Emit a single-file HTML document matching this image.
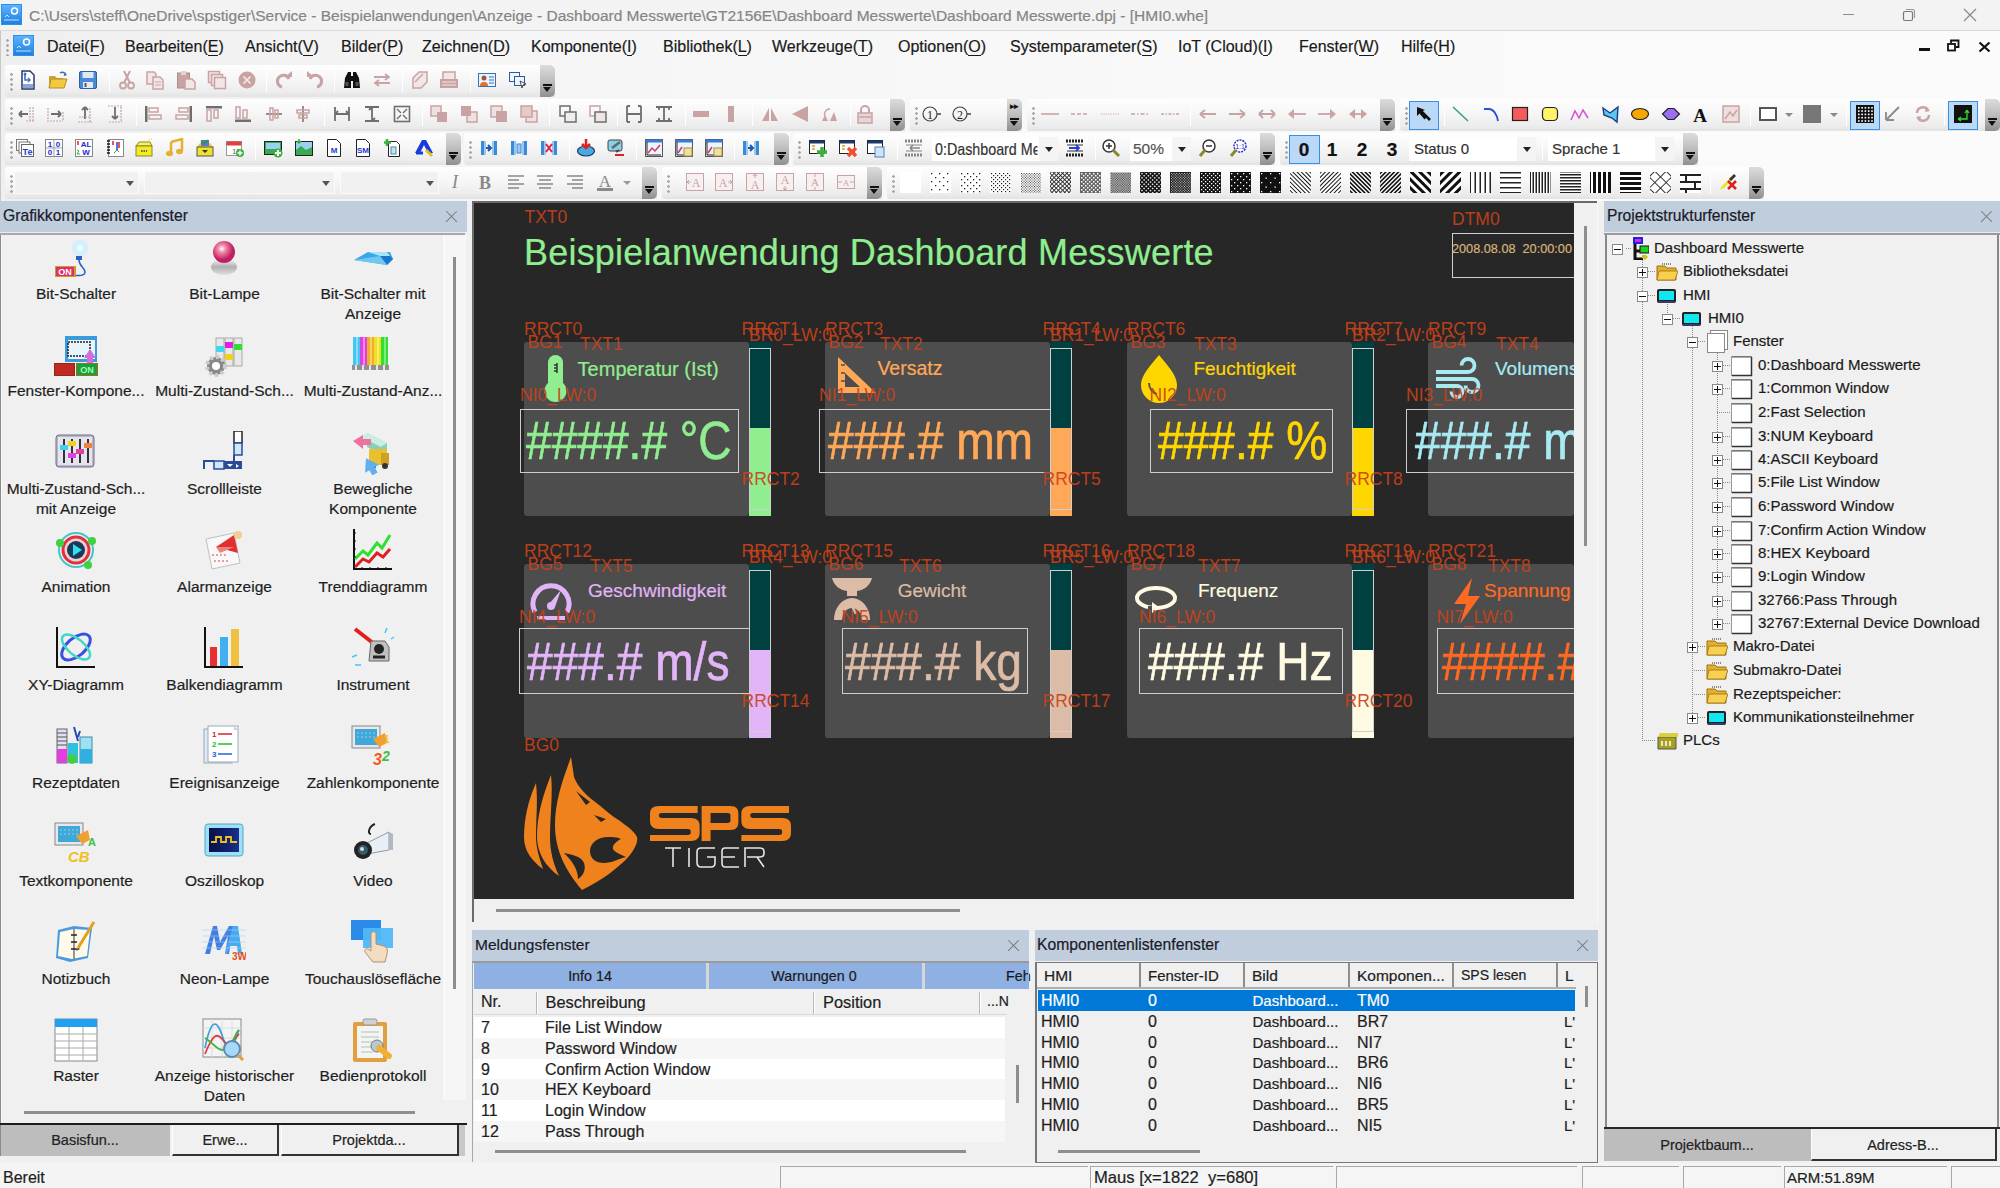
<!DOCTYPE html><html><head><meta charset="utf-8"><style>
*{margin:0;padding:0;box-sizing:border-box}
html,body{width:2000px;height:1188px;overflow:hidden;background:#f0f0f0;font-family:"Liberation Sans",sans-serif;color:#000}
.a{position:absolute}
.t{position:absolute;white-space:pre;line-height:1;-webkit-text-stroke:0.2px currentColor}
.tb{position:absolute;height:32px;background:linear-gradient(#fefefe,#f6f6f6 45%,#ececec 85%,#e2e2e2);border-radius:3px 0 0 3px}
.grip{position:absolute;width:3px;height:19px;background:radial-gradient(circle,#a8a8a8 1.2px,transparent 1.5px) 0 0/3px 5px}
.chev{position:absolute;width:15px;height:32px;border-radius:0 5px 5px 0;background:linear-gradient(#dcdcdc,#bdbdbd 50%,#8f8f8f)}
.chev:after{content:"";position:absolute;left:3px;top:22px;width:0;height:0;border-left:4.5px solid transparent;border-right:4.5px solid transparent;border-top:5px solid #111}
.chev:before{content:"";position:absolute;left:3px;top:19px;width:9px;height:1.5px;background:#111}
.sep{position:absolute;width:1px;height:22px;background:#c9c9c9;border-right:1px solid #fff}
.ptitle{position:absolute;height:31px;background:#bfcddc}
.pclose{position:absolute;width:11px;height:11px}
.pclose:before,.pclose:after{content:"";position:absolute;left:-2px;top:5px;width:15px;height:1.3px;background:#7a7a7a;transform:rotate(45deg)}
.pclose:after{transform:rotate(-45deg)}
.lbl{position:absolute;white-space:pre;line-height:1;font-size:17px;color:#c9421a;opacity:.9}
u{text-decoration:none;border-bottom:1px solid currentColor}
</style></head><body>
<div class="a" style="left:0px;top:0px;width:2000px;height:30px;background:#f3f3f3"></div>
<div class="a" style="left:0px;top:30px;width:2000px;height:1px;background:#d9d9d9"></div>
<div class="t" style="left:29px;top:8px;font-size:15.5px;color:#858585;">C:\Users\steff\OneDrive\spstiger\Service - Beispielanwendungen\Anzeige - Dashboard Messwerte\GT2156E\Dashboard Messwerte\Dashboard Messwerte.dpj - [HMI0.whe]</div>
<div class="a" style="left:1843px;top:14px;width:11px;height:1px;background:#8a8a8a"></div>
<svg class="a" style="left:1902px;top:8px;" width="14" height="14" viewBox="0 0 14 14"><rect x="1.5" y="3.5" width="9" height="9" rx="1.5" fill="none" stroke="#777" stroke-width="1.2"/><path d="M4 1.5h6.5a2 2 0 0 1 2 2V10" fill="none" stroke="#999" stroke-width="1.2"/></svg>
<svg class="a" style="left:1963px;top:8px;" width="14" height="14" viewBox="0 0 14 14"><path d="M1 1L13 13M13 1L1 13" stroke="#888" stroke-width="1.2"/></svg>
<div class="a" style="left:0px;top:31px;width:2000px;height:170px;background:linear-gradient(90deg,#efefef,#f5f5f5 25%,#f9f9f9 60%,#fbfbfb)"></div>
<div class="grip" style="left:6px;top:38px;height:18px"></div>
<div class="t" style="left:47px;top:39px;font-size:16px;color:#1a1a1a">Datei(<u>F</u>)</div>
<div class="t" style="left:125px;top:39px;font-size:16px;color:#1a1a1a">Bearbeiten(<u>E</u>)</div>
<div class="t" style="left:245px;top:39px;font-size:16px;color:#1a1a1a">Ansicht(<u>V</u>)</div>
<div class="t" style="left:341px;top:39px;font-size:16px;color:#1a1a1a">Bilder(<u>P</u>)</div>
<div class="t" style="left:422px;top:39px;font-size:16px;color:#1a1a1a">Zeichnen(<u>D</u>)</div>
<div class="t" style="left:531px;top:39px;font-size:16px;color:#1a1a1a">Komponente(<u>I</u>)</div>
<div class="t" style="left:663px;top:39px;font-size:16px;color:#1a1a1a">Bibliothek(<u>L</u>)</div>
<div class="t" style="left:772px;top:39px;font-size:16px;color:#1a1a1a">Werkzeuge(<u>T</u>)</div>
<div class="t" style="left:898px;top:39px;font-size:16px;color:#1a1a1a">Optionen(<u>O</u>)</div>
<div class="t" style="left:1010px;top:39px;font-size:16px;color:#1a1a1a">Systemparameter(<u>S</u>)</div>
<div class="t" style="left:1178px;top:39px;font-size:16px;color:#1a1a1a">IoT (Cloud)(<u>I</u>)</div>
<div class="t" style="left:1299px;top:39px;font-size:16px;color:#1a1a1a">Fenster(<u>W</u>)</div>
<div class="t" style="left:1401px;top:39px;font-size:16px;color:#1a1a1a">Hilfe(<u>H</u>)</div>
<div class="a" style="left:1919px;top:48px;width:11px;height:3px;background:#111"></div>
<svg class="a" style="left:1947px;top:39px;" width="13" height="13" viewBox="0 0 13 13"><rect x="1" y="5" width="7" height="6.5" fill="none" stroke="#111" stroke-width="1.8"/><path d="M4 4V1.5h7.5V8H9" fill="none" stroke="#111" stroke-width="1.8"/></svg>
<svg class="a" style="left:1978px;top:41px;" width="13" height="12" viewBox="0 0 13 12"><path d="M1.5 1.5L11.5 10.5M11.5 1.5L1.5 10.5" stroke="#111" stroke-width="2.2"/></svg>
<div class="tb" style="left:5px;top:65px;width:550px"></div>
<div class="grip" style="left:10px;top:72px"></div>
<div class="chev" style="left:540px;top:65px"></div>
<svg class="a" style="left:18px;top:70px;" width="20" height="20" viewBox="0 0 20 20"><path d="M4 1h8l4 4v14H4z" fill="#fff" stroke="#2b3a66" stroke-width="1.5"/><path d="M7 4v6h4" fill="none" stroke="#3a6fd0" stroke-width="1.6"/><circle cx="7" cy="4" r="1.5" fill="#3a6fd0"/><path d="M10 8l2 2-2 2" fill="none" stroke="#3a6fd0" stroke-width="1.4"/><rect x="5" y="14" width="10" height="4" fill="#8aa6d8"/></svg>
<svg class="a" style="left:48px;top:70px;" width="20" height="20" viewBox="0 0 20 20"><path d="M1 6h6l1.5 2H15v9H1z" fill="#c9a43a"/><path d="M3 9h16l-3 9H1z" fill="#f3c940" stroke="#b58a20" stroke-width="1"/><path d="M12 3a4 4 0 0 1 6 2" fill="none" stroke="#3c6ea8" stroke-width="1.5"/><path d="M17 3l1.5 2.5-3 .5z" fill="#3c6ea8"/></svg>
<svg class="a" style="left:78px;top:70px;" width="20" height="20" viewBox="0 0 20 20"><rect x="1.5" y="1.5" width="17" height="17" rx="1.5" fill="#4a8ad6" stroke="#2c5fa8" stroke-width="1"/><rect x="4.5" y="2" width="11" height="6" fill="#dfe9f6"/><rect x="5" y="12" width="10" height="6" fill="#e8e8e8"/><rect x="6.5" y="13" width="2" height="4" fill="#2c5fa8"/></svg>
<svg class="a" style="left:117px;top:70px;" width="20" height="20" viewBox="0 0 20 20"><circle cx="6" cy="15.5" r="3" fill="none" stroke="#c9a3a3" stroke-width="1.8"/><circle cx="14" cy="15.5" r="3" fill="none" stroke="#c9a3a3" stroke-width="1.8"/><path d="M7 13L13 1M13 13L7 1" stroke="#c9a3a3" stroke-width="2"/></svg>
<svg class="a" style="left:145px;top:70px;" width="20" height="20" viewBox="0 0 20 20"><path d="M2 2h7l2 2v10H2z" fill="#f3e6e6" stroke="#c9a3a3" stroke-width="1.5"/><path d="M8 7h7l3 3v9H8z" fill="#f3e6e6" stroke="#c9a3a3" stroke-width="1.5"/><path d="M10 12h6M10 15h6" stroke="#c9a3a3"/></svg>
<svg class="a" style="left:176px;top:70px;" width="20" height="20" viewBox="0 0 20 20"><rect x="1.5" y="3" width="12" height="15" fill="#c9a3a3" stroke="#b08a8a"/><rect x="5" y="1" width="5" height="4" fill="#e6d2d2"/><path d="M9 9h7l3 3v7H9z" fill="#f3e6e6" stroke="#c9a3a3" stroke-width="1.5"/></svg>
<svg class="a" style="left:207px;top:70px;" width="20" height="20" viewBox="0 0 20 20"><rect x="1.5" y="1.5" width="11" height="11" fill="#f3e6e6" stroke="#c9a3a3" stroke-width="1.5"/><rect x="4.5" y="4.5" width="11" height="11" fill="#f3e6e6" stroke="#c9a3a3" stroke-width="1.5"/><rect x="7.5" y="7.5" width="11" height="11" fill="#f3e6e6" stroke="#c9a3a3" stroke-width="1.5"/></svg>
<svg class="a" style="left:237px;top:70px;" width="20" height="20" viewBox="0 0 20 20"><circle cx="10" cy="10" r="8.5" fill="#c9a3a3"/><path d="M6.5 6.5l7 7M13.5 6.5l-7 7" stroke="#f6eaea" stroke-width="1.6"/></svg>
<svg class="a" style="left:274px;top:70px;" width="20" height="20" viewBox="0 0 20 20"><path d="M15 9A6 6 0 1 0 8 17" fill="none" stroke="#c9a3a3" stroke-width="3"/><path d="M11 7h7V1z" fill="#c9a3a3"/></svg>
<svg class="a" style="left:305px;top:70px;" width="20" height="20" viewBox="0 0 20 20"><path d="M5 9a6 6 0 1 1 7 8" fill="none" stroke="#c9a3a3" stroke-width="3"/><path d="M9 7H2V1z" fill="#c9a3a3"/></svg>
<svg class="a" style="left:342px;top:70px;" width="20" height="20" viewBox="0 0 20 20"><path d="M2 18l1-10 3-6h3v16zM18 18l-1-10-3-6h-3v16z" fill="#111"/><rect x="8" y="6" width="4" height="5" fill="#111"/><rect x="3.5" y="12" width="3" height="4" fill="#555"/><rect x="13.5" y="12" width="3" height="4" fill="#555"/></svg>
<svg class="a" style="left:372px;top:70px;" width="20" height="20" viewBox="0 0 20 20"><path d="M2 7h15M13 4l4 3-4 3M18 13H3M7 10l-4 3 4 3" fill="none" stroke="#c9a3a3" stroke-width="1.8"/></svg>
<svg class="a" style="left:410px;top:70px;" width="20" height="20" viewBox="0 0 20 20"><path d="M3 8l6-6h8v10l-6 6H3z" fill="#f3e6e6" stroke="#c9a3a3" stroke-width="1.5"/><path d="M5 12l8-8" stroke="#c9a3a3" stroke-width="1.5"/></svg>
<svg class="a" style="left:439px;top:70px;" width="20" height="20" viewBox="0 0 20 20"><rect x="1" y="9" width="18" height="9" fill="#c9a3a3"/><path d="M4 9V2h12v7" fill="#f3e6e6" stroke="#c9a3a3" stroke-width="1.5"/><path d="M3 12h14M3 15h14" stroke="#f3e6e6"/></svg>
<svg class="a" style="left:477px;top:70px;" width="20" height="20" viewBox="0 0 20 20"><rect x="1.5" y="3.5" width="17" height="13" fill="#eaf2fb" stroke="#3d6fb5" stroke-width="1"/><circle cx="7" cy="8" r="2.5" fill="#9a5a3a"/><path d="M3 16a4 4 0 0 1 8 0z" fill="#e2702a"/><path d="M12 7h5M12 10h5M12 13h5" stroke="#3d6fb5"/></svg>
<svg class="a" style="left:508px;top:70px;" width="20" height="20" viewBox="0 0 20 20"><rect x="1.5" y="2.5" width="10" height="9" fill="#eef4fb" stroke="#2f5aa0"/><rect x="6.5" y="6.5" width="10" height="9" fill="#eef4fb" stroke="#2f5aa0"/><path d="M12 11l6 3-3 1-1 3z" fill="#fff" stroke="#222" stroke-width=".8"/></svg>
<div class="sep" style="left:109px;top:70px"></div>
<div class="sep" style="left:266px;top:70px"></div>
<div class="sep" style="left:334px;top:70px"></div>
<div class="sep" style="left:402px;top:70px"></div>
<div class="sep" style="left:470px;top:70px"></div>
<svg width="0" height="0" style="position:absolute"><defs><linearGradient id="gapp" x1="0" y1="0" x2="0" y2="1"><stop offset="0" stop-color="#5cb4ff"/><stop offset="1" stop-color="#1f7fe0"/></linearGradient></defs></svg>
<svg class="a" style="left:1px;top:4px;" width="21" height="21" viewBox="0 0 21 21"><rect x="0" y="0" width="21" height="21" fill="#2b8ff0"/><rect x="1" y="1" width="19" height="19" fill="url(#gapp)"/><circle cx="13.5" cy="7" r="3" fill="none" stroke="#fff" stroke-width="1.5"/><path d="M3 16h15" stroke="#bfe0ff" stroke-width="1"/><path d="M4 13l2-2 2 2" fill="none" stroke="#cfe6ff" stroke-width="1"/></svg>
<svg class="a" style="left:13px;top:35px;" width="21" height="21" viewBox="0 0 21 21"><rect x="0" y="0" width="21" height="21" fill="#2b8ff0"/><rect x="1" y="1" width="19" height="19" fill="url(#gapp)"/><circle cx="13.5" cy="7" r="3" fill="none" stroke="#fff" stroke-width="1.5"/><path d="M3 16h15" stroke="#bfe0ff" stroke-width="1"/><path d="M4 13l2-2 2 2" fill="none" stroke="#cfe6ff" stroke-width="1"/></svg>
<div class="tb" style="left:5px;top:99px;width:900px"></div>
<div class="grip" style="left:10px;top:106px"></div>
<div class="chev" style="left:890px;top:99px"></div>
<svg class="a" style="left:16px;top:104px;" width="20" height="20" viewBox="0 0 20 20"><path d="M3 10h9M3 10l3-3M3 10l3 3" fill="none" stroke="#6e6e6e" stroke-width="1.8"/><path d="M14 3v14M17 3v14M10 17h8" stroke="#c9a3a3" stroke-width="1.2" stroke-dasharray="2 1"/></svg>
<svg class="a" style="left:45px;top:104px;" width="20" height="20" viewBox="0 0 20 20"><path d="M6 10h10M16 10l-3-3M16 10l-3 3" fill="none" stroke="#6e6e6e" stroke-width="1.8"/><path d="M3 4v12M2 17h16M18 8v9" stroke="#c9a3a3" stroke-width="1.2" stroke-dasharray="2 1"/></svg>
<svg class="a" style="left:75px;top:104px;" width="20" height="20" viewBox="0 0 20 20"><path d="M10 3v12M10 3l-3 3M10 3l3 3" fill="none" stroke="#6e6e6e" stroke-width="1.8"/><path d="M3 18h14M15 4v14M4 13h12" stroke="#c9a3a3" stroke-width="1.2" stroke-dasharray="2 1"/></svg>
<svg class="a" style="left:105px;top:104px;" width="20" height="20" viewBox="0 0 20 20"><path d="M10 3v12M10 15l-3-3M10 15l3-3" fill="none" stroke="#6e6e6e" stroke-width="1.8"/><path d="M3 2h14M16 3v15M4 18h13" stroke="#c9a3a3" stroke-width="1.2" stroke-dasharray="2 1"/></svg>
<svg class="a" style="left:143px;top:104px;" width="20" height="20" viewBox="0 0 20 20"><rect x="2" y="2" width="2.5" height="16" fill="#6e6e6e"/><rect x="6" y="4" width="9" height="4" fill="none" stroke="#c9a3a3" stroke-width="1.5"/><rect x="6" y="11" width="12" height="4" fill="none" stroke="#c9a3a3" stroke-width="1.5"/></svg>
<svg class="a" style="left:174px;top:104px;" width="20" height="20" viewBox="0 0 20 20"><rect x="15.5" y="2" width="2.5" height="16" fill="#6e6e6e"/><rect x="5" y="4" width="9" height="4" fill="none" stroke="#c9a3a3" stroke-width="1.5"/><rect x="2" y="11" width="12" height="4" fill="none" stroke="#c9a3a3" stroke-width="1.5"/></svg>
<svg class="a" style="left:204px;top:104px;" width="20" height="20" viewBox="0 0 20 20"><rect x="2" y="2" width="16" height="2.5" fill="#6e6e6e"/><rect x="3" y="6" width="4" height="11" fill="none" stroke="#c9a3a3" stroke-width="1.5"/><rect x="10" y="6" width="4" height="8" fill="none" stroke="#c9a3a3" stroke-width="1.5"/></svg>
<svg class="a" style="left:233px;top:104px;" width="20" height="20" viewBox="0 0 20 20"><rect x="2" y="15.5" width="16" height="2.5" fill="#6e6e6e"/><rect x="3" y="3" width="4" height="11" fill="none" stroke="#c9a3a3" stroke-width="1.5"/><rect x="10" y="6" width="4" height="8" fill="none" stroke="#c9a3a3" stroke-width="1.5"/></svg>
<svg class="a" style="left:264px;top:104px;" width="20" height="20" viewBox="0 0 20 20"><path d="M2 10h16" stroke="#6e6e6e" stroke-width="1.5"/><rect x="6" y="4" width="3" height="12" fill="none" stroke="#c9a3a3" stroke-width="1.5"/><rect x="11" y="6" width="3" height="8" fill="none" stroke="#c9a3a3" stroke-width="1.5"/></svg>
<svg class="a" style="left:293px;top:104px;" width="20" height="20" viewBox="0 0 20 20"><path d="M10 2v16" stroke="#6e6e6e" stroke-width="1.5"/><rect x="4" y="6" width="12" height="3" fill="none" stroke="#c9a3a3" stroke-width="1.5"/><rect x="6" y="11" width="8" height="3" fill="none" stroke="#c9a3a3" stroke-width="1.5"/></svg>
<svg class="a" style="left:332px;top:104px;" width="20" height="20" viewBox="0 0 20 20"><path d="M3 3v14M17 3v14M3 10h14M3 10l3-3M17 10l-3-3" fill="none" stroke="#6e6e6e" stroke-width="1.8"/></svg>
<svg class="a" style="left:362px;top:104px;" width="20" height="20" viewBox="0 0 20 20"><path d="M3 3h14M3 17h14M10 3v14M10 3l-3 3M10 17l3-3" fill="none" stroke="#6e6e6e" stroke-width="1.8"/></svg>
<svg class="a" style="left:392px;top:104px;" width="20" height="20" viewBox="0 0 20 20"><rect x="2.5" y="2.5" width="15" height="15" fill="none" stroke="#6e6e6e" stroke-width="1.6"/><path d="M5 5l4 4M15 5l-4 4M5 15l4-4M15 15l-4-4" stroke="#6e6e6e" stroke-width="1.4"/></svg>
<svg class="a" style="left:429px;top:104px;" width="20" height="20" viewBox="0 0 20 20"><rect x="2" y="2" width="10" height="10" fill="#f0e0e0" stroke="#c9a3a3" stroke-width="1.5"/><rect x="8" y="8" width="10" height="10" fill="#c9a3a3"/></svg>
<svg class="a" style="left:459px;top:104px;" width="20" height="20" viewBox="0 0 20 20"><rect x="8" y="8" width="10" height="10" fill="#f0e0e0" stroke="#c9a3a3" stroke-width="1.5"/><rect x="2" y="2" width="10" height="10" fill="#c9a3a3"/></svg>
<svg class="a" style="left:489px;top:104px;" width="20" height="20" viewBox="0 0 20 20"><rect x="2" y="2" width="11" height="11" fill="#f0e0e0" stroke="#c9a3a3" stroke-width="1.5"/><rect x="7" y="7" width="11" height="11" fill="#c9a3a3"/></svg>
<svg class="a" style="left:519px;top:104px;" width="20" height="20" viewBox="0 0 20 20"><rect x="7" y="7" width="11" height="11" fill="#f0e0e0" stroke="#c9a3a3" stroke-width="1.5"/><rect x="2" y="2" width="11" height="11" fill="#e6caca" stroke="#c9a3a3" stroke-width="1.5"/></svg>
<svg class="a" style="left:558px;top:104px;" width="20" height="20" viewBox="0 0 20 20"><rect x="2" y="2" width="10" height="10" fill="none" stroke="#6e6e6e" stroke-width="1.5"/><rect x="7" y="8" width="11" height="10" fill="#eee" stroke="#6e6e6e" stroke-width="1.5"/></svg>
<svg class="a" style="left:588px;top:104px;" width="20" height="20" viewBox="0 0 20 20"><rect x="2" y="2" width="10" height="10" fill="none" stroke="#c9a3a3" stroke-width="1.5"/><rect x="7" y="8" width="11" height="10" fill="#f0e4e4" stroke="#6e6e6e" stroke-width="1.5"/></svg>
<svg class="a" style="left:624px;top:104px;" width="20" height="20" viewBox="0 0 20 20"><path d="M3 2v16M17 2v16M3 10h14M3 2h3M3 18h3M17 2h-3M17 18h-3" fill="none" stroke="#6e6e6e" stroke-width="1.8"/></svg>
<svg class="a" style="left:654px;top:104px;" width="20" height="20" viewBox="0 0 20 20"><path d="M2 3h16M2 17h16M10 3v14M5 3v3M15 3v3M5 17v-3M15 17v-3" fill="none" stroke="#6e6e6e" stroke-width="1.8"/></svg>
<svg class="a" style="left:691px;top:104px;" width="20" height="20" viewBox="0 0 20 20"><rect x="2" y="7" width="16" height="6" fill="#c9a3a3"/></svg>
<svg class="a" style="left:721px;top:104px;" width="20" height="20" viewBox="0 0 20 20"><rect x="7" y="2" width="6" height="16" fill="#c9a3a3"/></svg>
<svg class="a" style="left:760px;top:104px;" width="20" height="20" viewBox="0 0 20 20"><path d="M9 4L2 17h7zM11 4l7 13h-7z" fill="#c9a3a3"/></svg>
<svg class="a" style="left:790px;top:104px;" width="20" height="20" viewBox="0 0 20 20"><path d="M18 2v16L2 10z" fill="#c9a3a3"/></svg>
<svg class="a" style="left:820px;top:104px;" width="20" height="20" viewBox="0 0 20 20"><path d="M10 17L17 17 14 8z" fill="#c9a3a3"/><path d="M5 12a5 5 0 0 1 5-7" fill="none" stroke="#c9a3a3" stroke-width="1.5"/><path d="M2 17h6l-3-6z" fill="#c9a3a3"/></svg>
<svg class="a" style="left:855px;top:104px;" width="20" height="20" viewBox="0 0 20 20"><path d="M6 9V6a4 4 0 0 1 8 0v3" fill="none" stroke="#c9a3a3" stroke-width="2"/><rect x="3" y="9" width="14" height="10" fill="#e8d6d6" stroke="#c9a3a3" stroke-width="1.5"/><path d="M4 13h12" stroke="#c9a3a3" stroke-width="1.5"/></svg>
<div class="sep" style="left:136px;top:104px"></div>
<div class="sep" style="left:324px;top:104px"></div>
<div class="sep" style="left:422px;top:104px"></div>
<div class="sep" style="left:549px;top:104px"></div>
<div class="sep" style="left:617px;top:104px"></div>
<div class="sep" style="left:685px;top:104px"></div>
<div class="sep" style="left:752px;top:104px"></div>
<div class="sep" style="left:850px;top:104px"></div>
<div class="tb" style="left:910px;top:99px;width:112px"></div>
<div class="grip" style="left:915px;top:106px"></div>
<div class="chev" style="left:1007px;top:99px"></div>
<svg class="a" style="left:922px;top:104px;" width="20" height="20" viewBox="0 0 20 20"><circle cx="8" cy="10" r="7" fill="none" stroke="#444" stroke-width="1.2"/><text x="8" y="14.5" font-size="12" text-anchor="middle" font-family="Liberation Serif" fill="#222">1</text><path d="M15 10h4" stroke="#444" stroke-width="1.5"/></svg>
<svg class="a" style="left:952px;top:104px;" width="20" height="20" viewBox="0 0 20 20"><circle cx="8" cy="10" r="7" fill="none" stroke="#444" stroke-width="1.2"/><text x="8" y="14.5" font-size="12" text-anchor="middle" font-family="Liberation Serif" fill="#222">2</text><path d="M15 10h4" stroke="#444" stroke-width="1.5"/></svg>
<div class="t" style="left:1010px;top:102px;font-size:9px;color:#111;letter-spacing:-1px">&#9656;&#9656;</div>
<div class="tb" style="left:1027px;top:99px;width:368px"></div>
<div class="grip" style="left:1032px;top:106px"></div>
<div class="chev" style="left:1380px;top:99px"></div>
<svg class="a" style="left:1040px;top:104px;" width="20" height="20" viewBox="0 0 20 20"><path d="M1 10h18" stroke="#c9a3a3" stroke-width="1.6"/></svg>
<svg class="a" style="left:1070px;top:104px;" width="20" height="20" viewBox="0 0 20 20"><path d="M1 10h18" stroke="#c9a3a3" stroke-width="1.6" stroke-dasharray="4 2"/></svg>
<svg class="a" style="left:1100px;top:104px;" width="20" height="20" viewBox="0 0 20 20"><path d="M1 10h18" stroke="#c9a3a3" stroke-width="1.2" stroke-dasharray="1.2 1.2"/></svg>
<svg class="a" style="left:1130px;top:104px;" width="20" height="20" viewBox="0 0 20 20"><path d="M1 10h18" stroke="#c9a3a3" stroke-width="1.6" stroke-dasharray="4 2 1.5 2"/></svg>
<svg class="a" style="left:1160px;top:104px;" width="20" height="20" viewBox="0 0 20 20"><path d="M1 10h18" stroke="#c9a3a3" stroke-width="1.6" stroke-dasharray="3 1.5 1.5 1.5"/></svg>
<svg class="a" style="left:1198px;top:104px;" width="20" height="20" viewBox="0 0 20 20"><path d="M2 10h16M2 10l5-4M2 10l5 4" fill="none" stroke="#c9a3a3" stroke-width="1.8"/></svg>
<svg class="a" style="left:1227px;top:104px;" width="20" height="20" viewBox="0 0 20 20"><path d="M2 10h16M18 10l-5-4M18 10l-5 4" fill="none" stroke="#c9a3a3" stroke-width="1.8"/></svg>
<svg class="a" style="left:1257px;top:104px;" width="20" height="20" viewBox="0 0 20 20"><path d="M2 10h16M2 10l4-4M2 10l4 4M18 10l-4-4M18 10l-4 4" fill="none" stroke="#c9a3a3" stroke-width="1.8"/></svg>
<svg class="a" style="left:1287px;top:104px;" width="20" height="20" viewBox="0 0 20 20"><path d="M5 10h14" stroke="#c9a3a3" stroke-width="1.8"/><path d="M1 10l6-5v10z" fill="#c9a3a3"/></svg>
<svg class="a" style="left:1317px;top:104px;" width="20" height="20" viewBox="0 0 20 20"><path d="M1 10h14" stroke="#c9a3a3" stroke-width="1.8"/><path d="M19 10l-6-5v10z" fill="#c9a3a3"/></svg>
<svg class="a" style="left:1348px;top:104px;" width="20" height="20" viewBox="0 0 20 20"><path d="M5 10h10" stroke="#c9a3a3" stroke-width="1.8"/><path d="M1 10l6-5v10zM19 10l-6-5v10z" fill="#c9a3a3"/></svg>
<div class="sep" style="left:1190px;top:104px"></div>
<div class="tb" style="left:1400px;top:99px;width:600px"></div>
<div class="grip" style="left:1405px;top:106px"></div>
<div class="chev" style="left:1985px;top:99px"></div>
<div class="a" style="left:1409px;top:101px;width:30px;height:29px;background:#b9d9f7;border:1px solid #3a8ee6"></div>
<svg class="a" style="left:1414px;top:104px;" width="20" height="20" viewBox="0 0 20 20"><path d="M3 3l0 9 2.5-2.5 5 6 2-2-5-6L11 6z" fill="#111"/><path d="M5 5l11 11" stroke="#111" stroke-width="2.5"/></svg>
<svg class="a" style="left:1451px;top:104px;" width="20" height="20" viewBox="0 0 20 20"><path d="M2 3l15 14" stroke="#2fa07a" stroke-width="1.5"/></svg>
<svg class="a" style="left:1482px;top:104px;" width="20" height="20" viewBox="0 0 20 20"><path d="M2 5h5c4 0 8 5 9 12" fill="none" stroke="#2a4fd8" stroke-width="1.8"/></svg>
<svg class="a" style="left:1510px;top:104px;" width="20" height="20" viewBox="0 0 20 20"><rect x="2.5" y="3.5" width="15" height="13" fill="#f25c5c" stroke="#222" stroke-width="1.2"/></svg>
<svg class="a" style="left:1540px;top:104px;" width="20" height="20" viewBox="0 0 20 20"><rect x="2.5" y="3.5" width="15" height="13" rx="4" fill="#fff36a" stroke="#222" stroke-width="1.2"/></svg>
<svg class="a" style="left:1570px;top:104px;" width="20" height="20" viewBox="0 0 20 20"><path d="M1 16l4-9 4 7 4-8 5 8" fill="none" stroke="#d94ed9" stroke-width="1.5"/></svg>
<svg class="a" style="left:1601px;top:104px;" width="20" height="20" viewBox="0 0 20 20"><path d="M2 4l7 5 8-6-1 15-5-4-8-3z" fill="#5ac8f0" stroke="#1b3a8a" stroke-width="1.4"/></svg>
<svg class="a" style="left:1630px;top:104px;" width="20" height="20" viewBox="0 0 20 20"><ellipse cx="10" cy="10" rx="8.5" ry="5.5" fill="#f5a800" stroke="#222" stroke-width="1.2"/></svg>
<svg class="a" style="left:1661px;top:104px;" width="20" height="20" viewBox="0 0 20 20"><path d="M1.5 10L7 4.5h6l5.5 5.5-5.5 5.5H7z" fill="#9a6ef5" stroke="#222" stroke-width="1.2"/></svg>
<svg class="a" style="left:1690px;top:104px;" width="20" height="20" viewBox="0 0 20 20"><text x="10" y="17.5" font-size="19" text-anchor="middle" font-family="Liberation Serif" font-weight="bold" fill="#111">A</text></svg>
<svg class="a" style="left:1721px;top:104px;" width="20" height="20" viewBox="0 0 20 20"><rect x="2" y="2" width="16" height="16" fill="#eedede" stroke="#c9a3a3" stroke-width="1.5"/><path d="M4 15l5-7 3 4 4-6" fill="none" stroke="#c9a3a3" stroke-width="1.5"/></svg>
<svg class="a" style="left:1758px;top:104px;" width="20" height="20" viewBox="0 0 20 20"><rect x="2" y="4" width="16" height="12" fill="#fff" stroke="#555" stroke-width="2"/></svg>
<svg class="a" style="left:1802px;top:104px;" width="20" height="20" viewBox="0 0 20 20"><rect x="1" y="1" width="18" height="18" fill="#777"/></svg>
<svg class="a" style="left:1882px;top:104px;" width="20" height="20" viewBox="0 0 20 20"><path d="M17 3L4 16M4 16h8M4 16V8" fill="none" stroke="#8a8a8a" stroke-width="1.8"/></svg>
<svg class="a" style="left:1913px;top:104px;" width="20" height="20" viewBox="0 0 20 20"><path d="M4 9a6 6 0 0 1 11-3M16 11a6 6 0 0 1-11 3" fill="none" stroke="#c9a3a3" stroke-width="2.5"/><path d="M13 3l4 4-5 1zM7 17l-4-4 5-1z" fill="#c9a3a3"/></svg>
<div class="sep" style="left:1444px;top:104px"></div>
<div class="sep" style="left:1750px;top:104px"></div>
<div class="sep" style="left:1846px;top:104px"></div>
<div class="sep" style="left:1944px;top:104px"></div>
<div class="a" style="left:1785px;top:113px;border-left:4px solid transparent;border-right:4px solid transparent;border-top:4px solid #8a8a8a"></div>
<div class="a" style="left:1830px;top:113px;border-left:4px solid transparent;border-right:4px solid transparent;border-top:4px solid #8a8a8a"></div>
<div class="a" style="left:1850px;top:101px;width:30px;height:29px;background:#b9d9f7;border:1px solid #3a8ee6"></div>
<svg class="a" style="left:1855px;top:104px;" width="20" height="20" viewBox="0 0 20 20"><rect x="1" y="1" width="18" height="18" fill="#111"/><rect x="3.0" y="3.0" width="1.6" height="1.6" fill="#fff"/><rect x="3.0" y="6.3" width="1.6" height="1.6" fill="#fff"/><rect x="3.0" y="9.6" width="1.6" height="1.6" fill="#fff"/><rect x="3.0" y="12.9" width="1.6" height="1.6" fill="#fff"/><rect x="3.0" y="16.2" width="1.6" height="1.6" fill="#fff"/><rect x="6.3" y="3.0" width="1.6" height="1.6" fill="#fff"/><rect x="6.3" y="6.3" width="1.6" height="1.6" fill="#fff"/><rect x="6.3" y="9.6" width="1.6" height="1.6" fill="#fff"/><rect x="6.3" y="12.9" width="1.6" height="1.6" fill="#fff"/><rect x="6.3" y="16.2" width="1.6" height="1.6" fill="#fff"/><rect x="9.6" y="3.0" width="1.6" height="1.6" fill="#fff"/><rect x="9.6" y="6.3" width="1.6" height="1.6" fill="#fff"/><rect x="9.6" y="9.6" width="1.6" height="1.6" fill="#fff"/><rect x="9.6" y="12.9" width="1.6" height="1.6" fill="#fff"/><rect x="9.6" y="16.2" width="1.6" height="1.6" fill="#fff"/><rect x="12.9" y="3.0" width="1.6" height="1.6" fill="#fff"/><rect x="12.9" y="6.3" width="1.6" height="1.6" fill="#fff"/><rect x="12.9" y="9.6" width="1.6" height="1.6" fill="#fff"/><rect x="12.9" y="12.9" width="1.6" height="1.6" fill="#fff"/><rect x="12.9" y="16.2" width="1.6" height="1.6" fill="#fff"/><rect x="16.2" y="3.0" width="1.6" height="1.6" fill="#fff"/><rect x="16.2" y="6.3" width="1.6" height="1.6" fill="#fff"/><rect x="16.2" y="9.6" width="1.6" height="1.6" fill="#fff"/><rect x="16.2" y="12.9" width="1.6" height="1.6" fill="#fff"/><rect x="16.2" y="16.2" width="1.6" height="1.6" fill="#fff"/></svg>
<div class="a" style="left:1948px;top:101px;width:30px;height:29px;background:#b9d9f7;border:1px solid #3a8ee6"></div>
<svg class="a" style="left:1953px;top:104px;" width="20" height="20" viewBox="0 0 20 20"><rect x="1" y="1" width="18" height="18" fill="#111"/><path d="M5 15h9V6M14 6l-2 3M14 6l2 3M5 15l3-2M5 15l3 2" fill="none" stroke="#2be02b" stroke-width="1.3"/></svg>
<div class="tb" style="left:5px;top:133px;width:456px"></div>
<div class="grip" style="left:10px;top:140px"></div>
<div class="chev" style="left:446px;top:133px"></div>
<svg class="a" style="left:15px;top:138px;" width="20" height="20" viewBox="0 0 20 20"><rect x="1.5" y="1.5" width="11" height="11" fill="#fff" stroke="#777"/><rect x="4" y="4" width="11" height="11" fill="#fff" stroke="#777"/><rect x="6.5" y="6.5" width="12" height="12" fill="#fff" stroke="#666"/><text x="12.5" y="16.5" font-size="9" text-anchor="middle" font-weight="bold" fill="#1a3ad8" font-family="Liberation Sans">Te</text></svg>
<svg class="a" style="left:44px;top:138px;" width="20" height="20" viewBox="0 0 20 20"><rect x="1.5" y="1.5" width="17" height="17" fill="#fff" stroke="#888"/><path d="M10 2v16M2 10h16" stroke="#888" stroke-width=".8"/><text x="6" y="9" font-size="8" text-anchor="middle" font-weight="bold" fill="#1a2ad8" font-family="Liberation Sans">1</text><text x="14" y="9" font-size="8" text-anchor="middle" font-weight="bold" fill="#1a2ad8" font-family="Liberation Sans">0</text><text x="6" y="17" font-size="8" text-anchor="middle" font-weight="bold" fill="#1a2ad8" font-family="Liberation Sans">0</text><text x="14" y="17" font-size="8" text-anchor="middle" font-weight="bold" fill="#1a2ad8" font-family="Liberation Sans">1</text></svg>
<svg class="a" style="left:74px;top:138px;" width="20" height="20" viewBox="0 0 20 20"><rect x="1.5" y="1.5" width="17" height="17" fill="#fff" stroke="#888"/><text x="12" y="9" font-size="8" text-anchor="middle" font-weight="bold" fill="#1a2ad8" font-family="Liberation Sans">AL</text><text x="12" y="17" font-size="8" text-anchor="middle" font-weight="bold" fill="#1a2ad8" font-family="Liberation Sans">W</text><path d="M4 3v4" stroke="#e02020" stroke-width="1.5"/><path d="M3 12l2 1-2 3h3" fill="none" stroke="#3a3" stroke-width="1"/></svg>
<svg class="a" style="left:105px;top:138px;" width="20" height="20" viewBox="0 0 20 20"><rect x="3.5" y="1.5" width="15" height="17" fill="#fff" stroke="#888"/><path d="M2 3h3M2 6h3M2 9h3M2 12h3M2 15h3" stroke="#111" stroke-width="1.5"/><path d="M8 3v4M14 4v6" stroke="#e02020" stroke-width="1.5"/><path d="M12 4v8" stroke="#2244dd" stroke-width="1.5"/><path d="M9 15l3-3 2 2" fill="none" stroke="#3a3"/></svg>
<svg class="a" style="left:134px;top:138px;" width="20" height="20" viewBox="0 0 20 20"><path d="M2 8l3-4h11l2 4z" fill="#f5f06a" stroke="#8a8a20"/><rect x="2" y="8" width="16" height="10" fill="#f2ea2a" stroke="#8a8a20"/><path d="M7 13h6" stroke="#6a6a10" stroke-width="2" stroke-dasharray="1.5 1"/><path d="M14 2l4-1" stroke="#f6f080" stroke-width="1.5"/></svg>
<svg class="a" style="left:165px;top:138px;" width="20" height="20" viewBox="0 0 20 20"><path d="M6 4l11-3v12" fill="none" stroke="#e6b030" stroke-width="2.5"/><ellipse cx="4.5" cy="15.5" rx="3.5" ry="2.8" fill="#e6b030"/><ellipse cx="14.5" cy="13.5" rx="3.5" ry="2.8" fill="#e6b030"/><path d="M6 4v11" stroke="#e6b030" stroke-width="2.5"/></svg>
<svg class="a" style="left:195px;top:138px;" width="20" height="20" viewBox="0 0 20 20"><path d="M2 9l3-4h10l3 4z" fill="#e0d040"/><rect x="2" y="9" width="16" height="9" fill="#f0e030" stroke="#555"/><path d="M7 12h6l-3 3z" fill="#333"/><rect x="6" y="2" width="8" height="6" fill="#5a7ad0"/><path d="M6 3l3 3 4-4" stroke="#2a9a2a" stroke-width="1.5" fill="none"/></svg>
<svg class="a" style="left:225px;top:138px;" width="20" height="20" viewBox="0 0 20 20"><rect x="1.5" y="3.5" width="15" height="14" fill="#fff" stroke="#999"/><rect x="1.5" y="3.5" width="15" height="4" fill="#e04040"/><text x="7" y="16" font-size="8" font-family="Liberation Sans" fill="#666">15</text><circle cx="15" cy="15" r="4" fill="#3ab040"/><path d="M15 12.5v5M12.5 15h5" stroke="#fff" stroke-width="1.5"/></svg>
<svg class="a" style="left:263px;top:138px;" width="20" height="20" viewBox="0 0 20 20"><rect x="1.5" y="3.5" width="17" height="13" fill="#3aaa50" stroke="#222"/><rect x="3" y="5" width="14" height="6" fill="#9ad0f0"/><circle cx="15" cy="15" r="4.5" fill="#3ab040"/><path d="M15 12v6M12 15h6" stroke="#fff" stroke-width="2"/></svg>
<svg class="a" style="left:294px;top:138px;" width="20" height="20" viewBox="0 0 20 20"><rect x="1.5" y="3.5" width="17" height="14" fill="#9ad0f0" stroke="#222"/><path d="M2 12l5-4 5 4 6-3v8H2z" fill="#3aaa50"/><path d="M5 1v5M3 3l2 2 2-2" stroke="#3a3" stroke-width="1.5" fill="none"/></svg>
<svg class="a" style="left:324px;top:138px;" width="20" height="20" viewBox="0 0 20 20"><path d="M3.5 1.5h9l4 4v13h-13z" fill="#fff" stroke="#222"/><text x="10" y="15" font-size="8" font-weight="bold" text-anchor="middle" font-family="Liberation Sans" fill="#1a3ad8">M</text></svg>
<svg class="a" style="left:353px;top:138px;" width="20" height="20" viewBox="0 0 20 20"><path d="M3.5 1.5h9l4 4v13h-13z" fill="#fff" stroke="#222"/><text x="10" y="15" font-size="8" font-weight="bold" text-anchor="middle" font-family="Liberation Sans" fill="#1a3ad8">SM</text></svg>
<svg class="a" style="left:383px;top:138px;" width="20" height="20" viewBox="0 0 20 20"><path d="M5.5 3.5h8l3 3v12h-11z" fill="#fff" stroke="#222"/><rect x="8" y="9" width="5" height="7" fill="#bfe3f0" stroke="#4a8aa0"/><path d="M4 1v7M1 4.5h7" stroke="#3ab040" stroke-width="2.5"/></svg>
<svg class="a" style="left:414px;top:138px;" width="20" height="20" viewBox="0 0 20 20"><path d="M1 15L8 2h4l7 13h-5l-4-8-4 8z" fill="#1a3ae0"/><path d="M12 12l6 6" stroke="#e0c020" stroke-width="3"/><path d="M2 15h7" stroke="#1a3ae0" stroke-width="3"/></svg>
<div class="sep" style="left:255px;top:138px"></div>
<div class="tb" style="left:464px;top:133px;width:325px"></div>
<div class="grip" style="left:469px;top:140px"></div>
<div class="chev" style="left:774px;top:133px"></div>
<svg class="a" style="left:479px;top:138px;" width="20" height="20" viewBox="0 0 20 20"><path d="M2 3h3v14H2z M15 3h3v14h-3z" fill="#3a8ad8"/><path d="M5 3h2v14H5zM13 3h2v14h-2z" fill="#9ac8ef"/><path d="M7 10h5M9 7l3 3-3 3" fill="none" stroke="#1a5ab0" stroke-width="2"/></svg>
<svg class="a" style="left:509px;top:138px;" width="20" height="20" viewBox="0 0 20 20"><path d="M2 3h3v14H2z M15 3h3v14h-3z" fill="#3a8ad8"/><path d="M5 3h2v14H5zM13 3h2v14h-2z" fill="#9ac8ef"/><rect x="8" y="6" width="4" height="9" fill="#9ac8ef" stroke="#3a8ad8"/></svg>
<svg class="a" style="left:539px;top:138px;" width="20" height="20" viewBox="0 0 20 20"><path d="M2 3h3v14H2z M15 3h3v14h-3z" fill="#3a8ad8"/><path d="M5 3h2v14H5zM13 3h2v14h-2z" fill="#9ac8ef"/><path d="M7 6l6 8M13 6l-6 8" stroke="#e02040" stroke-width="2"/></svg>
<svg class="a" style="left:576px;top:138px;" width="20" height="20" viewBox="0 0 20 20"><ellipse cx="10" cy="13" rx="8.5" ry="5" fill="#4aa8e0" stroke="#1a3a6a" stroke-width="1.2"/><path d="M10 1v8M6 6l4 4 4-4" fill="none" stroke="#e02020" stroke-width="2.5"/></svg>
<svg class="a" style="left:606px;top:138px;" width="20" height="20" viewBox="0 0 20 20"><rect x="2" y="2" width="14" height="11" rx="2" fill="#8ad0e8" stroke="#444"/><path d="M6 10l8-6" stroke="#666" stroke-width="2.5"/><path d="M9 17h9" stroke="#e02020" stroke-width="2"/><path d="M10 14l3-2" stroke="#444" stroke-width="2"/></svg>
<svg class="a" style="left:644px;top:138px;" width="20" height="20" viewBox="0 0 20 20"><rect x="1.5" y="1.5" width="17" height="17" fill="#eaf4fb" stroke="#555"/><rect x="1.5" y="1.5" width="17" height="3" fill="#3a7ad8"/><path d="M3 4v13h14" fill="none" stroke="#222"/><path d="M4 15l4-5 3 3 5-6" fill="none" stroke="#e03060" stroke-width="1.5"/></svg>
<svg class="a" style="left:674px;top:138px;" width="20" height="20" viewBox="0 0 20 20"><rect x="1.5" y="1.5" width="17" height="17" fill="#eaf4fb" stroke="#555"/><rect x="1.5" y="1.5" width="17" height="3" fill="#3a7ad8"/><path d="M3 4v13h14" fill="none" stroke="#222"/><path d="M4 15l4-6" stroke="#e03060" stroke-width="1.5"/><rect x="10" y="10" width="8" height="8" fill="#f0e0a0" stroke="#a09040"/></svg>
<svg class="a" style="left:704px;top:138px;" width="20" height="20" viewBox="0 0 20 20"><rect x="1.5" y="1.5" width="17" height="17" fill="#eaf4fb" stroke="#555"/><rect x="1.5" y="1.5" width="17" height="3" fill="#3a7ad8"/><path d="M3 4v13h14" fill="none" stroke="#222"/><path d="M4 15l4-6" stroke="#e03060" stroke-width="1.5"/><rect x="10" y="10" width="8" height="8" fill="#f0e0a0" stroke="#a09040"/></svg>
<svg class="a" style="left:741px;top:138px;" width="20" height="20" viewBox="0 0 20 20"><path d="M2 3h3v14H2z M15 3h3v14h-3z" fill="#3a8ad8"/><path d="M5 3h2v14H5zM13 3h2v14h-2z" fill="#9ac8ef"/><path d="M7 10h5M9 7l3 3-3 3" fill="none" stroke="#1a5ab0" stroke-width="2"/></svg>
<div class="sep" style="left:569px;top:138px"></div>
<div class="sep" style="left:636px;top:138px"></div>
<div class="sep" style="left:734px;top:138px"></div>
<div class="tb" style="left:793px;top:133px;width:482px"></div>
<div class="grip" style="left:798px;top:140px"></div>
<div class="chev" style="left:1260px;top:133px"></div>
<svg class="a" style="left:808px;top:138px;" width="20" height="20" viewBox="0 0 20 20"><rect x="1.5" y="2.5" width="15" height="13" fill="#fff" stroke="#222"/><rect x="1.5" y="2.5" width="15" height="3" fill="#1a3a6a"/><path d="M4 8h3M4 11h3" stroke="#e0a020" stroke-width="1.5"/><path d="M14 9v10M9 14h10" stroke="#3ab040" stroke-width="3.5"/></svg>
<svg class="a" style="left:838px;top:138px;" width="20" height="20" viewBox="0 0 20 20"><rect x="1.5" y="2.5" width="15" height="13" fill="#fff" stroke="#222"/><rect x="1.5" y="2.5" width="15" height="3" fill="#1a3a6a"/><path d="M4 8h3M4 11h3" stroke="#e0a020" stroke-width="1.5"/><path d="M10 10l8 8M18 10l-8 8" stroke="#f05030" stroke-width="3.5"/></svg>
<svg class="a" style="left:866px;top:138px;" width="20" height="20" viewBox="0 0 20 20"><rect x="1.5" y="2.5" width="15" height="13" fill="#fff" stroke="#222"/><rect x="1.5" y="2.5" width="15" height="3" fill="#1a3a6a"/><rect x="9" y="9" width="9" height="10" fill="#cfe3f7" stroke="#4a80c0"/></svg>
<svg class="a" style="left:904px;top:138px;" width="20" height="20" viewBox="0 0 20 20"><path d="M1 3h18M1 17h18" stroke="#888" stroke-width="3" stroke-dasharray="2 1"/><path d="M2 7h16M2 13h16" stroke="#888"/><path d="M6 10h10M6 10l3-3M6 10l3 3" fill="none" stroke="#888" stroke-width="1.5"/></svg>
<svg class="a" style="left:1065px;top:138px;" width="20" height="20" viewBox="0 0 20 20"><path d="M1 3h18M1 17h18" stroke="#222" stroke-width="3" stroke-dasharray="2 1"/><path d="M2 7h16M2 13h16" stroke="#333"/><path d="M4 10h10M11 7l3 3-3 3" fill="none" stroke="#2240e0" stroke-width="1.8"/></svg>
<svg class="a" style="left:1101px;top:138px;" width="20" height="20" viewBox="0 0 20 20"><circle cx="8" cy="8" r="6" fill="#fff" stroke="#333" stroke-width="1.5"/><path d="M5 8h6M8 5v6" stroke="#333" stroke-width="1.5"/><path d="M12 12l6 6" stroke="#8a8a2a" stroke-width="3"/></svg>
<svg class="a" style="left:1198px;top:138px;" width="20" height="20" viewBox="0 0 20 20"><circle cx="11" cy="8" r="6" fill="#fff" stroke="#333" stroke-width="1.5"/><path d="M8 8h6" stroke="#333" stroke-width="1.5"/><path d="M7 12l-5 6" stroke="#8a8a2a" stroke-width="3"/></svg>
<svg class="a" style="left:1229px;top:138px;" width="20" height="20" viewBox="0 0 20 20"><circle cx="11" cy="8" r="6" fill="#fff" stroke="#2a2ad0" stroke-width="1.5" stroke-dasharray="2 1"/><text x="11" y="11" font-size="7" text-anchor="middle" font-family="Liberation Sans" fill="#2a2ad0">1:1</text><path d="M7 12l-5 6" stroke="#8a8a2a" stroke-width="3"/></svg>
<div class="sep" style="left:897px;top:138px"></div>
<div class="sep" style="left:1095px;top:138px"></div>
<div class="a" style="left:932px;top:137px;width:126px;height:24px;background:#fff"></div>
<div class="a" style="left:1039px;top:137px;width:19px;height:24px;background:#f4f4f4"></div>
<div class="a" style="left:1045px;top:147px;border-left:4.5px solid transparent;border-right:4.5px solid transparent;border-top:5px solid #222"></div>
<div class="t" style="left:935px;top:141px;font-size:17px;color:#333;transform:scaleX(0.84);transform-origin:0 0;width:122px;overflow:hidden">0:Dashboard Me</div>
<div class="a" style="left:1130px;top:137px;width:61px;height:24px;background:#fff"></div>
<div class="a" style="left:1172px;top:137px;width:19px;height:24px;background:#f4f4f4"></div>
<div class="a" style="left:1178px;top:147px;border-left:4.5px solid transparent;border-right:4.5px solid transparent;border-top:5px solid #222"></div>
<div class="t" style="left:1133px;top:141px;font-size:15.5px;color:#555;max-width:39px;overflow:hidden">50%</div>
<div class="tb" style="left:1280px;top:133px;width:418px"></div>
<div class="grip" style="left:1285px;top:140px"></div>
<div class="chev" style="left:1683px;top:133px"></div>
<div class="a" style="left:1289px;top:135px;width:31px;height:29px;background:#b9d9f7;border:1px solid #3a8ee6"></div>
<div class="t" style="left:1298px;top:140px;font-size:19px;font-weight:bold;color:#111;width:12px;text-align:center">0</div>
<div class="t" style="left:1326px;top:140px;font-size:19px;font-weight:bold;color:#111;width:12px;text-align:center">1</div>
<div class="t" style="left:1356px;top:140px;font-size:19px;font-weight:bold;color:#111;width:12px;text-align:center">2</div>
<div class="t" style="left:1386px;top:140px;font-size:19px;font-weight:bold;color:#111;width:12px;text-align:center">3</div>
<div class="a" style="left:1409px;top:137px;width:127px;height:24px;background:#fff"></div>
<div class="a" style="left:1517px;top:137px;width:19px;height:24px;background:#f4f4f4"></div>
<div class="a" style="left:1523px;top:147px;border-left:4.5px solid transparent;border-right:4.5px solid transparent;border-top:5px solid #222"></div>
<div class="t" style="left:1414px;top:141px;font-size:15px;color:#333;max-width:105px;overflow:hidden">Status 0</div>
<div class="sep" style="left:1542px;top:138px"></div>
<div class="a" style="left:1548px;top:137px;width:126px;height:24px;background:#fff"></div>
<div class="a" style="left:1655px;top:137px;width:19px;height:24px;background:#f4f4f4"></div>
<div class="a" style="left:1661px;top:147px;border-left:4.5px solid transparent;border-right:4.5px solid transparent;border-top:5px solid #222"></div>
<div class="t" style="left:1552px;top:141px;font-size:15px;color:#333;max-width:104px;overflow:hidden">Sprache 1</div>
<div class="tb" style="left:5px;top:167px;width:652px"></div>
<div class="grip" style="left:10px;top:174px"></div>
<div class="chev" style="left:642px;top:167px"></div>
<div class="a" style="left:14px;top:171px;width:125px;height:23px;background:rgba(240,240,240,.85);border:1px solid rgba(255,255,255,.7)"></div>
<div class="a" style="left:126px;top:181px;border-left:4.5px solid transparent;border-right:4.5px solid transparent;border-top:5px solid #555"></div>
<div class="a" style="left:144px;top:171px;width:191px;height:23px;background:rgba(240,240,240,.85);border:1px solid rgba(255,255,255,.7)"></div>
<div class="a" style="left:322px;top:181px;border-left:4.5px solid transparent;border-right:4.5px solid transparent;border-top:5px solid #555"></div>
<div class="a" style="left:340px;top:171px;width:99px;height:23px;background:rgba(240,240,240,.85);border:1px solid rgba(255,255,255,.7)"></div>
<div class="a" style="left:426px;top:181px;border-left:4.5px solid transparent;border-right:4.5px solid transparent;border-top:5px solid #555"></div>
<svg class="a" style="left:445px;top:172px;" width="20" height="20" viewBox="0 0 20 20"><text x="10" y="16" font-size="18" text-anchor="middle" font-style="italic" font-family="Liberation Serif" fill="#888">I</text></svg>
<svg class="a" style="left:475px;top:172px;" width="20" height="20" viewBox="0 0 20 20"><text x="10" y="16.5" font-size="18" text-anchor="middle" font-weight="bold" font-family="Liberation Serif" fill="#888">B</text></svg>
<svg class="a" style="left:506px;top:172px;" width="20" height="20" viewBox="0 0 20 20"><path d="M2 4h16M2 8h11M2 12h16M2 16h11" stroke="#888" stroke-width="1.5"/></svg>
<svg class="a" style="left:535px;top:172px;" width="20" height="20" viewBox="0 0 20 20"><path d="M2 4h16M4 8h12M2 12h16M4 16h12" stroke="#888" stroke-width="1.5"/></svg>
<svg class="a" style="left:565px;top:172px;" width="20" height="20" viewBox="0 0 20 20"><path d="M2 4h16M7 8h11M2 12h16M7 16h11" stroke="#888" stroke-width="1.5"/></svg>
<svg class="a" style="left:595px;top:172px;" width="20" height="20" viewBox="0 0 20 20"><text x="10" y="15" font-size="17" text-anchor="middle" font-family="Liberation Serif" fill="#888">A</text><rect x="2" y="16" width="16" height="3" fill="#888"/></svg>
<div class="a" style="left:623px;top:181px;border-left:4px solid transparent;border-right:4px solid transparent;border-top:4px solid #999"></div>
<div class="tb" style="left:662px;top:167px;width:220px"></div>
<div class="grip" style="left:667px;top:174px"></div>
<div class="chev" style="left:867px;top:167px"></div>
<svg class="a" style="left:685px;top:172px;" width="20" height="20" viewBox="0 0 20 20"><rect x="1.5" y="1.5" width="17" height="17" fill="#f7f0f0" stroke="#c9a3a3"/><text x="11" y="15" font-size="12" text-anchor="middle" font-family="Liberation Serif" fill="#c9a3a3">A</text><path d="M2 10h4M2 10l2-2M2 10l2 2" stroke="#c9a3a3" fill="none"/></svg>
<svg class="a" style="left:714px;top:172px;" width="20" height="20" viewBox="0 0 20 20"><rect x="1.5" y="1.5" width="17" height="17" fill="#f7f0f0" stroke="#c9a3a3"/><text x="9" y="15" font-size="12" text-anchor="middle" font-family="Liberation Serif" fill="#c9a3a3">A</text><path d="M18 10h-4M18 10l-2-2M18 10l-2 2" stroke="#c9a3a3" fill="none"/></svg>
<svg class="a" style="left:745px;top:172px;" width="20" height="20" viewBox="0 0 20 20"><rect x="1.5" y="1.5" width="17" height="17" fill="#f7f0f0" stroke="#c9a3a3"/><text x="10" y="17" font-size="12" text-anchor="middle" font-family="Liberation Serif" fill="#c9a3a3">A</text><path d="M10 2v4M10 2l-2 2M10 2l2 2" stroke="#c9a3a3" fill="none"/></svg>
<svg class="a" style="left:775px;top:172px;" width="20" height="20" viewBox="0 0 20 20"><rect x="1.5" y="1.5" width="17" height="17" fill="#f7f0f0" stroke="#c9a3a3"/><text x="10" y="12" font-size="12" text-anchor="middle" font-family="Liberation Serif" fill="#c9a3a3">A</text><path d="M10 18v-4M10 18l-2-2M10 18l2-2" stroke="#c9a3a3" fill="none"/></svg>
<svg class="a" style="left:805px;top:172px;" width="20" height="20" viewBox="0 0 20 20"><rect x="1.5" y="1.5" width="17" height="17" fill="#f7f0f0" stroke="#c9a3a3"/><text x="10" y="14" font-size="11" text-anchor="middle" font-family="Liberation Serif" fill="#c9a3a3">A</text><path d="M10 2v3M10 18v-3" stroke="#c9a3a3" fill="none"/></svg>
<svg class="a" style="left:836px;top:172px;" width="20" height="20" viewBox="0 0 20 20"><rect x="1.5" y="3.5" width="17" height="13" fill="#f7f0f0" stroke="#c9a3a3"/><text x="10" y="14" font-size="9" text-anchor="middle" font-family="Liberation Serif" fill="#c9a3a3">A</text><path d="M2 10h4M18 10h-4" stroke="#c9a3a3" fill="none"/></svg>
<div class="tb" style="left:887px;top:167px;width:877px"></div>
<div class="grip" style="left:892px;top:174px"></div>
<div class="chev" style="left:1749px;top:167px"></div>
<svg class="a" style="left:900px;top:172px;" width="21" height="21" viewBox="0 0 21 21"><rect width="21" height="21" fill="#fff"/></svg>
<svg class="a" style="left:930px;top:172px;" width="21" height="21" viewBox="0 0 21 21"><rect width="21" height="21" fill="#fff"/><rect x="1.0" y="1.0" width="1.3" height="1.3" fill="#222"/><rect x="9.0" y="1.0" width="1.3" height="1.3" fill="#222"/><rect x="17.0" y="1.0" width="1.3" height="1.3" fill="#222"/><rect x="5.0" y="5.0" width="1.3" height="1.3" fill="#222"/><rect x="13.0" y="5.0" width="1.3" height="1.3" fill="#222"/><rect x="1.0" y="9.0" width="1.3" height="1.3" fill="#222"/><rect x="9.0" y="9.0" width="1.3" height="1.3" fill="#222"/><rect x="17.0" y="9.0" width="1.3" height="1.3" fill="#222"/><rect x="5.0" y="13.0" width="1.3" height="1.3" fill="#222"/><rect x="13.0" y="13.0" width="1.3" height="1.3" fill="#222"/><rect x="1.0" y="17.0" width="1.3" height="1.3" fill="#222"/><rect x="9.0" y="17.0" width="1.3" height="1.3" fill="#222"/><rect x="17.0" y="17.0" width="1.3" height="1.3" fill="#222"/></svg>
<svg class="a" style="left:960px;top:172px;" width="21" height="21" viewBox="0 0 21 21"><rect width="21" height="21" fill="#fff"/><rect x="1.0" y="1.0" width="1.3" height="1.3" fill="#222"/><rect x="7.0" y="1.0" width="1.3" height="1.3" fill="#222"/><rect x="13.0" y="1.0" width="1.3" height="1.3" fill="#222"/><rect x="19.0" y="1.0" width="1.3" height="1.3" fill="#222"/><rect x="4.0" y="4.0" width="1.3" height="1.3" fill="#222"/><rect x="10.0" y="4.0" width="1.3" height="1.3" fill="#222"/><rect x="16.0" y="4.0" width="1.3" height="1.3" fill="#222"/><rect x="1.0" y="7.0" width="1.3" height="1.3" fill="#222"/><rect x="7.0" y="7.0" width="1.3" height="1.3" fill="#222"/><rect x="13.0" y="7.0" width="1.3" height="1.3" fill="#222"/><rect x="19.0" y="7.0" width="1.3" height="1.3" fill="#222"/><rect x="4.0" y="10.0" width="1.3" height="1.3" fill="#222"/><rect x="10.0" y="10.0" width="1.3" height="1.3" fill="#222"/><rect x="16.0" y="10.0" width="1.3" height="1.3" fill="#222"/><rect x="1.0" y="13.0" width="1.3" height="1.3" fill="#222"/><rect x="7.0" y="13.0" width="1.3" height="1.3" fill="#222"/><rect x="13.0" y="13.0" width="1.3" height="1.3" fill="#222"/><rect x="19.0" y="13.0" width="1.3" height="1.3" fill="#222"/><rect x="4.0" y="16.0" width="1.3" height="1.3" fill="#222"/><rect x="10.0" y="16.0" width="1.3" height="1.3" fill="#222"/><rect x="16.0" y="16.0" width="1.3" height="1.3" fill="#222"/><rect x="1.0" y="19.0" width="1.3" height="1.3" fill="#222"/><rect x="7.0" y="19.0" width="1.3" height="1.3" fill="#222"/><rect x="13.0" y="19.0" width="1.3" height="1.3" fill="#222"/><rect x="19.0" y="19.0" width="1.3" height="1.3" fill="#222"/></svg>
<svg class="a" style="left:990px;top:172px;" width="21" height="21" viewBox="0 0 21 21"><rect width="21" height="21" fill="#fff"/><rect x="1.0" y="1.0" width="1.2" height="1.2" fill="#222"/><rect x="5.0" y="1.0" width="1.2" height="1.2" fill="#222"/><rect x="9.0" y="1.0" width="1.2" height="1.2" fill="#222"/><rect x="13.0" y="1.0" width="1.2" height="1.2" fill="#222"/><rect x="17.0" y="1.0" width="1.2" height="1.2" fill="#222"/><rect x="3.0" y="3.0" width="1.2" height="1.2" fill="#222"/><rect x="7.0" y="3.0" width="1.2" height="1.2" fill="#222"/><rect x="11.0" y="3.0" width="1.2" height="1.2" fill="#222"/><rect x="15.0" y="3.0" width="1.2" height="1.2" fill="#222"/><rect x="19.0" y="3.0" width="1.2" height="1.2" fill="#222"/><rect x="1.0" y="5.0" width="1.2" height="1.2" fill="#222"/><rect x="5.0" y="5.0" width="1.2" height="1.2" fill="#222"/><rect x="9.0" y="5.0" width="1.2" height="1.2" fill="#222"/><rect x="13.0" y="5.0" width="1.2" height="1.2" fill="#222"/><rect x="17.0" y="5.0" width="1.2" height="1.2" fill="#222"/><rect x="3.0" y="7.0" width="1.2" height="1.2" fill="#222"/><rect x="7.0" y="7.0" width="1.2" height="1.2" fill="#222"/><rect x="11.0" y="7.0" width="1.2" height="1.2" fill="#222"/><rect x="15.0" y="7.0" width="1.2" height="1.2" fill="#222"/><rect x="19.0" y="7.0" width="1.2" height="1.2" fill="#222"/><rect x="1.0" y="9.0" width="1.2" height="1.2" fill="#222"/><rect x="5.0" y="9.0" width="1.2" height="1.2" fill="#222"/><rect x="9.0" y="9.0" width="1.2" height="1.2" fill="#222"/><rect x="13.0" y="9.0" width="1.2" height="1.2" fill="#222"/><rect x="17.0" y="9.0" width="1.2" height="1.2" fill="#222"/><rect x="3.0" y="11.0" width="1.2" height="1.2" fill="#222"/><rect x="7.0" y="11.0" width="1.2" height="1.2" fill="#222"/><rect x="11.0" y="11.0" width="1.2" height="1.2" fill="#222"/><rect x="15.0" y="11.0" width="1.2" height="1.2" fill="#222"/><rect x="19.0" y="11.0" width="1.2" height="1.2" fill="#222"/><rect x="1.0" y="13.0" width="1.2" height="1.2" fill="#222"/><rect x="5.0" y="13.0" width="1.2" height="1.2" fill="#222"/><rect x="9.0" y="13.0" width="1.2" height="1.2" fill="#222"/><rect x="13.0" y="13.0" width="1.2" height="1.2" fill="#222"/><rect x="17.0" y="13.0" width="1.2" height="1.2" fill="#222"/><rect x="3.0" y="15.0" width="1.2" height="1.2" fill="#222"/><rect x="7.0" y="15.0" width="1.2" height="1.2" fill="#222"/><rect x="11.0" y="15.0" width="1.2" height="1.2" fill="#222"/><rect x="15.0" y="15.0" width="1.2" height="1.2" fill="#222"/><rect x="19.0" y="15.0" width="1.2" height="1.2" fill="#222"/><rect x="1.0" y="17.0" width="1.2" height="1.2" fill="#222"/><rect x="5.0" y="17.0" width="1.2" height="1.2" fill="#222"/><rect x="9.0" y="17.0" width="1.2" height="1.2" fill="#222"/><rect x="13.0" y="17.0" width="1.2" height="1.2" fill="#222"/><rect x="17.0" y="17.0" width="1.2" height="1.2" fill="#222"/><rect x="3.0" y="19.0" width="1.2" height="1.2" fill="#222"/><rect x="7.0" y="19.0" width="1.2" height="1.2" fill="#222"/><rect x="11.0" y="19.0" width="1.2" height="1.2" fill="#222"/><rect x="15.0" y="19.0" width="1.2" height="1.2" fill="#222"/><rect x="19.0" y="19.0" width="1.2" height="1.2" fill="#222"/></svg>
<svg class="a" style="left:1020px;top:172px;" width="21" height="21" viewBox="0 0 21 21"><rect width="21" height="21" fill="#fff"/><rect x="1.0" y="1.0" width="1.0" height="1.0" fill="#333"/><rect x="3.6" y="1.0" width="1.0" height="1.0" fill="#333"/><rect x="6.2" y="1.0" width="1.0" height="1.0" fill="#333"/><rect x="8.8" y="1.0" width="1.0" height="1.0" fill="#333"/><rect x="11.4" y="1.0" width="1.0" height="1.0" fill="#333"/><rect x="14.0" y="1.0" width="1.0" height="1.0" fill="#333"/><rect x="16.6" y="1.0" width="1.0" height="1.0" fill="#333"/><rect x="19.2" y="1.0" width="1.0" height="1.0" fill="#333"/><rect x="2.3" y="2.3" width="1.0" height="1.0" fill="#333"/><rect x="4.9" y="2.3" width="1.0" height="1.0" fill="#333"/><rect x="7.5" y="2.3" width="1.0" height="1.0" fill="#333"/><rect x="10.1" y="2.3" width="1.0" height="1.0" fill="#333"/><rect x="12.7" y="2.3" width="1.0" height="1.0" fill="#333"/><rect x="15.3" y="2.3" width="1.0" height="1.0" fill="#333"/><rect x="17.9" y="2.3" width="1.0" height="1.0" fill="#333"/><rect x="20.5" y="2.3" width="1.0" height="1.0" fill="#333"/><rect x="1.0" y="3.6" width="1.0" height="1.0" fill="#333"/><rect x="3.6" y="3.6" width="1.0" height="1.0" fill="#333"/><rect x="6.2" y="3.6" width="1.0" height="1.0" fill="#333"/><rect x="8.8" y="3.6" width="1.0" height="1.0" fill="#333"/><rect x="11.4" y="3.6" width="1.0" height="1.0" fill="#333"/><rect x="14.0" y="3.6" width="1.0" height="1.0" fill="#333"/><rect x="16.6" y="3.6" width="1.0" height="1.0" fill="#333"/><rect x="19.2" y="3.6" width="1.0" height="1.0" fill="#333"/><rect x="2.3" y="4.9" width="1.0" height="1.0" fill="#333"/><rect x="4.9" y="4.9" width="1.0" height="1.0" fill="#333"/><rect x="7.5" y="4.9" width="1.0" height="1.0" fill="#333"/><rect x="10.1" y="4.9" width="1.0" height="1.0" fill="#333"/><rect x="12.7" y="4.9" width="1.0" height="1.0" fill="#333"/><rect x="15.3" y="4.9" width="1.0" height="1.0" fill="#333"/><rect x="17.9" y="4.9" width="1.0" height="1.0" fill="#333"/><rect x="20.5" y="4.9" width="1.0" height="1.0" fill="#333"/><rect x="1.0" y="6.2" width="1.0" height="1.0" fill="#333"/><rect x="3.6" y="6.2" width="1.0" height="1.0" fill="#333"/><rect x="6.2" y="6.2" width="1.0" height="1.0" fill="#333"/><rect x="8.8" y="6.2" width="1.0" height="1.0" fill="#333"/><rect x="11.4" y="6.2" width="1.0" height="1.0" fill="#333"/><rect x="14.0" y="6.2" width="1.0" height="1.0" fill="#333"/><rect x="16.6" y="6.2" width="1.0" height="1.0" fill="#333"/><rect x="19.2" y="6.2" width="1.0" height="1.0" fill="#333"/><rect x="2.3" y="7.5" width="1.0" height="1.0" fill="#333"/><rect x="4.9" y="7.5" width="1.0" height="1.0" fill="#333"/><rect x="7.5" y="7.5" width="1.0" height="1.0" fill="#333"/><rect x="10.1" y="7.5" width="1.0" height="1.0" fill="#333"/><rect x="12.7" y="7.5" width="1.0" height="1.0" fill="#333"/><rect x="15.3" y="7.5" width="1.0" height="1.0" fill="#333"/><rect x="17.9" y="7.5" width="1.0" height="1.0" fill="#333"/><rect x="20.5" y="7.5" width="1.0" height="1.0" fill="#333"/><rect x="1.0" y="8.8" width="1.0" height="1.0" fill="#333"/><rect x="3.6" y="8.8" width="1.0" height="1.0" fill="#333"/><rect x="6.2" y="8.8" width="1.0" height="1.0" fill="#333"/><rect x="8.8" y="8.8" width="1.0" height="1.0" fill="#333"/><rect x="11.4" y="8.8" width="1.0" height="1.0" fill="#333"/><rect x="14.0" y="8.8" width="1.0" height="1.0" fill="#333"/><rect x="16.6" y="8.8" width="1.0" height="1.0" fill="#333"/><rect x="19.2" y="8.8" width="1.0" height="1.0" fill="#333"/><rect x="2.3" y="10.1" width="1.0" height="1.0" fill="#333"/><rect x="4.9" y="10.1" width="1.0" height="1.0" fill="#333"/><rect x="7.5" y="10.1" width="1.0" height="1.0" fill="#333"/><rect x="10.1" y="10.1" width="1.0" height="1.0" fill="#333"/><rect x="12.7" y="10.1" width="1.0" height="1.0" fill="#333"/><rect x="15.3" y="10.1" width="1.0" height="1.0" fill="#333"/><rect x="17.9" y="10.1" width="1.0" height="1.0" fill="#333"/><rect x="20.5" y="10.1" width="1.0" height="1.0" fill="#333"/><rect x="1.0" y="11.4" width="1.0" height="1.0" fill="#333"/><rect x="3.6" y="11.4" width="1.0" height="1.0" fill="#333"/><rect x="6.2" y="11.4" width="1.0" height="1.0" fill="#333"/><rect x="8.8" y="11.4" width="1.0" height="1.0" fill="#333"/><rect x="11.4" y="11.4" width="1.0" height="1.0" fill="#333"/><rect x="14.0" y="11.4" width="1.0" height="1.0" fill="#333"/><rect x="16.6" y="11.4" width="1.0" height="1.0" fill="#333"/><rect x="19.2" y="11.4" width="1.0" height="1.0" fill="#333"/><rect x="2.3" y="12.7" width="1.0" height="1.0" fill="#333"/><rect x="4.9" y="12.7" width="1.0" height="1.0" fill="#333"/><rect x="7.5" y="12.7" width="1.0" height="1.0" fill="#333"/><rect x="10.1" y="12.7" width="1.0" height="1.0" fill="#333"/><rect x="12.7" y="12.7" width="1.0" height="1.0" fill="#333"/><rect x="15.3" y="12.7" width="1.0" height="1.0" fill="#333"/><rect x="17.9" y="12.7" width="1.0" height="1.0" fill="#333"/><rect x="20.5" y="12.7" width="1.0" height="1.0" fill="#333"/><rect x="1.0" y="14.0" width="1.0" height="1.0" fill="#333"/><rect x="3.6" y="14.0" width="1.0" height="1.0" fill="#333"/><rect x="6.2" y="14.0" width="1.0" height="1.0" fill="#333"/><rect x="8.8" y="14.0" width="1.0" height="1.0" fill="#333"/><rect x="11.4" y="14.0" width="1.0" height="1.0" fill="#333"/><rect x="14.0" y="14.0" width="1.0" height="1.0" fill="#333"/><rect x="16.6" y="14.0" width="1.0" height="1.0" fill="#333"/><rect x="19.2" y="14.0" width="1.0" height="1.0" fill="#333"/><rect x="2.3" y="15.3" width="1.0" height="1.0" fill="#333"/><rect x="4.9" y="15.3" width="1.0" height="1.0" fill="#333"/><rect x="7.5" y="15.3" width="1.0" height="1.0" fill="#333"/><rect x="10.1" y="15.3" width="1.0" height="1.0" fill="#333"/><rect x="12.7" y="15.3" width="1.0" height="1.0" fill="#333"/><rect x="15.3" y="15.3" width="1.0" height="1.0" fill="#333"/><rect x="17.9" y="15.3" width="1.0" height="1.0" fill="#333"/><rect x="20.5" y="15.3" width="1.0" height="1.0" fill="#333"/><rect x="1.0" y="16.6" width="1.0" height="1.0" fill="#333"/><rect x="3.6" y="16.6" width="1.0" height="1.0" fill="#333"/><rect x="6.2" y="16.6" width="1.0" height="1.0" fill="#333"/><rect x="8.8" y="16.6" width="1.0" height="1.0" fill="#333"/><rect x="11.4" y="16.6" width="1.0" height="1.0" fill="#333"/><rect x="14.0" y="16.6" width="1.0" height="1.0" fill="#333"/><rect x="16.6" y="16.6" width="1.0" height="1.0" fill="#333"/><rect x="19.2" y="16.6" width="1.0" height="1.0" fill="#333"/><rect x="2.3" y="17.9" width="1.0" height="1.0" fill="#333"/><rect x="4.9" y="17.9" width="1.0" height="1.0" fill="#333"/><rect x="7.5" y="17.9" width="1.0" height="1.0" fill="#333"/><rect x="10.1" y="17.9" width="1.0" height="1.0" fill="#333"/><rect x="12.7" y="17.9" width="1.0" height="1.0" fill="#333"/><rect x="15.3" y="17.9" width="1.0" height="1.0" fill="#333"/><rect x="17.9" y="17.9" width="1.0" height="1.0" fill="#333"/><rect x="20.5" y="17.9" width="1.0" height="1.0" fill="#333"/><rect x="1.0" y="19.2" width="1.0" height="1.0" fill="#333"/><rect x="3.6" y="19.2" width="1.0" height="1.0" fill="#333"/><rect x="6.2" y="19.2" width="1.0" height="1.0" fill="#333"/><rect x="8.8" y="19.2" width="1.0" height="1.0" fill="#333"/><rect x="11.4" y="19.2" width="1.0" height="1.0" fill="#333"/><rect x="14.0" y="19.2" width="1.0" height="1.0" fill="#333"/><rect x="16.6" y="19.2" width="1.0" height="1.0" fill="#333"/><rect x="19.2" y="19.2" width="1.0" height="1.0" fill="#333"/><rect x="2.3" y="20.5" width="1.0" height="1.0" fill="#333"/><rect x="4.9" y="20.5" width="1.0" height="1.0" fill="#333"/><rect x="7.5" y="20.5" width="1.0" height="1.0" fill="#333"/><rect x="10.1" y="20.5" width="1.0" height="1.0" fill="#333"/><rect x="12.7" y="20.5" width="1.0" height="1.0" fill="#333"/><rect x="15.3" y="20.5" width="1.0" height="1.0" fill="#333"/><rect x="17.9" y="20.5" width="1.0" height="1.0" fill="#333"/><rect x="20.5" y="20.5" width="1.0" height="1.0" fill="#333"/></svg>
<svg class="a" style="left:1050px;top:172px;" width="21" height="21" viewBox="0 0 21 21"><rect width="21" height="21" fill="#fff"/><g transform="rotate(45 10.5 10.5)"><rect x="-10" y="-10" width="41" height="1" fill="#333"/><rect x="-10" y="-7" width="41" height="1" fill="#333"/><rect x="-10" y="-4" width="41" height="1" fill="#333"/><rect x="-10" y="-1" width="41" height="1" fill="#333"/><rect x="-10" y="2" width="41" height="1" fill="#333"/><rect x="-10" y="5" width="41" height="1" fill="#333"/><rect x="-10" y="8" width="41" height="1" fill="#333"/><rect x="-10" y="11" width="41" height="1" fill="#333"/><rect x="-10" y="14" width="41" height="1" fill="#333"/><rect x="-10" y="17" width="41" height="1" fill="#333"/><rect x="-10" y="20" width="41" height="1" fill="#333"/><rect x="-10" y="23" width="41" height="1" fill="#333"/><rect x="-10" y="26" width="41" height="1" fill="#333"/><rect x="-10" y="29" width="41" height="1" fill="#333"/></g><g opacity="1"><g transform="rotate(-45 10.5 10.5)"><rect x="-10" y="-10" width="41" height="1" fill="#333"/><rect x="-10" y="-7" width="41" height="1" fill="#333"/><rect x="-10" y="-4" width="41" height="1" fill="#333"/><rect x="-10" y="-1" width="41" height="1" fill="#333"/><rect x="-10" y="2" width="41" height="1" fill="#333"/><rect x="-10" y="5" width="41" height="1" fill="#333"/><rect x="-10" y="8" width="41" height="1" fill="#333"/><rect x="-10" y="11" width="41" height="1" fill="#333"/><rect x="-10" y="14" width="41" height="1" fill="#333"/><rect x="-10" y="17" width="41" height="1" fill="#333"/><rect x="-10" y="20" width="41" height="1" fill="#333"/><rect x="-10" y="23" width="41" height="1" fill="#333"/><rect x="-10" y="26" width="41" height="1" fill="#333"/><rect x="-10" y="29" width="41" height="1" fill="#333"/></g></g></svg>
<svg class="a" style="left:1080px;top:172px;" width="21" height="21" viewBox="0 0 21 21"><rect width="21" height="21" fill="#666"/><rect x="1.0" y="1.0" width="1.5" height="1.5" fill="#fff"/><rect x="5.0" y="1.0" width="1.5" height="1.5" fill="#fff"/><rect x="9.0" y="1.0" width="1.5" height="1.5" fill="#fff"/><rect x="13.0" y="1.0" width="1.5" height="1.5" fill="#fff"/><rect x="17.0" y="1.0" width="1.5" height="1.5" fill="#fff"/><rect x="3.0" y="3.0" width="1.5" height="1.5" fill="#fff"/><rect x="7.0" y="3.0" width="1.5" height="1.5" fill="#fff"/><rect x="11.0" y="3.0" width="1.5" height="1.5" fill="#fff"/><rect x="15.0" y="3.0" width="1.5" height="1.5" fill="#fff"/><rect x="19.0" y="3.0" width="1.5" height="1.5" fill="#fff"/><rect x="1.0" y="5.0" width="1.5" height="1.5" fill="#fff"/><rect x="5.0" y="5.0" width="1.5" height="1.5" fill="#fff"/><rect x="9.0" y="5.0" width="1.5" height="1.5" fill="#fff"/><rect x="13.0" y="5.0" width="1.5" height="1.5" fill="#fff"/><rect x="17.0" y="5.0" width="1.5" height="1.5" fill="#fff"/><rect x="3.0" y="7.0" width="1.5" height="1.5" fill="#fff"/><rect x="7.0" y="7.0" width="1.5" height="1.5" fill="#fff"/><rect x="11.0" y="7.0" width="1.5" height="1.5" fill="#fff"/><rect x="15.0" y="7.0" width="1.5" height="1.5" fill="#fff"/><rect x="19.0" y="7.0" width="1.5" height="1.5" fill="#fff"/><rect x="1.0" y="9.0" width="1.5" height="1.5" fill="#fff"/><rect x="5.0" y="9.0" width="1.5" height="1.5" fill="#fff"/><rect x="9.0" y="9.0" width="1.5" height="1.5" fill="#fff"/><rect x="13.0" y="9.0" width="1.5" height="1.5" fill="#fff"/><rect x="17.0" y="9.0" width="1.5" height="1.5" fill="#fff"/><rect x="3.0" y="11.0" width="1.5" height="1.5" fill="#fff"/><rect x="7.0" y="11.0" width="1.5" height="1.5" fill="#fff"/><rect x="11.0" y="11.0" width="1.5" height="1.5" fill="#fff"/><rect x="15.0" y="11.0" width="1.5" height="1.5" fill="#fff"/><rect x="19.0" y="11.0" width="1.5" height="1.5" fill="#fff"/><rect x="1.0" y="13.0" width="1.5" height="1.5" fill="#fff"/><rect x="5.0" y="13.0" width="1.5" height="1.5" fill="#fff"/><rect x="9.0" y="13.0" width="1.5" height="1.5" fill="#fff"/><rect x="13.0" y="13.0" width="1.5" height="1.5" fill="#fff"/><rect x="17.0" y="13.0" width="1.5" height="1.5" fill="#fff"/><rect x="3.0" y="15.0" width="1.5" height="1.5" fill="#fff"/><rect x="7.0" y="15.0" width="1.5" height="1.5" fill="#fff"/><rect x="11.0" y="15.0" width="1.5" height="1.5" fill="#fff"/><rect x="15.0" y="15.0" width="1.5" height="1.5" fill="#fff"/><rect x="19.0" y="15.0" width="1.5" height="1.5" fill="#fff"/><rect x="1.0" y="17.0" width="1.5" height="1.5" fill="#fff"/><rect x="5.0" y="17.0" width="1.5" height="1.5" fill="#fff"/><rect x="9.0" y="17.0" width="1.5" height="1.5" fill="#fff"/><rect x="13.0" y="17.0" width="1.5" height="1.5" fill="#fff"/><rect x="17.0" y="17.0" width="1.5" height="1.5" fill="#fff"/><rect x="3.0" y="19.0" width="1.5" height="1.5" fill="#fff"/><rect x="7.0" y="19.0" width="1.5" height="1.5" fill="#fff"/><rect x="11.0" y="19.0" width="1.5" height="1.5" fill="#fff"/><rect x="15.0" y="19.0" width="1.5" height="1.5" fill="#fff"/><rect x="19.0" y="19.0" width="1.5" height="1.5" fill="#fff"/></svg>
<svg class="a" style="left:1110px;top:172px;" width="21" height="21" viewBox="0 0 21 21"><rect width="21" height="21" fill="#bbb"/><rect x="1.0" y="1.0" width="1.2" height="1.2" fill="#555"/><rect x="3.4" y="1.0" width="1.2" height="1.2" fill="#555"/><rect x="5.8" y="1.0" width="1.2" height="1.2" fill="#555"/><rect x="8.2" y="1.0" width="1.2" height="1.2" fill="#555"/><rect x="10.6" y="1.0" width="1.2" height="1.2" fill="#555"/><rect x="13.0" y="1.0" width="1.2" height="1.2" fill="#555"/><rect x="15.4" y="1.0" width="1.2" height="1.2" fill="#555"/><rect x="17.8" y="1.0" width="1.2" height="1.2" fill="#555"/><rect x="20.2" y="1.0" width="1.2" height="1.2" fill="#555"/><rect x="2.2" y="2.2" width="1.2" height="1.2" fill="#555"/><rect x="4.6" y="2.2" width="1.2" height="1.2" fill="#555"/><rect x="7.0" y="2.2" width="1.2" height="1.2" fill="#555"/><rect x="9.4" y="2.2" width="1.2" height="1.2" fill="#555"/><rect x="11.8" y="2.2" width="1.2" height="1.2" fill="#555"/><rect x="14.2" y="2.2" width="1.2" height="1.2" fill="#555"/><rect x="16.6" y="2.2" width="1.2" height="1.2" fill="#555"/><rect x="19.0" y="2.2" width="1.2" height="1.2" fill="#555"/><rect x="1.0" y="3.4" width="1.2" height="1.2" fill="#555"/><rect x="3.4" y="3.4" width="1.2" height="1.2" fill="#555"/><rect x="5.8" y="3.4" width="1.2" height="1.2" fill="#555"/><rect x="8.2" y="3.4" width="1.2" height="1.2" fill="#555"/><rect x="10.6" y="3.4" width="1.2" height="1.2" fill="#555"/><rect x="13.0" y="3.4" width="1.2" height="1.2" fill="#555"/><rect x="15.4" y="3.4" width="1.2" height="1.2" fill="#555"/><rect x="17.8" y="3.4" width="1.2" height="1.2" fill="#555"/><rect x="20.2" y="3.4" width="1.2" height="1.2" fill="#555"/><rect x="2.2" y="4.6" width="1.2" height="1.2" fill="#555"/><rect x="4.6" y="4.6" width="1.2" height="1.2" fill="#555"/><rect x="7.0" y="4.6" width="1.2" height="1.2" fill="#555"/><rect x="9.4" y="4.6" width="1.2" height="1.2" fill="#555"/><rect x="11.8" y="4.6" width="1.2" height="1.2" fill="#555"/><rect x="14.2" y="4.6" width="1.2" height="1.2" fill="#555"/><rect x="16.6" y="4.6" width="1.2" height="1.2" fill="#555"/><rect x="19.0" y="4.6" width="1.2" height="1.2" fill="#555"/><rect x="1.0" y="5.8" width="1.2" height="1.2" fill="#555"/><rect x="3.4" y="5.8" width="1.2" height="1.2" fill="#555"/><rect x="5.8" y="5.8" width="1.2" height="1.2" fill="#555"/><rect x="8.2" y="5.8" width="1.2" height="1.2" fill="#555"/><rect x="10.6" y="5.8" width="1.2" height="1.2" fill="#555"/><rect x="13.0" y="5.8" width="1.2" height="1.2" fill="#555"/><rect x="15.4" y="5.8" width="1.2" height="1.2" fill="#555"/><rect x="17.8" y="5.8" width="1.2" height="1.2" fill="#555"/><rect x="20.2" y="5.8" width="1.2" height="1.2" fill="#555"/><rect x="2.2" y="7.0" width="1.2" height="1.2" fill="#555"/><rect x="4.6" y="7.0" width="1.2" height="1.2" fill="#555"/><rect x="7.0" y="7.0" width="1.2" height="1.2" fill="#555"/><rect x="9.4" y="7.0" width="1.2" height="1.2" fill="#555"/><rect x="11.8" y="7.0" width="1.2" height="1.2" fill="#555"/><rect x="14.2" y="7.0" width="1.2" height="1.2" fill="#555"/><rect x="16.6" y="7.0" width="1.2" height="1.2" fill="#555"/><rect x="19.0" y="7.0" width="1.2" height="1.2" fill="#555"/><rect x="1.0" y="8.2" width="1.2" height="1.2" fill="#555"/><rect x="3.4" y="8.2" width="1.2" height="1.2" fill="#555"/><rect x="5.8" y="8.2" width="1.2" height="1.2" fill="#555"/><rect x="8.2" y="8.2" width="1.2" height="1.2" fill="#555"/><rect x="10.6" y="8.2" width="1.2" height="1.2" fill="#555"/><rect x="13.0" y="8.2" width="1.2" height="1.2" fill="#555"/><rect x="15.4" y="8.2" width="1.2" height="1.2" fill="#555"/><rect x="17.8" y="8.2" width="1.2" height="1.2" fill="#555"/><rect x="20.2" y="8.2" width="1.2" height="1.2" fill="#555"/><rect x="2.2" y="9.4" width="1.2" height="1.2" fill="#555"/><rect x="4.6" y="9.4" width="1.2" height="1.2" fill="#555"/><rect x="7.0" y="9.4" width="1.2" height="1.2" fill="#555"/><rect x="9.4" y="9.4" width="1.2" height="1.2" fill="#555"/><rect x="11.8" y="9.4" width="1.2" height="1.2" fill="#555"/><rect x="14.2" y="9.4" width="1.2" height="1.2" fill="#555"/><rect x="16.6" y="9.4" width="1.2" height="1.2" fill="#555"/><rect x="19.0" y="9.4" width="1.2" height="1.2" fill="#555"/><rect x="1.0" y="10.6" width="1.2" height="1.2" fill="#555"/><rect x="3.4" y="10.6" width="1.2" height="1.2" fill="#555"/><rect x="5.8" y="10.6" width="1.2" height="1.2" fill="#555"/><rect x="8.2" y="10.6" width="1.2" height="1.2" fill="#555"/><rect x="10.6" y="10.6" width="1.2" height="1.2" fill="#555"/><rect x="13.0" y="10.6" width="1.2" height="1.2" fill="#555"/><rect x="15.4" y="10.6" width="1.2" height="1.2" fill="#555"/><rect x="17.8" y="10.6" width="1.2" height="1.2" fill="#555"/><rect x="20.2" y="10.6" width="1.2" height="1.2" fill="#555"/><rect x="2.2" y="11.8" width="1.2" height="1.2" fill="#555"/><rect x="4.6" y="11.8" width="1.2" height="1.2" fill="#555"/><rect x="7.0" y="11.8" width="1.2" height="1.2" fill="#555"/><rect x="9.4" y="11.8" width="1.2" height="1.2" fill="#555"/><rect x="11.8" y="11.8" width="1.2" height="1.2" fill="#555"/><rect x="14.2" y="11.8" width="1.2" height="1.2" fill="#555"/><rect x="16.6" y="11.8" width="1.2" height="1.2" fill="#555"/><rect x="19.0" y="11.8" width="1.2" height="1.2" fill="#555"/><rect x="1.0" y="13.0" width="1.2" height="1.2" fill="#555"/><rect x="3.4" y="13.0" width="1.2" height="1.2" fill="#555"/><rect x="5.8" y="13.0" width="1.2" height="1.2" fill="#555"/><rect x="8.2" y="13.0" width="1.2" height="1.2" fill="#555"/><rect x="10.6" y="13.0" width="1.2" height="1.2" fill="#555"/><rect x="13.0" y="13.0" width="1.2" height="1.2" fill="#555"/><rect x="15.4" y="13.0" width="1.2" height="1.2" fill="#555"/><rect x="17.8" y="13.0" width="1.2" height="1.2" fill="#555"/><rect x="20.2" y="13.0" width="1.2" height="1.2" fill="#555"/><rect x="2.2" y="14.2" width="1.2" height="1.2" fill="#555"/><rect x="4.6" y="14.2" width="1.2" height="1.2" fill="#555"/><rect x="7.0" y="14.2" width="1.2" height="1.2" fill="#555"/><rect x="9.4" y="14.2" width="1.2" height="1.2" fill="#555"/><rect x="11.8" y="14.2" width="1.2" height="1.2" fill="#555"/><rect x="14.2" y="14.2" width="1.2" height="1.2" fill="#555"/><rect x="16.6" y="14.2" width="1.2" height="1.2" fill="#555"/><rect x="19.0" y="14.2" width="1.2" height="1.2" fill="#555"/><rect x="1.0" y="15.4" width="1.2" height="1.2" fill="#555"/><rect x="3.4" y="15.4" width="1.2" height="1.2" fill="#555"/><rect x="5.8" y="15.4" width="1.2" height="1.2" fill="#555"/><rect x="8.2" y="15.4" width="1.2" height="1.2" fill="#555"/><rect x="10.6" y="15.4" width="1.2" height="1.2" fill="#555"/><rect x="13.0" y="15.4" width="1.2" height="1.2" fill="#555"/><rect x="15.4" y="15.4" width="1.2" height="1.2" fill="#555"/><rect x="17.8" y="15.4" width="1.2" height="1.2" fill="#555"/><rect x="20.2" y="15.4" width="1.2" height="1.2" fill="#555"/><rect x="2.2" y="16.6" width="1.2" height="1.2" fill="#555"/><rect x="4.6" y="16.6" width="1.2" height="1.2" fill="#555"/><rect x="7.0" y="16.6" width="1.2" height="1.2" fill="#555"/><rect x="9.4" y="16.6" width="1.2" height="1.2" fill="#555"/><rect x="11.8" y="16.6" width="1.2" height="1.2" fill="#555"/><rect x="14.2" y="16.6" width="1.2" height="1.2" fill="#555"/><rect x="16.6" y="16.6" width="1.2" height="1.2" fill="#555"/><rect x="19.0" y="16.6" width="1.2" height="1.2" fill="#555"/><rect x="1.0" y="17.8" width="1.2" height="1.2" fill="#555"/><rect x="3.4" y="17.8" width="1.2" height="1.2" fill="#555"/><rect x="5.8" y="17.8" width="1.2" height="1.2" fill="#555"/><rect x="8.2" y="17.8" width="1.2" height="1.2" fill="#555"/><rect x="10.6" y="17.8" width="1.2" height="1.2" fill="#555"/><rect x="13.0" y="17.8" width="1.2" height="1.2" fill="#555"/><rect x="15.4" y="17.8" width="1.2" height="1.2" fill="#555"/><rect x="17.8" y="17.8" width="1.2" height="1.2" fill="#555"/><rect x="20.2" y="17.8" width="1.2" height="1.2" fill="#555"/><rect x="2.2" y="19.0" width="1.2" height="1.2" fill="#555"/><rect x="4.6" y="19.0" width="1.2" height="1.2" fill="#555"/><rect x="7.0" y="19.0" width="1.2" height="1.2" fill="#555"/><rect x="9.4" y="19.0" width="1.2" height="1.2" fill="#555"/><rect x="11.8" y="19.0" width="1.2" height="1.2" fill="#555"/><rect x="14.2" y="19.0" width="1.2" height="1.2" fill="#555"/><rect x="16.6" y="19.0" width="1.2" height="1.2" fill="#555"/><rect x="19.0" y="19.0" width="1.2" height="1.2" fill="#555"/><rect x="1.0" y="20.2" width="1.2" height="1.2" fill="#555"/><rect x="3.4" y="20.2" width="1.2" height="1.2" fill="#555"/><rect x="5.8" y="20.2" width="1.2" height="1.2" fill="#555"/><rect x="8.2" y="20.2" width="1.2" height="1.2" fill="#555"/><rect x="10.6" y="20.2" width="1.2" height="1.2" fill="#555"/><rect x="13.0" y="20.2" width="1.2" height="1.2" fill="#555"/><rect x="15.4" y="20.2" width="1.2" height="1.2" fill="#555"/><rect x="17.8" y="20.2" width="1.2" height="1.2" fill="#555"/><rect x="20.2" y="20.2" width="1.2" height="1.2" fill="#555"/></svg>
<svg class="a" style="left:1140px;top:172px;" width="21" height="21" viewBox="0 0 21 21"><rect width="21" height="21" fill="#ddd"/><g transform="rotate(45 10.5 10.5)"><rect x="-10" y="-10" width="41" height="1.5" fill="#111"/><rect x="-10" y="-7" width="41" height="1.5" fill="#111"/><rect x="-10" y="-4" width="41" height="1.5" fill="#111"/><rect x="-10" y="-1" width="41" height="1.5" fill="#111"/><rect x="-10" y="2" width="41" height="1.5" fill="#111"/><rect x="-10" y="5" width="41" height="1.5" fill="#111"/><rect x="-10" y="8" width="41" height="1.5" fill="#111"/><rect x="-10" y="11" width="41" height="1.5" fill="#111"/><rect x="-10" y="14" width="41" height="1.5" fill="#111"/><rect x="-10" y="17" width="41" height="1.5" fill="#111"/><rect x="-10" y="20" width="41" height="1.5" fill="#111"/><rect x="-10" y="23" width="41" height="1.5" fill="#111"/><rect x="-10" y="26" width="41" height="1.5" fill="#111"/><rect x="-10" y="29" width="41" height="1.5" fill="#111"/></g><g transform="rotate(-45 10.5 10.5)"><rect x="-10" y="-10" width="41" height="1.5" fill="#111"/><rect x="-10" y="-7" width="41" height="1.5" fill="#111"/><rect x="-10" y="-4" width="41" height="1.5" fill="#111"/><rect x="-10" y="-1" width="41" height="1.5" fill="#111"/><rect x="-10" y="2" width="41" height="1.5" fill="#111"/><rect x="-10" y="5" width="41" height="1.5" fill="#111"/><rect x="-10" y="8" width="41" height="1.5" fill="#111"/><rect x="-10" y="11" width="41" height="1.5" fill="#111"/><rect x="-10" y="14" width="41" height="1.5" fill="#111"/><rect x="-10" y="17" width="41" height="1.5" fill="#111"/><rect x="-10" y="20" width="41" height="1.5" fill="#111"/><rect x="-10" y="23" width="41" height="1.5" fill="#111"/><rect x="-10" y="26" width="41" height="1.5" fill="#111"/><rect x="-10" y="29" width="41" height="1.5" fill="#111"/></g></svg>
<svg class="a" style="left:1170px;top:172px;" width="21" height="21" viewBox="0 0 21 21"><rect width="21" height="21" fill="#222"/><rect x="1.0" y="1.0" width="1.0" height="1.0" fill="#ccc"/><rect x="3.6" y="1.0" width="1.0" height="1.0" fill="#ccc"/><rect x="6.2" y="1.0" width="1.0" height="1.0" fill="#ccc"/><rect x="8.8" y="1.0" width="1.0" height="1.0" fill="#ccc"/><rect x="11.4" y="1.0" width="1.0" height="1.0" fill="#ccc"/><rect x="14.0" y="1.0" width="1.0" height="1.0" fill="#ccc"/><rect x="16.6" y="1.0" width="1.0" height="1.0" fill="#ccc"/><rect x="19.2" y="1.0" width="1.0" height="1.0" fill="#ccc"/><rect x="2.3" y="2.3" width="1.0" height="1.0" fill="#ccc"/><rect x="4.9" y="2.3" width="1.0" height="1.0" fill="#ccc"/><rect x="7.5" y="2.3" width="1.0" height="1.0" fill="#ccc"/><rect x="10.1" y="2.3" width="1.0" height="1.0" fill="#ccc"/><rect x="12.7" y="2.3" width="1.0" height="1.0" fill="#ccc"/><rect x="15.3" y="2.3" width="1.0" height="1.0" fill="#ccc"/><rect x="17.9" y="2.3" width="1.0" height="1.0" fill="#ccc"/><rect x="20.5" y="2.3" width="1.0" height="1.0" fill="#ccc"/><rect x="1.0" y="3.6" width="1.0" height="1.0" fill="#ccc"/><rect x="3.6" y="3.6" width="1.0" height="1.0" fill="#ccc"/><rect x="6.2" y="3.6" width="1.0" height="1.0" fill="#ccc"/><rect x="8.8" y="3.6" width="1.0" height="1.0" fill="#ccc"/><rect x="11.4" y="3.6" width="1.0" height="1.0" fill="#ccc"/><rect x="14.0" y="3.6" width="1.0" height="1.0" fill="#ccc"/><rect x="16.6" y="3.6" width="1.0" height="1.0" fill="#ccc"/><rect x="19.2" y="3.6" width="1.0" height="1.0" fill="#ccc"/><rect x="2.3" y="4.9" width="1.0" height="1.0" fill="#ccc"/><rect x="4.9" y="4.9" width="1.0" height="1.0" fill="#ccc"/><rect x="7.5" y="4.9" width="1.0" height="1.0" fill="#ccc"/><rect x="10.1" y="4.9" width="1.0" height="1.0" fill="#ccc"/><rect x="12.7" y="4.9" width="1.0" height="1.0" fill="#ccc"/><rect x="15.3" y="4.9" width="1.0" height="1.0" fill="#ccc"/><rect x="17.9" y="4.9" width="1.0" height="1.0" fill="#ccc"/><rect x="20.5" y="4.9" width="1.0" height="1.0" fill="#ccc"/><rect x="1.0" y="6.2" width="1.0" height="1.0" fill="#ccc"/><rect x="3.6" y="6.2" width="1.0" height="1.0" fill="#ccc"/><rect x="6.2" y="6.2" width="1.0" height="1.0" fill="#ccc"/><rect x="8.8" y="6.2" width="1.0" height="1.0" fill="#ccc"/><rect x="11.4" y="6.2" width="1.0" height="1.0" fill="#ccc"/><rect x="14.0" y="6.2" width="1.0" height="1.0" fill="#ccc"/><rect x="16.6" y="6.2" width="1.0" height="1.0" fill="#ccc"/><rect x="19.2" y="6.2" width="1.0" height="1.0" fill="#ccc"/><rect x="2.3" y="7.5" width="1.0" height="1.0" fill="#ccc"/><rect x="4.9" y="7.5" width="1.0" height="1.0" fill="#ccc"/><rect x="7.5" y="7.5" width="1.0" height="1.0" fill="#ccc"/><rect x="10.1" y="7.5" width="1.0" height="1.0" fill="#ccc"/><rect x="12.7" y="7.5" width="1.0" height="1.0" fill="#ccc"/><rect x="15.3" y="7.5" width="1.0" height="1.0" fill="#ccc"/><rect x="17.9" y="7.5" width="1.0" height="1.0" fill="#ccc"/><rect x="20.5" y="7.5" width="1.0" height="1.0" fill="#ccc"/><rect x="1.0" y="8.8" width="1.0" height="1.0" fill="#ccc"/><rect x="3.6" y="8.8" width="1.0" height="1.0" fill="#ccc"/><rect x="6.2" y="8.8" width="1.0" height="1.0" fill="#ccc"/><rect x="8.8" y="8.8" width="1.0" height="1.0" fill="#ccc"/><rect x="11.4" y="8.8" width="1.0" height="1.0" fill="#ccc"/><rect x="14.0" y="8.8" width="1.0" height="1.0" fill="#ccc"/><rect x="16.6" y="8.8" width="1.0" height="1.0" fill="#ccc"/><rect x="19.2" y="8.8" width="1.0" height="1.0" fill="#ccc"/><rect x="2.3" y="10.1" width="1.0" height="1.0" fill="#ccc"/><rect x="4.9" y="10.1" width="1.0" height="1.0" fill="#ccc"/><rect x="7.5" y="10.1" width="1.0" height="1.0" fill="#ccc"/><rect x="10.1" y="10.1" width="1.0" height="1.0" fill="#ccc"/><rect x="12.7" y="10.1" width="1.0" height="1.0" fill="#ccc"/><rect x="15.3" y="10.1" width="1.0" height="1.0" fill="#ccc"/><rect x="17.9" y="10.1" width="1.0" height="1.0" fill="#ccc"/><rect x="20.5" y="10.1" width="1.0" height="1.0" fill="#ccc"/><rect x="1.0" y="11.4" width="1.0" height="1.0" fill="#ccc"/><rect x="3.6" y="11.4" width="1.0" height="1.0" fill="#ccc"/><rect x="6.2" y="11.4" width="1.0" height="1.0" fill="#ccc"/><rect x="8.8" y="11.4" width="1.0" height="1.0" fill="#ccc"/><rect x="11.4" y="11.4" width="1.0" height="1.0" fill="#ccc"/><rect x="14.0" y="11.4" width="1.0" height="1.0" fill="#ccc"/><rect x="16.6" y="11.4" width="1.0" height="1.0" fill="#ccc"/><rect x="19.2" y="11.4" width="1.0" height="1.0" fill="#ccc"/><rect x="2.3" y="12.7" width="1.0" height="1.0" fill="#ccc"/><rect x="4.9" y="12.7" width="1.0" height="1.0" fill="#ccc"/><rect x="7.5" y="12.7" width="1.0" height="1.0" fill="#ccc"/><rect x="10.1" y="12.7" width="1.0" height="1.0" fill="#ccc"/><rect x="12.7" y="12.7" width="1.0" height="1.0" fill="#ccc"/><rect x="15.3" y="12.7" width="1.0" height="1.0" fill="#ccc"/><rect x="17.9" y="12.7" width="1.0" height="1.0" fill="#ccc"/><rect x="20.5" y="12.7" width="1.0" height="1.0" fill="#ccc"/><rect x="1.0" y="14.0" width="1.0" height="1.0" fill="#ccc"/><rect x="3.6" y="14.0" width="1.0" height="1.0" fill="#ccc"/><rect x="6.2" y="14.0" width="1.0" height="1.0" fill="#ccc"/><rect x="8.8" y="14.0" width="1.0" height="1.0" fill="#ccc"/><rect x="11.4" y="14.0" width="1.0" height="1.0" fill="#ccc"/><rect x="14.0" y="14.0" width="1.0" height="1.0" fill="#ccc"/><rect x="16.6" y="14.0" width="1.0" height="1.0" fill="#ccc"/><rect x="19.2" y="14.0" width="1.0" height="1.0" fill="#ccc"/><rect x="2.3" y="15.3" width="1.0" height="1.0" fill="#ccc"/><rect x="4.9" y="15.3" width="1.0" height="1.0" fill="#ccc"/><rect x="7.5" y="15.3" width="1.0" height="1.0" fill="#ccc"/><rect x="10.1" y="15.3" width="1.0" height="1.0" fill="#ccc"/><rect x="12.7" y="15.3" width="1.0" height="1.0" fill="#ccc"/><rect x="15.3" y="15.3" width="1.0" height="1.0" fill="#ccc"/><rect x="17.9" y="15.3" width="1.0" height="1.0" fill="#ccc"/><rect x="20.5" y="15.3" width="1.0" height="1.0" fill="#ccc"/><rect x="1.0" y="16.6" width="1.0" height="1.0" fill="#ccc"/><rect x="3.6" y="16.6" width="1.0" height="1.0" fill="#ccc"/><rect x="6.2" y="16.6" width="1.0" height="1.0" fill="#ccc"/><rect x="8.8" y="16.6" width="1.0" height="1.0" fill="#ccc"/><rect x="11.4" y="16.6" width="1.0" height="1.0" fill="#ccc"/><rect x="14.0" y="16.6" width="1.0" height="1.0" fill="#ccc"/><rect x="16.6" y="16.6" width="1.0" height="1.0" fill="#ccc"/><rect x="19.2" y="16.6" width="1.0" height="1.0" fill="#ccc"/><rect x="2.3" y="17.9" width="1.0" height="1.0" fill="#ccc"/><rect x="4.9" y="17.9" width="1.0" height="1.0" fill="#ccc"/><rect x="7.5" y="17.9" width="1.0" height="1.0" fill="#ccc"/><rect x="10.1" y="17.9" width="1.0" height="1.0" fill="#ccc"/><rect x="12.7" y="17.9" width="1.0" height="1.0" fill="#ccc"/><rect x="15.3" y="17.9" width="1.0" height="1.0" fill="#ccc"/><rect x="17.9" y="17.9" width="1.0" height="1.0" fill="#ccc"/><rect x="20.5" y="17.9" width="1.0" height="1.0" fill="#ccc"/><rect x="1.0" y="19.2" width="1.0" height="1.0" fill="#ccc"/><rect x="3.6" y="19.2" width="1.0" height="1.0" fill="#ccc"/><rect x="6.2" y="19.2" width="1.0" height="1.0" fill="#ccc"/><rect x="8.8" y="19.2" width="1.0" height="1.0" fill="#ccc"/><rect x="11.4" y="19.2" width="1.0" height="1.0" fill="#ccc"/><rect x="14.0" y="19.2" width="1.0" height="1.0" fill="#ccc"/><rect x="16.6" y="19.2" width="1.0" height="1.0" fill="#ccc"/><rect x="19.2" y="19.2" width="1.0" height="1.0" fill="#ccc"/><rect x="2.3" y="20.5" width="1.0" height="1.0" fill="#ccc"/><rect x="4.9" y="20.5" width="1.0" height="1.0" fill="#ccc"/><rect x="7.5" y="20.5" width="1.0" height="1.0" fill="#ccc"/><rect x="10.1" y="20.5" width="1.0" height="1.0" fill="#ccc"/><rect x="12.7" y="20.5" width="1.0" height="1.0" fill="#ccc"/><rect x="15.3" y="20.5" width="1.0" height="1.0" fill="#ccc"/><rect x="17.9" y="20.5" width="1.0" height="1.0" fill="#ccc"/><rect x="20.5" y="20.5" width="1.0" height="1.0" fill="#ccc"/></svg>
<svg class="a" style="left:1200px;top:172px;" width="21" height="21" viewBox="0 0 21 21"><rect width="21" height="21" fill="#111"/><rect x="1.0" y="1.0" width="1.3" height="1.3" fill="#fff"/><rect x="5.0" y="1.0" width="1.3" height="1.3" fill="#fff"/><rect x="9.0" y="1.0" width="1.3" height="1.3" fill="#fff"/><rect x="13.0" y="1.0" width="1.3" height="1.3" fill="#fff"/><rect x="17.0" y="1.0" width="1.3" height="1.3" fill="#fff"/><rect x="3.0" y="3.0" width="1.3" height="1.3" fill="#fff"/><rect x="7.0" y="3.0" width="1.3" height="1.3" fill="#fff"/><rect x="11.0" y="3.0" width="1.3" height="1.3" fill="#fff"/><rect x="15.0" y="3.0" width="1.3" height="1.3" fill="#fff"/><rect x="19.0" y="3.0" width="1.3" height="1.3" fill="#fff"/><rect x="1.0" y="5.0" width="1.3" height="1.3" fill="#fff"/><rect x="5.0" y="5.0" width="1.3" height="1.3" fill="#fff"/><rect x="9.0" y="5.0" width="1.3" height="1.3" fill="#fff"/><rect x="13.0" y="5.0" width="1.3" height="1.3" fill="#fff"/><rect x="17.0" y="5.0" width="1.3" height="1.3" fill="#fff"/><rect x="3.0" y="7.0" width="1.3" height="1.3" fill="#fff"/><rect x="7.0" y="7.0" width="1.3" height="1.3" fill="#fff"/><rect x="11.0" y="7.0" width="1.3" height="1.3" fill="#fff"/><rect x="15.0" y="7.0" width="1.3" height="1.3" fill="#fff"/><rect x="19.0" y="7.0" width="1.3" height="1.3" fill="#fff"/><rect x="1.0" y="9.0" width="1.3" height="1.3" fill="#fff"/><rect x="5.0" y="9.0" width="1.3" height="1.3" fill="#fff"/><rect x="9.0" y="9.0" width="1.3" height="1.3" fill="#fff"/><rect x="13.0" y="9.0" width="1.3" height="1.3" fill="#fff"/><rect x="17.0" y="9.0" width="1.3" height="1.3" fill="#fff"/><rect x="3.0" y="11.0" width="1.3" height="1.3" fill="#fff"/><rect x="7.0" y="11.0" width="1.3" height="1.3" fill="#fff"/><rect x="11.0" y="11.0" width="1.3" height="1.3" fill="#fff"/><rect x="15.0" y="11.0" width="1.3" height="1.3" fill="#fff"/><rect x="19.0" y="11.0" width="1.3" height="1.3" fill="#fff"/><rect x="1.0" y="13.0" width="1.3" height="1.3" fill="#fff"/><rect x="5.0" y="13.0" width="1.3" height="1.3" fill="#fff"/><rect x="9.0" y="13.0" width="1.3" height="1.3" fill="#fff"/><rect x="13.0" y="13.0" width="1.3" height="1.3" fill="#fff"/><rect x="17.0" y="13.0" width="1.3" height="1.3" fill="#fff"/><rect x="3.0" y="15.0" width="1.3" height="1.3" fill="#fff"/><rect x="7.0" y="15.0" width="1.3" height="1.3" fill="#fff"/><rect x="11.0" y="15.0" width="1.3" height="1.3" fill="#fff"/><rect x="15.0" y="15.0" width="1.3" height="1.3" fill="#fff"/><rect x="19.0" y="15.0" width="1.3" height="1.3" fill="#fff"/><rect x="1.0" y="17.0" width="1.3" height="1.3" fill="#fff"/><rect x="5.0" y="17.0" width="1.3" height="1.3" fill="#fff"/><rect x="9.0" y="17.0" width="1.3" height="1.3" fill="#fff"/><rect x="13.0" y="17.0" width="1.3" height="1.3" fill="#fff"/><rect x="17.0" y="17.0" width="1.3" height="1.3" fill="#fff"/><rect x="3.0" y="19.0" width="1.3" height="1.3" fill="#fff"/><rect x="7.0" y="19.0" width="1.3" height="1.3" fill="#fff"/><rect x="11.0" y="19.0" width="1.3" height="1.3" fill="#fff"/><rect x="15.0" y="19.0" width="1.3" height="1.3" fill="#fff"/><rect x="19.0" y="19.0" width="1.3" height="1.3" fill="#fff"/></svg>
<svg class="a" style="left:1230px;top:172px;" width="21" height="21" viewBox="0 0 21 21"><rect width="21" height="21" fill="#111"/><rect x="1.0" y="1.0" width="1.3" height="1.3" fill="#fff"/><rect x="7.0" y="1.0" width="1.3" height="1.3" fill="#fff"/><rect x="13.0" y="1.0" width="1.3" height="1.3" fill="#fff"/><rect x="19.0" y="1.0" width="1.3" height="1.3" fill="#fff"/><rect x="4.0" y="4.0" width="1.3" height="1.3" fill="#fff"/><rect x="10.0" y="4.0" width="1.3" height="1.3" fill="#fff"/><rect x="16.0" y="4.0" width="1.3" height="1.3" fill="#fff"/><rect x="1.0" y="7.0" width="1.3" height="1.3" fill="#fff"/><rect x="7.0" y="7.0" width="1.3" height="1.3" fill="#fff"/><rect x="13.0" y="7.0" width="1.3" height="1.3" fill="#fff"/><rect x="19.0" y="7.0" width="1.3" height="1.3" fill="#fff"/><rect x="4.0" y="10.0" width="1.3" height="1.3" fill="#fff"/><rect x="10.0" y="10.0" width="1.3" height="1.3" fill="#fff"/><rect x="16.0" y="10.0" width="1.3" height="1.3" fill="#fff"/><rect x="1.0" y="13.0" width="1.3" height="1.3" fill="#fff"/><rect x="7.0" y="13.0" width="1.3" height="1.3" fill="#fff"/><rect x="13.0" y="13.0" width="1.3" height="1.3" fill="#fff"/><rect x="19.0" y="13.0" width="1.3" height="1.3" fill="#fff"/><rect x="4.0" y="16.0" width="1.3" height="1.3" fill="#fff"/><rect x="10.0" y="16.0" width="1.3" height="1.3" fill="#fff"/><rect x="16.0" y="16.0" width="1.3" height="1.3" fill="#fff"/><rect x="1.0" y="19.0" width="1.3" height="1.3" fill="#fff"/><rect x="7.0" y="19.0" width="1.3" height="1.3" fill="#fff"/><rect x="13.0" y="19.0" width="1.3" height="1.3" fill="#fff"/><rect x="19.0" y="19.0" width="1.3" height="1.3" fill="#fff"/></svg>
<svg class="a" style="left:1260px;top:172px;" width="21" height="21" viewBox="0 0 21 21"><rect width="21" height="21" fill="#111"/><rect x="1.0" y="1.0" width="1.3" height="1.3" fill="#fff"/><rect x="10.0" y="1.0" width="1.3" height="1.3" fill="#fff"/><rect x="19.0" y="1.0" width="1.3" height="1.3" fill="#fff"/><rect x="5.5" y="5.5" width="1.3" height="1.3" fill="#fff"/><rect x="14.5" y="5.5" width="1.3" height="1.3" fill="#fff"/><rect x="1.0" y="10.0" width="1.3" height="1.3" fill="#fff"/><rect x="10.0" y="10.0" width="1.3" height="1.3" fill="#fff"/><rect x="19.0" y="10.0" width="1.3" height="1.3" fill="#fff"/><rect x="5.5" y="14.5" width="1.3" height="1.3" fill="#fff"/><rect x="14.5" y="14.5" width="1.3" height="1.3" fill="#fff"/><rect x="1.0" y="19.0" width="1.3" height="1.3" fill="#fff"/><rect x="10.0" y="19.0" width="1.3" height="1.3" fill="#fff"/><rect x="19.0" y="19.0" width="1.3" height="1.3" fill="#fff"/></svg>
<svg class="a" style="left:1290px;top:172px;" width="21" height="21" viewBox="0 0 21 21"><rect width="21" height="21" fill="#fff"/><g transform="rotate(45 10.5 10.5)"><rect x="-10" y="-10" width="41" height="1" fill="#111"/><rect x="-10" y="-7" width="41" height="1" fill="#111"/><rect x="-10" y="-4" width="41" height="1" fill="#111"/><rect x="-10" y="-1" width="41" height="1" fill="#111"/><rect x="-10" y="2" width="41" height="1" fill="#111"/><rect x="-10" y="5" width="41" height="1" fill="#111"/><rect x="-10" y="8" width="41" height="1" fill="#111"/><rect x="-10" y="11" width="41" height="1" fill="#111"/><rect x="-10" y="14" width="41" height="1" fill="#111"/><rect x="-10" y="17" width="41" height="1" fill="#111"/><rect x="-10" y="20" width="41" height="1" fill="#111"/><rect x="-10" y="23" width="41" height="1" fill="#111"/><rect x="-10" y="26" width="41" height="1" fill="#111"/><rect x="-10" y="29" width="41" height="1" fill="#111"/></g></svg>
<svg class="a" style="left:1320px;top:172px;" width="21" height="21" viewBox="0 0 21 21"><rect width="21" height="21" fill="#fff"/><g transform="rotate(-45 10.5 10.5)"><rect x="-10" y="-10" width="41" height="1" fill="#111"/><rect x="-10" y="-7" width="41" height="1" fill="#111"/><rect x="-10" y="-4" width="41" height="1" fill="#111"/><rect x="-10" y="-1" width="41" height="1" fill="#111"/><rect x="-10" y="2" width="41" height="1" fill="#111"/><rect x="-10" y="5" width="41" height="1" fill="#111"/><rect x="-10" y="8" width="41" height="1" fill="#111"/><rect x="-10" y="11" width="41" height="1" fill="#111"/><rect x="-10" y="14" width="41" height="1" fill="#111"/><rect x="-10" y="17" width="41" height="1" fill="#111"/><rect x="-10" y="20" width="41" height="1" fill="#111"/><rect x="-10" y="23" width="41" height="1" fill="#111"/><rect x="-10" y="26" width="41" height="1" fill="#111"/><rect x="-10" y="29" width="41" height="1" fill="#111"/></g></svg>
<svg class="a" style="left:1350px;top:172px;" width="21" height="21" viewBox="0 0 21 21"><rect width="21" height="21" fill="#fff"/><g transform="rotate(45 10.5 10.5)"><rect x="-10" y="-10" width="41" height="1.6" fill="#111"/><rect x="-10" y="-7" width="41" height="1.6" fill="#111"/><rect x="-10" y="-4" width="41" height="1.6" fill="#111"/><rect x="-10" y="-1" width="41" height="1.6" fill="#111"/><rect x="-10" y="2" width="41" height="1.6" fill="#111"/><rect x="-10" y="5" width="41" height="1.6" fill="#111"/><rect x="-10" y="8" width="41" height="1.6" fill="#111"/><rect x="-10" y="11" width="41" height="1.6" fill="#111"/><rect x="-10" y="14" width="41" height="1.6" fill="#111"/><rect x="-10" y="17" width="41" height="1.6" fill="#111"/><rect x="-10" y="20" width="41" height="1.6" fill="#111"/><rect x="-10" y="23" width="41" height="1.6" fill="#111"/><rect x="-10" y="26" width="41" height="1.6" fill="#111"/><rect x="-10" y="29" width="41" height="1.6" fill="#111"/></g></svg>
<svg class="a" style="left:1380px;top:172px;" width="21" height="21" viewBox="0 0 21 21"><rect width="21" height="21" fill="#fff"/><g transform="rotate(-45 10.5 10.5)"><rect x="-10" y="-10" width="41" height="1.6" fill="#111"/><rect x="-10" y="-7" width="41" height="1.6" fill="#111"/><rect x="-10" y="-4" width="41" height="1.6" fill="#111"/><rect x="-10" y="-1" width="41" height="1.6" fill="#111"/><rect x="-10" y="2" width="41" height="1.6" fill="#111"/><rect x="-10" y="5" width="41" height="1.6" fill="#111"/><rect x="-10" y="8" width="41" height="1.6" fill="#111"/><rect x="-10" y="11" width="41" height="1.6" fill="#111"/><rect x="-10" y="14" width="41" height="1.6" fill="#111"/><rect x="-10" y="17" width="41" height="1.6" fill="#111"/><rect x="-10" y="20" width="41" height="1.6" fill="#111"/><rect x="-10" y="23" width="41" height="1.6" fill="#111"/><rect x="-10" y="26" width="41" height="1.6" fill="#111"/><rect x="-10" y="29" width="41" height="1.6" fill="#111"/></g></svg>
<svg class="a" style="left:1410px;top:172px;" width="21" height="21" viewBox="0 0 21 21"><rect width="21" height="21" fill="#fff"/><g transform="rotate(45 10.5 10.5)"><rect x="-10" y="-10" width="41" height="3" fill="#111"/><rect x="-10" y="-4" width="41" height="3" fill="#111"/><rect x="-10" y="2" width="41" height="3" fill="#111"/><rect x="-10" y="8" width="41" height="3" fill="#111"/><rect x="-10" y="14" width="41" height="3" fill="#111"/><rect x="-10" y="20" width="41" height="3" fill="#111"/><rect x="-10" y="26" width="41" height="3" fill="#111"/></g></svg>
<svg class="a" style="left:1440px;top:172px;" width="21" height="21" viewBox="0 0 21 21"><rect width="21" height="21" fill="#fff"/><g transform="rotate(-45 10.5 10.5)"><rect x="-10" y="-10" width="41" height="3" fill="#111"/><rect x="-10" y="-4" width="41" height="3" fill="#111"/><rect x="-10" y="2" width="41" height="3" fill="#111"/><rect x="-10" y="8" width="41" height="3" fill="#111"/><rect x="-10" y="14" width="41" height="3" fill="#111"/><rect x="-10" y="20" width="41" height="3" fill="#111"/><rect x="-10" y="26" width="41" height="3" fill="#111"/></g></svg>
<svg class="a" style="left:1470px;top:172px;" width="21" height="21" viewBox="0 0 21 21"><rect width="21" height="21" fill="#fff"/><g transform="rotate(90 10.5 10.5)"><rect x="-10" y="-10" width="41" height="1.5" fill="#222"/><rect x="-10" y="-5" width="41" height="1.5" fill="#222"/><rect x="-10" y="0" width="41" height="1.5" fill="#222"/><rect x="-10" y="5" width="41" height="1.5" fill="#222"/><rect x="-10" y="10" width="41" height="1.5" fill="#222"/><rect x="-10" y="15" width="41" height="1.5" fill="#222"/><rect x="-10" y="20" width="41" height="1.5" fill="#222"/><rect x="-10" y="25" width="41" height="1.5" fill="#222"/><rect x="-10" y="30" width="41" height="1.5" fill="#222"/></g></svg>
<svg class="a" style="left:1500px;top:172px;" width="21" height="21" viewBox="0 0 21 21"><rect width="21" height="21" fill="#fff"/><g transform="rotate(0 10.5 10.5)"><rect x="-10" y="-10" width="41" height="1.5" fill="#222"/><rect x="-10" y="-5" width="41" height="1.5" fill="#222"/><rect x="-10" y="0" width="41" height="1.5" fill="#222"/><rect x="-10" y="5" width="41" height="1.5" fill="#222"/><rect x="-10" y="10" width="41" height="1.5" fill="#222"/><rect x="-10" y="15" width="41" height="1.5" fill="#222"/><rect x="-10" y="20" width="41" height="1.5" fill="#222"/><rect x="-10" y="25" width="41" height="1.5" fill="#222"/><rect x="-10" y="30" width="41" height="1.5" fill="#222"/></g></svg>
<svg class="a" style="left:1530px;top:172px;" width="21" height="21" viewBox="0 0 21 21"><rect width="21" height="21" fill="#fff"/><g transform="rotate(90 10.5 10.5)"><rect x="-10" y="-10" width="41" height="1.5" fill="#222"/><rect x="-10" y="-7" width="41" height="1.5" fill="#222"/><rect x="-10" y="-4" width="41" height="1.5" fill="#222"/><rect x="-10" y="-1" width="41" height="1.5" fill="#222"/><rect x="-10" y="2" width="41" height="1.5" fill="#222"/><rect x="-10" y="5" width="41" height="1.5" fill="#222"/><rect x="-10" y="8" width="41" height="1.5" fill="#222"/><rect x="-10" y="11" width="41" height="1.5" fill="#222"/><rect x="-10" y="14" width="41" height="1.5" fill="#222"/><rect x="-10" y="17" width="41" height="1.5" fill="#222"/><rect x="-10" y="20" width="41" height="1.5" fill="#222"/><rect x="-10" y="23" width="41" height="1.5" fill="#222"/><rect x="-10" y="26" width="41" height="1.5" fill="#222"/><rect x="-10" y="29" width="41" height="1.5" fill="#222"/></g></svg>
<svg class="a" style="left:1560px;top:172px;" width="21" height="21" viewBox="0 0 21 21"><rect width="21" height="21" fill="#fff"/><g transform="rotate(0 10.5 10.5)"><rect x="-10" y="-10" width="41" height="1.5" fill="#222"/><rect x="-10" y="-7" width="41" height="1.5" fill="#222"/><rect x="-10" y="-4" width="41" height="1.5" fill="#222"/><rect x="-10" y="-1" width="41" height="1.5" fill="#222"/><rect x="-10" y="2" width="41" height="1.5" fill="#222"/><rect x="-10" y="5" width="41" height="1.5" fill="#222"/><rect x="-10" y="8" width="41" height="1.5" fill="#222"/><rect x="-10" y="11" width="41" height="1.5" fill="#222"/><rect x="-10" y="14" width="41" height="1.5" fill="#222"/><rect x="-10" y="17" width="41" height="1.5" fill="#222"/><rect x="-10" y="20" width="41" height="1.5" fill="#222"/><rect x="-10" y="23" width="41" height="1.5" fill="#222"/><rect x="-10" y="26" width="41" height="1.5" fill="#222"/><rect x="-10" y="29" width="41" height="1.5" fill="#222"/></g></svg>
<svg class="a" style="left:1590px;top:172px;" width="21" height="21" viewBox="0 0 21 21"><rect width="21" height="21" fill="#fff"/><g transform="rotate(90 10.5 10.5)"><rect x="-10" y="-10" width="41" height="3" fill="#111"/><rect x="-10" y="-5" width="41" height="3" fill="#111"/><rect x="-10" y="0" width="41" height="3" fill="#111"/><rect x="-10" y="5" width="41" height="3" fill="#111"/><rect x="-10" y="10" width="41" height="3" fill="#111"/><rect x="-10" y="15" width="41" height="3" fill="#111"/><rect x="-10" y="20" width="41" height="3" fill="#111"/><rect x="-10" y="25" width="41" height="3" fill="#111"/><rect x="-10" y="30" width="41" height="3" fill="#111"/></g></svg>
<svg class="a" style="left:1620px;top:172px;" width="21" height="21" viewBox="0 0 21 21"><rect width="21" height="21" fill="#fff"/><g transform="rotate(0 10.5 10.5)"><rect x="-10" y="-10" width="41" height="3" fill="#111"/><rect x="-10" y="-5" width="41" height="3" fill="#111"/><rect x="-10" y="0" width="41" height="3" fill="#111"/><rect x="-10" y="5" width="41" height="3" fill="#111"/><rect x="-10" y="10" width="41" height="3" fill="#111"/><rect x="-10" y="15" width="41" height="3" fill="#111"/><rect x="-10" y="20" width="41" height="3" fill="#111"/><rect x="-10" y="25" width="41" height="3" fill="#111"/><rect x="-10" y="30" width="41" height="3" fill="#111"/></g></svg>
<svg class="a" style="left:1650px;top:172px;" width="21" height="21" viewBox="0 0 21 21"><rect width="21" height="21" fill="#fff"/><g transform="rotate(45 10.5 10.5)"><rect x="-10" y="-10" width="41" height="1" fill="#333"/><rect x="-10" y="-2" width="41" height="1" fill="#333"/><rect x="-10" y="6" width="41" height="1" fill="#333"/><rect x="-10" y="14" width="41" height="1" fill="#333"/><rect x="-10" y="22" width="41" height="1" fill="#333"/><rect x="-10" y="30" width="41" height="1" fill="#333"/></g><g transform="rotate(-45 10.5 10.5)"><rect x="-10" y="-10" width="41" height="1" fill="#333"/><rect x="-10" y="-2" width="41" height="1" fill="#333"/><rect x="-10" y="6" width="41" height="1" fill="#333"/><rect x="-10" y="14" width="41" height="1" fill="#333"/><rect x="-10" y="22" width="41" height="1" fill="#333"/><rect x="-10" y="30" width="41" height="1" fill="#333"/></g></svg>
<svg class="a" style="left:1680px;top:172px;" width="21" height="21" viewBox="0 0 21 21"><rect width="21" height="21" fill="#fff"/><path d="M0 3h21M0 10h21M0 17h21M6 3v7M15 10v7M6 17v4" stroke="#222" stroke-width="2"/></svg>
<div class="sep" style="left:1710px;top:172px"></div>
<svg class="a" style="left:1718px;top:172px;" width="20" height="20" viewBox="0 0 20 20"><path d="M2 18l4-2 9-9-2-2-9 9z" fill="#e8e820"/><path d="M11 7l5-5 2 2-5 5z" fill="#333"/><path d="M10 9l8 8M18 9l-8 8" stroke="#e02020" stroke-width="2.5"/></svg>
<div class="a" style="left:0px;top:31px;width:1px;height:170px;background:#c8c8c8"></div>
<div class="ptitle" style="left:0;top:201px;width:467px"></div>
<div class="t" style="left:3px;top:208px;font-size:15.7px;color:#1a1a28;">Grafikkomponentenfenster</div>
<div class="pclose" style="left:446px;top:211px"></div>
<div class="a" style="left:0px;top:232px;width:467px;height:1px;background:#e6edf4"></div>
<div class="a" style="left:0px;top:233px;width:465px;height:2px;background:#a9a9a9"></div>
<div class="a" style="left:0px;top:235px;width:467px;height:890px;background:#f0f0f0"></div>
<div class="a" style="left:0px;top:235px;width:1px;height:890px;background:#8a8a8a"></div>
<div class="a" style="left:1px;top:235px;width:1px;height:890px;background:#fafafa"></div>
<div class="a" style="left:443px;top:235px;width:23px;height:865px;background:#f6f6f6"></div>
<div class="a" style="left:444px;top:235px;width:1px;height:865px;background:#fcfcfc"></div>
<div class="a" style="left:453px;top:257px;width:3px;height:732px;background:#8e8e8e"></div>
<div class="a" style="left:24px;top:1111px;width:391px;height:3px;background:#8e8e8e"></div>
<div class="a" style="left:0px;top:1123px;width:467px;height:2px;background:#1e1e1e"></div>
<div class="a" style="left:0px;top:1125px;width:170px;height:31px;background:#bdbdbd;border-left:1px solid #8a8a8a"></div>
<div class="a" style="left:172px;top:1125px;width:107px;height:31px;background:#f0f0f0;border-right:2px solid #333;border-bottom:2px solid #333;border-left:1px solid #fff"></div>
<div class="a" style="left:281px;top:1125px;width:178px;height:31px;background:#f0f0f0;border-right:2px solid #333;border-bottom:2px solid #333;border-left:1px solid #fff"></div>
<div class="a" style="left:459px;top:1125px;width:6px;height:31px;background:#c8c8c8"></div>
<div class="t" style="left:-115px;width:400px;text-align:center;top:1133px;font-size:14.5px;color:#222;">Basisfun...</div>
<div class="t" style="left:25px;width:400px;text-align:center;top:1133px;font-size:14.5px;color:#222;">Erwe...</div>
<div class="t" style="left:169px;width:400px;text-align:center;top:1133px;font-size:14.5px;color:#222;">Projektda...</div>
<svg class="a" style="left:54px;top:239px;" width="44" height="44" viewBox="0 0 44 44"><defs><radialGradient id="gbulb"><stop offset="0" stop-color="#fff"/><stop offset=".6" stop-color="#c8f0ff"/><stop offset="1" stop-color="#bde6f7" stop-opacity="0"/></radialGradient></defs><circle cx="26" cy="9" r="9" fill="url(#gbulb)"/><rect x="22" y="17" width="6" height="4" fill="#2a60c0"/><path d="M25 21c0 6 6 8 6 12s-6 4-14 3" fill="none" stroke="#2a60c0" stroke-width="1.5"/><rect x="1" y="27" width="21" height="11" fill="#c8a020"/><rect x="2" y="28" width="18" height="9" fill="#e0306a"/><text x="11" y="36" font-size="9" text-anchor="middle" font-weight="bold" fill="#fff" font-family="Liberation Sans">ON</text></svg>
<div class="t" style="left:-124px;width:400px;text-align:center;top:286px;font-size:15.5px;color:#1e1e1e;">Bit-Schalter</div>
<svg class="a" style="left:202px;top:239px;" width="44" height="44" viewBox="0 0 44 44"><defs><radialGradient id="glamp" cx=".4" cy=".35"><stop offset="0" stop-color="#fff"/><stop offset=".35" stop-color="#f28aa8"/><stop offset="1" stop-color="#c02060"/></radialGradient><linearGradient id="gbase" x1="0" x2="0" y1="0" y2="1"><stop offset="0" stop-color="#f4f4f4"/><stop offset=".5" stop-color="#b0b0b0"/><stop offset="1" stop-color="#e0e0e0"/></linearGradient></defs><ellipse cx="22" cy="28" rx="13" ry="8" fill="url(#gbase)"/><circle cx="22" cy="13" r="11" fill="url(#glamp)"/></svg>
<div class="t" style="left:24.5px;width:400px;text-align:center;top:286px;font-size:15.5px;color:#1e1e1e;">Bit-Lampe</div>
<svg class="a" style="left:351px;top:239px;" width="44" height="44" viewBox="0 0 44 44"><path d="M3 21l14-8h22l3 7-6 6z" fill="#38a8e8"/><path d="M17 13l12 4h10l-3-4z" fill="#a8e4fb"/><path d="M29 17l7 9 6-6-3-3z" fill="#1a78c8"/><path d="M3 21l26-4 7 9z" fill="#70c8f0"/></svg>
<div class="t" style="left:173px;width:400px;text-align:center;top:286px;font-size:15.5px;color:#1e1e1e;">Bit-Schalter mit</div>
<div class="t" style="left:173px;width:400px;text-align:center;top:306px;font-size:15.5px;color:#1e1e1e;">Anzeige</div>
<svg class="a" style="left:54px;top:336px;" width="44" height="44" viewBox="0 0 44 44"><rect x="11" y="0" width="32" height="26" fill="#3a9ae0"/><rect x="14" y="4" width="27" height="19" fill="#e8f4fb"/><rect x="14" y="6" width="22" height="14" fill="none" stroke="#222" stroke-width="1.5" stroke-dasharray="2 1"/><path d="M30 22l6-9 6 9h-3v5h-6v-5z" fill="#d070e0"/><rect x="0" y="27" width="21" height="13" fill="#8a2a1a"/><rect x="1" y="28" width="19" height="11" fill="#c02a20"/><rect x="22" y="27" width="22" height="13" fill="#a06a20"/><rect x="23" y="28" width="20" height="11" fill="#18a040"/><text x="33" y="37" font-size="9" text-anchor="middle" font-weight="bold" fill="#a0ffa0" font-family="Liberation Sans">ON</text></svg>
<div class="t" style="left:-124px;width:400px;text-align:center;top:383px;font-size:15.5px;color:#1e1e1e;">Fenster-Kompone...</div>
<svg class="a" style="left:202px;top:336px;" width="44" height="44" viewBox="0 0 44 44"><rect x="14" y="2" width="8" height="28" fill="#e8e8e8" stroke="#aaa"/><rect x="23" y="2" width="8" height="28" fill="#e8e8e8" stroke="#aaa"/><rect x="32" y="2" width="8" height="28" fill="#e8e8e8" stroke="#aaa"/><rect x="14" y="10" width="8" height="6" fill="#40d8f0"/><rect x="23" y="6" width="8" height="6" fill="#e020e0"/><rect x="23" y="18" width="8" height="6" fill="#f0d020"/><rect x="32" y="8" width="8" height="6" fill="#30e030"/><circle cx="14" cy="30" r="9" fill="#888"/><circle cx="14" cy="30" r="9" fill="none" stroke="#ccc" stroke-width="4" stroke-dasharray="3 3"/><circle cx="14" cy="30" r="4" fill="#fff"/></svg>
<div class="t" style="left:24.5px;width:400px;text-align:center;top:383px;font-size:15.5px;color:#1e1e1e;">Multi-Zustand-Sch...</div>
<svg class="a" style="left:351px;top:336px;" width="44" height="44" viewBox="0 0 44 44"><rect x="2" y="1" width="7" height="28" fill="#40c8f0"/><rect x="9" y="1" width="7" height="28" fill="#e040e0"/><rect x="16" y="1" width="7" height="28" fill="#f0b020"/><rect x="23" y="1" width="7" height="28" fill="#f0e020"/><rect x="30" y="1" width="7" height="28" fill="#30e030"/><path d="M6 1v28M13 1v28M20 1v28M27 1v28M34 1v28" stroke="#fff" stroke-opacity=".5" stroke-width="1.5"/><rect x="1" y="29" width="37" height="5" fill="#909090"/><path d="M5 29v5M12 29v5M19 29v5M26 29v5M33 29v5" stroke="#fff" stroke-width="1.5"/></svg>
<div class="t" style="left:173px;width:400px;text-align:center;top:383px;font-size:15.5px;color:#1e1e1e;">Multi-Zustand-Anz...</div>
<svg class="a" style="left:54px;top:431px;" width="44" height="44" viewBox="0 0 44 44"><rect x="2" y="4" width="38" height="32" rx="3" fill="#b8b8c8" stroke="#707080"/><rect x="4" y="6" width="34" height="28" fill="#e4e4f0"/><path d="M10 8v24M18 8v24M26 8v24M34 8v24" stroke="#333" stroke-width="2"/><rect x="6" y="14" width="8" height="5" fill="#40d0f0"/><rect x="14" y="10" width="8" height="5" fill="#f0d020"/><rect x="14" y="22" width="8" height="5" fill="#e040e0"/><rect x="22" y="18" width="8" height="5" fill="#e040a0"/><rect x="30" y="12" width="8" height="5" fill="#f08040"/></svg>
<div class="t" style="left:-124px;width:400px;text-align:center;top:481px;font-size:15.5px;color:#1e1e1e;">Multi-Zustand-Sch...</div>
<div class="t" style="left:-124px;width:400px;text-align:center;top:501px;font-size:15.5px;color:#1e1e1e;">mit Anzeige</div>
<svg class="a" style="left:202px;top:431px;" width="44" height="44" viewBox="0 0 44 44"><rect x="32" y="0" width="8" height="12" fill="#fff" stroke="#222" stroke-width="1.5"/><rect x="32" y="12" width="8" height="12" fill="#cfe8f8" stroke="#2a4a9a" stroke-width="1.5"/><path d="M2 38v-8h10" fill="none" stroke="#2a4a9a" stroke-width="2"/><rect x="12" y="30" width="10" height="8" fill="#cfe8f8" stroke="#2a4a9a" stroke-width="1.5"/><rect x="22" y="30" width="9" height="8" fill="#2a4a9a"/><rect x="31" y="30" width="9" height="8" fill="#2a4a9a"/><path d="M34 33l3 2-3 2z" fill="#fff"/><path d="M25 33l3 3 3-3" fill="#fff"/><path d="M32 24v6" stroke="#2a4a9a" stroke-width="2"/></svg>
<div class="t" style="left:24.5px;width:400px;text-align:center;top:481px;font-size:15.5px;color:#1e1e1e;">Scrollleiste</div>
<svg class="a" style="left:351px;top:431px;" width="44" height="44" viewBox="0 0 44 44"><path d="M16 2l20 10v14L16 16z" fill="#8ad0b8"/><path d="M16 2l-6 4 20 10 6-4z" fill="#c8f0e0"/><rect x="18" y="18" width="18" height="16" fill="#e8c030"/><rect x="30" y="22" width="8" height="12" fill="#d0a020"/><circle cx="22" cy="35" r="3" fill="#333"/><circle cx="34" cy="35" r="3" fill="#333"/><path d="M2 10l10-6v4h8v6h-8v4z" fill="#f070a0"/><path d="M20 26l8 12h-5v6h-6v-6h-5z" fill="#60b0f0" transform="rotate(-30 20 36)"/></svg>
<div class="t" style="left:173px;width:400px;text-align:center;top:481px;font-size:15.5px;color:#1e1e1e;">Bewegliche</div>
<div class="t" style="left:173px;width:400px;text-align:center;top:501px;font-size:15.5px;color:#1e1e1e;">Komponente</div>
<svg class="a" style="left:54px;top:529px;" width="44" height="44" viewBox="0 0 44 44"><circle cx="22" cy="21" r="17" fill="none" stroke="#40c8c8" stroke-width="2"/><circle cx="22" cy="21" r="13" fill="#f0d0d0" stroke="#e03040" stroke-width="3"/><circle cx="22" cy="21" r="9" fill="#1a3a5a"/><path d="M19 15l9 6-9 6z" fill="#30e0f0"/><circle cx="6" cy="14" r="4" fill="#40d040"/><circle cx="38" cy="12" r="4" fill="#40d040"/><circle cx="34" cy="36" r="4" fill="#40d040"/></svg>
<div class="t" style="left:-124px;width:400px;text-align:center;top:579px;font-size:15.5px;color:#1e1e1e;">Animation</div>
<svg class="a" style="left:202px;top:529px;" width="44" height="44" viewBox="0 0 44 44"><path d="M4 10l28-6 6 30-28 6z" fill="#f8f8f8" stroke="#c0c0c0"/><path d="M10 26h16M12 32h14" stroke="#e0a0a0" stroke-width="2" stroke-dasharray="2 2"/><path d="M14 18l18-12 4 18z" fill="#e03030"/><path d="M14 18l4 6 14-6z" fill="#f08080"/><circle cx="36" cy="6" r="4" fill="#f0d090"/></svg>
<div class="t" style="left:24.5px;width:400px;text-align:center;top:579px;font-size:15.5px;color:#1e1e1e;">Alarmanzeige</div>
<svg class="a" style="left:351px;top:529px;" width="44" height="44" viewBox="0 0 44 44"><path d="M3 0v40h38" fill="none" stroke="#111" stroke-width="2"/><path d="M4 30l8-8 5 4 9-12 5 5 8-13" fill="none" stroke="#30e030" stroke-width="3"/><path d="M4 38l8-8 6 3 8-9 6 4 7-8" fill="none" stroke="#e02020" stroke-width="3"/><path d="M3 4h2M3 12h2M3 20h2M3 28h2M11 40v-2M19 40v-2M27 40v-2M35 40v-2" stroke="#111"/></svg>
<div class="t" style="left:173px;width:400px;text-align:center;top:579px;font-size:15.5px;color:#1e1e1e;">Trenddiagramm</div>
<svg class="a" style="left:54px;top:627px;" width="44" height="44" viewBox="0 0 44 44"><path d="M3 0v40h38" fill="none" stroke="#111" stroke-width="2"/><ellipse cx="22" cy="20" rx="17" ry="9" transform="rotate(-40 22 20)" fill="none" stroke="#3a50e0" stroke-width="3"/><ellipse cx="22" cy="20" rx="17" ry="8" transform="rotate(40 22 20)" fill="none" stroke="#40d8c8" stroke-width="2.5"/></svg>
<div class="t" style="left:-124px;width:400px;text-align:center;top:677px;font-size:15.5px;color:#1e1e1e;">XY-Diagramm</div>
<svg class="a" style="left:202px;top:627px;" width="44" height="44" viewBox="0 0 44 44"><path d="M3 0v40h38" fill="none" stroke="#111" stroke-width="2"/><rect x="8" y="20" width="7" height="19" fill="#e83030"/><rect x="18" y="10" width="8" height="29" fill="#40b0f0"/><rect x="29" y="2" width="8" height="37" fill="#f0c040"/></svg>
<div class="t" style="left:24.5px;width:400px;text-align:center;top:677px;font-size:15.5px;color:#1e1e1e;">Balkendiagramm</div>
<svg class="a" style="left:351px;top:627px;" width="44" height="44" viewBox="0 0 44 44"><path d="M4 2l18 14" stroke="#e02020" stroke-width="4"/><path d="M20 14h14l4 6v14H18z" fill="#c0c0c0" stroke="#666"/><circle cx="28" cy="22" r="5" fill="#222"/><path d="M22 30h12" stroke="#222" stroke-width="3"/><path d="M34 6l2-5M40 12l3-2M1 30l5-2M4 38h6" stroke="#40c8f0" stroke-width="1.5"/></svg>
<div class="t" style="left:173px;width:400px;text-align:center;top:677px;font-size:15.5px;color:#1e1e1e;">Instrument</div>
<svg class="a" style="left:54px;top:725px;" width="44" height="44" viewBox="0 0 44 44"><rect x="3" y="4" width="10" height="34" fill="#e0e0f0" stroke="#666"/><rect x="3" y="24" width="10" height="14" fill="#e040e0"/><path d="M3 8h10M3 12h10M3 16h10M3 20h10" stroke="#555"/><rect x="14" y="18" width="10" height="20" fill="#30c0e0"/><rect x="26" y="12" width="12" height="26" fill="#a0e0f0" stroke="#3a8ab0"/><rect x="26" y="24" width="12" height="14" fill="#30b0e0"/><circle cx="18" cy="34" r="5" fill="#40d040"/><path d="M20 2l4 14M26 6l-2 6" stroke="#2a4ab0" stroke-width="2"/></svg>
<div class="t" style="left:-124px;width:400px;text-align:center;top:775px;font-size:15.5px;color:#1e1e1e;">Rezeptdaten</div>
<svg class="a" style="left:202px;top:725px;" width="44" height="44" viewBox="0 0 44 44"><rect x="2" y="4" width="28" height="34" fill="#e0e8f0" stroke="#9ab"/><rect x="6" y="1" width="30" height="36" fill="#fff" stroke="#9ab"/><path d="M32 1l4 4h-4z" fill="#ccd"/><text x="10" y="12" font-size="8" fill="#e02020" font-family="Liberation Sans" font-weight="bold">1</text><path d="M16 9h14" stroke="#e02020" stroke-width="1.5"/><text x="10" y="22" font-size="8" fill="#20c020" font-family="Liberation Sans" font-weight="bold">2</text><path d="M16 19h14" stroke="#20c020" stroke-width="1.5"/><text x="10" y="32" font-size="8" fill="#2060e0" font-family="Liberation Sans" font-weight="bold">3</text><path d="M16 29h14" stroke="#2060e0" stroke-width="1.5"/></svg>
<div class="t" style="left:24.5px;width:400px;text-align:center;top:775px;font-size:15.5px;color:#1e1e1e;">Ereignisanzeige</div>
<svg class="a" style="left:351px;top:725px;" width="44" height="44" viewBox="0 0 44 44"><rect x="1" y="1" width="28" height="22" fill="#e8e8e8" stroke="#888"/><rect x="4" y="4" width="22" height="16" fill="#40a8d8"/><path d="M6 8h18M6 12h18" stroke="#90d0f0" stroke-dasharray="2 2"/><path d="M22 14l12-6 2 10-8 4z" fill="#f0a030"/><text x="22" y="40" font-size="16" font-weight="bold" font-style="italic" fill="#f05a20" font-family="Liberation Sans">3</text><text x="31" y="36" font-size="14" font-weight="bold" font-style="italic" fill="#40c040" font-family="Liberation Sans">2</text><text x="33" y="18" font-size="10" font-weight="bold" fill="#f0c020" font-family="Liberation Sans">1</text></svg>
<div class="t" style="left:173px;width:400px;text-align:center;top:775px;font-size:15.5px;color:#1e1e1e;">Zahlenkomponente</div>
<svg class="a" style="left:54px;top:822px;" width="44" height="44" viewBox="0 0 44 44"><rect x="1" y="1" width="28" height="22" fill="#e8e8e8" stroke="#888"/><rect x="4" y="4" width="22" height="16" fill="#40a8d8"/><path d="M6 8h18M6 12h18" stroke="#90d0f0" stroke-dasharray="2 2"/><path d="M22 14l12-6 2 10-8 4z" fill="#f0a030"/><text x="14" y="40" font-size="15" font-weight="bold" font-style="italic" fill="#f0c020" font-family="Liberation Sans">CB</text><text x="34" y="24" font-size="11" font-weight="bold" fill="#40c040" font-family="Liberation Sans">A</text></svg>
<div class="t" style="left:-124px;width:400px;text-align:center;top:873px;font-size:15.5px;color:#1e1e1e;">Textkomponente</div>
<svg class="a" style="left:202px;top:822px;" width="44" height="44" viewBox="0 0 44 44"><rect x="3" y="2" width="38" height="32" rx="3" fill="#9ae0f8" stroke="#60a0c0"/><rect x="7" y="6" width="30" height="24" fill="#0a1a6a"/><rect x="7" y="6" width="30" height="24" fill="url(#gosc)"/><path d="M9 20h5v-5h5v5h5v-5h5v5h6" fill="none" stroke="#f0c020" stroke-width="1.8"/><defs><linearGradient id="gosc" x1="0" x2="1"><stop offset="0" stop-color="#000" stop-opacity=".3"/><stop offset="1" stop-color="#3050c0" stop-opacity=".4"/></linearGradient></defs></svg>
<div class="t" style="left:24.5px;width:400px;text-align:center;top:873px;font-size:15.5px;color:#1e1e1e;">Oszilloskop</div>
<svg class="a" style="left:351px;top:822px;" width="44" height="44" viewBox="0 0 44 44"><path d="M14 22L38 10v18L16 32z" fill="#e8eef4" stroke="#8a9aaa"/><path d="M38 10l4 2v16l-4 0z" fill="#b0b8c0"/><circle cx="12" cy="28" r="9" fill="#222"/><circle cx="12" cy="28" r="5" fill="#3a5a6a"/><circle cx="11" cy="27" r="2" fill="#cde"/><path d="M20 12c-4 0-2-8 4-10" fill="none" stroke="#222" stroke-width="2"/></svg>
<div class="t" style="left:173px;width:400px;text-align:center;top:873px;font-size:15.5px;color:#1e1e1e;">Video</div>
<svg class="a" style="left:54px;top:920px;" width="44" height="44" viewBox="0 0 44 44"><path d="M4 10l16-4 18 2-4 30-18 4L2 38z" fill="#4a9ae0"/><path d="M6 12l14-3 16 1-3 26-15 3L4 36z" fill="#fffbe8"/><path d="M20 9v30" stroke="#777" stroke-width="1.5"/><path d="M17 15h6M17 22h6M17 29h6" stroke="#222" stroke-width="1.5"/><path d="M24 28L40 2" stroke="#e0a020" stroke-width="3"/><path d="M22 31l2-3 2 1z" fill="#333"/></svg>
<div class="t" style="left:-124px;width:400px;text-align:center;top:971px;font-size:15.5px;color:#1e1e1e;">Notizbuch</div>
<svg class="a" style="left:202px;top:920px;" width="44" height="44" viewBox="0 0 44 44"><g opacity=".95"><path d="M3 34L11 6h4l3 16 9-16h4l-4 28h-4l3-18-8 14h-3l-3-14-4 18z" fill="#3a7ae0"/><path d="M23 34L31 6h5l4 28h-4l-1-8h-7l-3 8z" fill="#40a8f0"/></g><path d="M0 10h44M0 16h44M0 22h44M0 28h44" stroke="#a8d8f8" stroke-width="1.2" opacity=".6"/><text x="30" y="40" font-size="10" fill="#e05020" font-family="Liberation Sans" font-weight="bold">3W</text></svg>
<div class="t" style="left:24.5px;width:400px;text-align:center;top:971px;font-size:15.5px;color:#1e1e1e;">Neon-Lampe</div>
<svg class="a" style="left:351px;top:920px;" width="44" height="44" viewBox="0 0 44 44"><rect x="0" y="0" width="30" height="20" fill="#2a8ae8"/><rect x="12" y="8" width="30" height="20" fill="#50b8f8" opacity=".95"/><path d="M20 14c0-3 5-3 5 0v10l8 2c3 1 4 4 3 8l-2 8H22l-8-10c-1-2 1-4 3-3l3 2z" fill="#f4dcc0" stroke="#b09070"/></svg>
<div class="t" style="left:173px;width:400px;text-align:center;top:971px;font-size:15.5px;color:#1e1e1e;">Touchauslösefläche</div>
<svg class="a" style="left:54px;top:1018px;" width="44" height="44" viewBox="0 0 44 44"><rect x="1" y="1" width="42" height="42" fill="#fff" stroke="#888"/><rect x="1" y="1" width="42" height="8" fill="#20a0f0"/><path d="M1 16h42M1 23h42M1 30h42M1 37h42M15 9v34M29 9v34" stroke="#aaa"/></svg>
<div class="t" style="left:-124px;width:400px;text-align:center;top:1068px;font-size:15.5px;color:#1e1e1e;">Raster</div>
<svg class="a" style="left:202px;top:1018px;" width="44" height="44" viewBox="0 0 44 44"><rect x="1" y="1" width="38" height="38" fill="#f4f4f4" stroke="#888"/><path d="M1 10h38M1 20h38M1 30h38M10 1v38M20 1v38M30 1v38" stroke="#ddd"/><path d="M3 30c6-30 12-30 18-10s10 10 16-8" fill="none" stroke="#40a0e0" stroke-width="1.8"/><path d="M3 36c8-20 12-22 18-14s10 0 16-6" fill="none" stroke="#e04040" stroke-width="1.8"/><path d="M3 20c10 6 14 16 22 10s8-16 12-18" fill="none" stroke="#40b040" stroke-width="1.8"/><circle cx="30" cy="31" r="8" fill="#a8d8f8" stroke="#5a8ab0" stroke-width="2"/><path d="M36 37l5 5" stroke="#e0a040" stroke-width="3"/></svg>
<div class="t" style="left:24.5px;width:400px;text-align:center;top:1068px;font-size:15.5px;color:#1e1e1e;">Anzeige historischer</div>
<div class="t" style="left:24.5px;width:400px;text-align:center;top:1088px;font-size:15.5px;color:#1e1e1e;">Daten</div>
<svg class="a" style="left:351px;top:1018px;" width="44" height="44" viewBox="0 0 44 44"><rect x="2" y="4" width="34" height="40" rx="2" fill="#e0a040"/><rect x="6" y="8" width="26" height="32" fill="#f4f4f4"/><rect x="12" y="1" width="14" height="6" rx="2" fill="#d0d0d0" stroke="#999"/><path d="M10 14h18M10 19h18M10 24h12M10 29h12M10 34h12" stroke="#b0c0b0"/><circle cx="26" cy="28" r="6" fill="#b8c8d8" stroke="#777"/><path d="M28 30l10 8" stroke="#f0b030" stroke-width="6" stroke-linecap="round"/></svg>
<div class="t" style="left:173px;width:400px;text-align:center;top:1068px;font-size:15.5px;color:#1e1e1e;">Bedienprotokoll</div>
<div class="a" style="left:472px;top:201px;width:1126px;height:722px;background:#f0f0f0"></div>
<div class="a" style="left:472px;top:201px;width:1125px;height:2px;background:#6a6a6a"></div>
<div class="a" style="left:472px;top:201px;width:2px;height:721px;background:#6a6a6a"></div>
<div class="a" style="left:474px;top:203px;width:1100px;height:696px;background:#272727"></div>
<div class="a" style="left:1584px;top:226px;width:3px;height:320px;background:#8e8e8e"></div>
<div class="a" style="left:496px;top:909px;width:464px;height:3px;background:#8e8e8e"></div>
<div class="a" style="left:1597px;top:201px;width:1px;height:722px;background:#fafafa"></div>
<div class="a" style="left:474px;top:203px;width:1100px;height:696px;overflow:hidden"><div class="a" style="left:-474px;top:-203px;width:2000px;height:1188px">
<div class="t" style="left:524px;top:235px;font-size:36px;color:#90ee90;letter-spacing:0.2px">Beispielanwendung Dashboard Messwerte</div>
<div class="lbl" style="left:524.5px;top:208.5px;font-size:17.5px">TXT0</div>
<div class="lbl" style="left:1452px;top:210.5px;font-size:17.5px">DTM0</div>
<div class="a" style="left:1452px;top:233px;width:130px;height:45px;border:1px solid #cfcfcf;border-right:none"></div>
<div class="t" style="left:1452px;top:243px;font-size:12.7px;color:#d6b47a;">2008.08.08  20:00:00</div>
<div class="a" style="left:524px;top:342px;width:225px;height:174px;background:#4d4d4d;border-radius:3px"></div>
<div class="a" style="left:520px;top:409px;width:219px;height:64px;border:1px solid #cdcdcd"></div>
<svg class="a" style="left:544px;top:355px;" width="23" height="48" viewBox="0 0 23 48"><rect x="4" y="0" width="15" height="34" rx="7.5" fill="#90ee90"/><circle cx="11.5" cy="36" r="11" fill="#90ee90"/><path d="M10 10h3M10 13h3M10 16h3" stroke="#333" stroke-width="1.5"/><path d="M13 8v10" stroke="#333" stroke-width="1.5"/></svg>
<div class="t" style="left:577.6px;top:359px;font-size:20px;color:#90ee90;">Temperatur (Ist)</div>
<div class="t" style="left:526px;top:414px;font-size:53px;color:#90ee90;transform:scaleX(0.87);transform-origin:0 0;-webkit-text-stroke:0.7px #90ee90">####.# °C</div>
<div class="a" style="left:749px;top:342px;width:22px;height:174px;background:linear-gradient(#004040 0 86px,#90ee90 86px)"></div>
<div class="a" style="left:749px;top:348px;width:22px;height:162px;border:1px solid #d0d0d0"></div>
<div class="a" style="left:825px;top:342px;width:225px;height:174px;background:#4d4d4d;border-radius:3px"></div>
<div class="a" style="left:819px;top:409px;width:232px;height:64px;border:1px solid #cdcdcd;border-right:none"></div>
<svg class="a" style="left:836px;top:355px;" width="42" height="40" viewBox="0 0 42 40"><path d="M2 2L40 38H2z" fill="#ffa858"/><path d="M9 18L24 32H9z" fill="#4d4d4d"/><path d="M5 10h4M5 18h4M5 26h4" stroke="#4d4d4d" stroke-width="1.5"/></svg>
<div class="t" style="left:877.4px;top:359px;font-size:19.5px;color:#ffa858;">Versatz</div>
<div class="t" style="left:828px;top:414px;font-size:53px;color:#ffa858;transform:scaleX(0.87);transform-origin:0 0;-webkit-text-stroke:0.7px #ffa858">###.# mm</div>
<div class="a" style="left:1050px;top:342px;width:22px;height:174px;background:linear-gradient(#004040 0 86px,#ffa858 86px)"></div>
<div class="a" style="left:1050px;top:348px;width:22px;height:162px;border:1px solid #d0d0d0"></div>
<div class="a" style="left:1127px;top:342px;width:225px;height:174px;background:#4d4d4d;border-radius:3px"></div>
<div class="a" style="left:1149.5px;top:409px;width:183.5px;height:64px;border:1px solid #cdcdcd"></div>
<svg class="a" style="left:1137px;top:355px;" width="44" height="50" viewBox="0 0 44 50"><path d="M22 0C14 10 4 20 4 30a18 18 0 0 0 36 0C40 20 30 10 22 0z" fill="#ffd700"/><path d="M12 28c0 6 4 10 8 11" fill="none" stroke="#555" stroke-width="2"/></svg>
<div class="t" style="left:1193.4px;top:359px;font-size:19px;color:#ffd700;">Feuchtigkeit</div>
<div class="t" style="left:1157.5px;top:414px;font-size:53px;color:#ffd700;transform:scaleX(0.87);transform-origin:0 0;-webkit-text-stroke:0.7px #ffd700">###.# %</div>
<div class="a" style="left:1352px;top:342px;width:22px;height:174px;background:linear-gradient(#004040 0 86px,#ffd700 86px)"></div>
<div class="a" style="left:1352px;top:348px;width:22px;height:162px;border:1px solid #d0d0d0"></div>
<div class="a" style="left:1428px;top:342px;width:146px;height:174px;background:#4d4d4d;border-radius:3px"></div>
<div class="a" style="left:1406px;top:409px;width:168px;height:64px;border:1px solid #cdcdcd;border-right:none"></div>
<svg class="a" style="left:1435px;top:355px;" width="50" height="44" viewBox="0 0 50 44"><path d="M1 17H33A6.5 6.5 0 1 0 26.5 10.5M1 24H37A6.5 6.5 0 1 1 30.5 30.5M1 31H22A5.5 5.5 0 1 1 16.5 36.5" fill="none" stroke="#a8eaf2" stroke-width="3.8"/></svg>
<div class="t" style="left:1495px;top:359px;font-size:19px;color:#a8eaf2;">Volumenstrom</div>
<div class="t" style="left:1414.6px;top:414px;font-size:53px;color:#a8eaf2;transform:scaleX(0.87);transform-origin:0 0;-webkit-text-stroke:0.7px #a8eaf2">###.# m³/h</div>
<div class="a" style="left:524px;top:564px;width:225px;height:174px;background:#4d4d4d;border-radius:3px"></div>
<div class="a" style="left:519px;top:628px;width:230px;height:66px;border:1px solid #cdcdcd;border-right:none"></div>
<svg class="a" style="left:529px;top:576px;" width="44" height="46" viewBox="0 0 44 46"><path d="M6 36A18 18 0 1 1 38 36" fill="none" stroke="#e2b4f8" stroke-width="5"/><path d="M20 28l12-14-6 17z" fill="#e2b4f8"/><circle cx="22" cy="30" r="4" fill="#e2b4f8"/><path d="M8 42h28" stroke="#e2b4f8" stroke-width="4"/></svg>
<div class="t" style="left:588px;top:581px;font-size:19px;color:#e2b4f8;">Geschwindigkeit</div>
<div class="t" style="left:527px;top:635px;font-size:53px;color:#e2b4f8;transform:scaleX(0.87);transform-origin:0 0;-webkit-text-stroke:0.7px #e2b4f8">###.# m/s</div>
<div class="a" style="left:749px;top:564px;width:22px;height:174px;background:linear-gradient(#004040 0 86px,#e2b4f8 86px)"></div>
<div class="a" style="left:749px;top:570px;width:22px;height:162px;border:1px solid #d0d0d0"></div>
<div class="a" style="left:825px;top:564px;width:225px;height:174px;background:#4d4d4d;border-radius:3px"></div>
<div class="a" style="left:841.5px;top:628px;width:186.5px;height:66px;border:1px solid #cdcdcd"></div>
<svg class="a" style="left:830px;top:576px;" width="44" height="44" viewBox="0 0 44 44"><path d="M2 2h40c-2 8-8 12-15 13v5h-10v-5C10 14 4 10 2 2z" fill="#dcbca6"/><path d="M4 44a18 22 0 0 1 36 0z" fill="#dcbca6"/><path d="M12 44a10 12 0 0 1 20 0z" fill="#4d4d4d"/><path d="M22 30l4 8" stroke="#dcbca6" stroke-width="2.5"/></svg>
<div class="t" style="left:897.7px;top:581px;font-size:19px;color:#dcbca6;">Gewicht</div>
<div class="t" style="left:844.8px;top:635px;font-size:53px;color:#dcbca6;transform:scaleX(0.87);transform-origin:0 0;-webkit-text-stroke:0.7px #dcbca6">###.# kg</div>
<div class="a" style="left:1050px;top:564px;width:22px;height:174px;background:linear-gradient(#004040 0 86px,#dcbca6 86px)"></div>
<div class="a" style="left:1050px;top:570px;width:22px;height:162px;border:1px solid #d0d0d0"></div>
<div class="a" style="left:1127px;top:564px;width:225px;height:174px;background:#4d4d4d;border-radius:3px"></div>
<div class="a" style="left:1139px;top:628px;width:204px;height:66px;border:1px solid #cdcdcd"></div>
<svg class="a" style="left:1134px;top:580px;" width="44" height="36" viewBox="0 0 44 36"><ellipse cx="22" cy="18" rx="19" ry="10" fill="none" stroke="#fffbe2" stroke-width="4"/><path d="M18 22l8 6-8 5z" fill="#fffbe2"/><rect x="14" y="26" width="4" height="6" fill="#4d4d4d"/></svg>
<div class="t" style="left:1198px;top:581px;font-size:19px;color:#fffbe2;">Frequenz</div>
<div class="t" style="left:1147.6px;top:635px;font-size:53px;color:#fffbe2;transform:scaleX(0.87);transform-origin:0 0;-webkit-text-stroke:0.7px #fffbe2">###.# Hz</div>
<div class="a" style="left:1352px;top:564px;width:22px;height:174px;background:linear-gradient(#004040 0 86px,#fffbe2 86px)"></div>
<div class="a" style="left:1352px;top:570px;width:22px;height:162px;border:1px solid #d0d0d0"></div>
<div class="a" style="left:1428px;top:564px;width:146px;height:174px;background:#4d4d4d;border-radius:3px"></div>
<div class="a" style="left:1436.5px;top:628px;width:137.5px;height:66px;border:1px solid #cdcdcd;border-right:none"></div>
<svg class="a" style="left:1446px;top:578px;" width="36" height="46" viewBox="0 0 36 46"><path d="M26 0L8 26h12L14 46 34 18H22z" fill="#ff6a22"/></svg>
<div class="t" style="left:1484px;top:581px;font-size:19px;color:#ff6a22;">Spannung</div>
<div class="t" style="left:1442px;top:635px;font-size:53px;color:#ff6a22;transform:scaleX(0.87);transform-origin:0 0;-webkit-text-stroke:0.7px #ff6a22">####.# V</div>
<div class="lbl" style="left:524px;top:320.5px;font-size:17.5px">RRCT0</div>
<div class="lbl" style="left:527.5px;top:333.5px;font-size:17.5px">BG1</div>
<div class="lbl" style="left:580px;top:335.5px;font-size:17.5px">TXT1</div>
<div class="lbl" style="left:520px;top:387.1px;font-size:17.5px">NI0_LW:0</div>
<div class="lbl" style="left:741.5px;top:320.5px;font-size:17.5px">RRCT1</div>
<div class="lbl" style="left:749px;top:326.9px;font-size:17.5px">BR0_LW:0</div>
<div class="lbl" style="left:741.5px;top:470.5px;font-size:17.5px">RRCT2</div>
<div class="lbl" style="left:825px;top:320.5px;font-size:17.5px">RRCT3</div>
<div class="lbl" style="left:828.5px;top:333.5px;font-size:17.5px">BG2</div>
<div class="lbl" style="left:880px;top:335.5px;font-size:17.5px">TXT2</div>
<div class="lbl" style="left:819px;top:387.1px;font-size:17.5px">NI1_LW:0</div>
<div class="lbl" style="left:1042.5px;top:320.5px;font-size:17.5px">RRCT4</div>
<div class="lbl" style="left:1050px;top:326.9px;font-size:17.5px">BR1_LW:0</div>
<div class="lbl" style="left:1042.5px;top:470.5px;font-size:17.5px">RRCT5</div>
<div class="lbl" style="left:1127px;top:320.5px;font-size:17.5px">RRCT6</div>
<div class="lbl" style="left:1130.5px;top:333.5px;font-size:17.5px">BG3</div>
<div class="lbl" style="left:1194px;top:335.5px;font-size:17.5px">TXT3</div>
<div class="lbl" style="left:1149.5px;top:387.1px;font-size:17.5px">NI2_LW:0</div>
<div class="lbl" style="left:1344.5px;top:320.5px;font-size:17.5px">RRCT7</div>
<div class="lbl" style="left:1352px;top:326.9px;font-size:17.5px">BR2_LW:0</div>
<div class="lbl" style="left:1344.5px;top:470.5px;font-size:17.5px">RRCT8</div>
<div class="lbl" style="left:1428px;top:320.5px;font-size:17.5px">RRCT9</div>
<div class="lbl" style="left:1431.5px;top:333.5px;font-size:17.5px">BG4</div>
<div class="lbl" style="left:1496px;top:335.5px;font-size:17.5px">TXT4</div>
<div class="lbl" style="left:1406px;top:387.1px;font-size:17.5px">NI3_LW:0</div>
<div class="lbl" style="left:524px;top:542.5px;font-size:17.5px">RRCT12</div>
<div class="lbl" style="left:527.5px;top:555.5px;font-size:17.5px">BG5</div>
<div class="lbl" style="left:590px;top:557.5px;font-size:17.5px">TXT5</div>
<div class="lbl" style="left:519px;top:609.1px;font-size:17.5px">NI4_LW:0</div>
<div class="lbl" style="left:741.5px;top:542.5px;font-size:17.5px">RRCT13</div>
<div class="lbl" style="left:749px;top:548.9px;font-size:17.5px">BR4_LW:0</div>
<div class="lbl" style="left:741.5px;top:692.5px;font-size:17.5px">RRCT14</div>
<div class="lbl" style="left:825px;top:542.5px;font-size:17.5px">RRCT15</div>
<div class="lbl" style="left:828.5px;top:555.5px;font-size:17.5px">BG6</div>
<div class="lbl" style="left:899px;top:557.5px;font-size:17.5px">TXT6</div>
<div class="lbl" style="left:841.5px;top:609.1px;font-size:17.5px">NI5_LW:0</div>
<div class="lbl" style="left:1042.5px;top:542.5px;font-size:17.5px">RRCT16</div>
<div class="lbl" style="left:1050px;top:548.9px;font-size:17.5px">BR5_LW:0</div>
<div class="lbl" style="left:1042.5px;top:692.5px;font-size:17.5px">RRCT17</div>
<div class="lbl" style="left:1127px;top:542.5px;font-size:17.5px">RRCT18</div>
<div class="lbl" style="left:1130.5px;top:555.5px;font-size:17.5px">BG7</div>
<div class="lbl" style="left:1198px;top:557.5px;font-size:17.5px">TXT7</div>
<div class="lbl" style="left:1139px;top:609.1px;font-size:17.5px">NI6_LW:0</div>
<div class="lbl" style="left:1344.5px;top:542.5px;font-size:17.5px">RRCT19</div>
<div class="lbl" style="left:1352px;top:548.9px;font-size:17.5px">BR6_LW:0</div>
<div class="lbl" style="left:1344.5px;top:692.5px;font-size:17.5px">RRCT20</div>
<div class="lbl" style="left:1428px;top:542.5px;font-size:17.5px">RRCT21</div>
<div class="lbl" style="left:1431.5px;top:555.5px;font-size:17.5px">BG8</div>
<div class="lbl" style="left:1488px;top:557.5px;font-size:17.5px">TXT8</div>
<div class="lbl" style="left:1436.5px;top:609.1px;font-size:17.5px">NI7_LW:0</div>
<div class="lbl" style="left:524px;top:736.5px;font-size:17.5px">BG0</div>
<svg class="a" style="left:524px;top:757px;" width="118" height="134" viewBox="0 0 118 134">
<path d="M12 26C4 44 0 62 0 80C0 94 8 104 19 112C15 100 12 90 12 80C12 62 14 44 12 26z" fill="#f0821e"/>
<path d="M27 18C19 38 13 58 13 80C13 96 22 110 35 119C29 106 26 94 26 80C26 58 29 38 27 18z" fill="#f0821e"/>
<path d="M47 0C39 22 31 44 31 68C31 94 42 114 58 133C76 124 94 112 106 98C112 90 114 84 113 80C110 74 104 70 96 64C86 58 78 50 70 44C62 38 54 30 50 20z" fill="#f0821e"/>
<path d="M52 34l10 14 4-3zM70 58l12 4-5 3z" fill="#272727"/>
<path d="M84 80c-10 0-18 6-18 14s6 12 14 12c8 0 14-4 22-6-6-3-12-5-13-8-1-4 4-8 8-10-4-2-9-2-13-2z" fill="#272727"/>
<path d="M40 96c8 8 14 16 14 26 6-4 8-10 6-16-2-6-10-8-20-10z" fill="#272727"/>
</svg>
<svg class="a" style="left:650px;top:806px;" width="141" height="35" viewBox="0 0 142 35">
<path d="M48 0H9C3 0 0 3 0 8v7c0 5 3 8 9 8h29c2 0 3 1 3 2v2c0 1-1 2-3 2H0v6h41c6 0 9-3 9-8v-7c0-5-3-8-9-8H12c-2 0-3-1-3-2V9c0-1 1-2 3-2h36z" fill="#f0821e"/>
<path d="M52 35V0h29c6 0 8 3 8 8v8c0 5-2 8-8 8H61v11zM61 7v10h17c2 0 3-1 3-2v-6c0-1-1-2-3-2z" fill="#f0821e"/>
<path d="M140 0H101c-6 0-9 3-9 8v7c0 5 3 8 9 8h29c2 0 3 1 3 2v2c0 1-1 2-3 2H92v6h41c6 0 9-3 9-8v-7c0-5-3-8-9-8H104c-2 0-3-1-3-2V9c0-1 1-2 3-2h36z" fill="#f0821e"/>
</svg>
<svg class="a" style="left:664px;top:847px;" width="114" height="22" viewBox="0 0 112 22">
<path d="M0 1h16M8 1v19M24 1v19M50 1H36c-3 0-4 2-4 4v10c0 3 1 5 4 5h10c3 0 4-2 4-4v-6h-8M74 1H60c-2 0-3 1-3 3v12c0 2 1 4 3 4h14M58 10h12M80 20V1h15c3 0 4 2 4 4v1c0 3-1 4-4 4H82l10 0 7 10" fill="none" stroke="#e6e6e6" stroke-width="1.6"/>
</svg>
</div></div>
<div class="ptitle" style="left:1604px;top:201px;width:396px"></div>
<div class="t" style="left:1607px;top:208px;font-size:15.6px;color:#1a1a28;">Projektstrukturfenster</div>
<div class="pclose" style="left:1981px;top:211px"></div>
<div class="a" style="left:1604px;top:232px;width:396px;height:1px;background:#e6edf4"></div>
<div class="a" style="left:1604px;top:233px;width:396px;height:2px;background:#9a9a9a"></div>
<div class="a" style="left:1604px;top:235px;width:396px;height:894px;background:#f0f0f0"></div>
<div class="a" style="left:1605px;top:235px;width:2px;height:894px;background:#8a8a8a"></div>
<div class="a" style="left:1997px;top:235px;width:2px;height:894px;background:#8a8a8a"></div>
<div class="a" style="left:1604px;top:1127px;width:396px;height:2px;background:#262626"></div>
<div class="a" style="left:1604px;top:1129px;width:207px;height:32px;background:#bdbdbd"></div>
<div class="a" style="left:1811px;top:1129px;width:186px;height:32px;background:#f0f0f0;border-right:2px solid #333;border-bottom:2px solid #333;border-left:1px solid #fff"></div>
<div class="t" style="left:1507px;width:400px;text-align:center;top:1138px;font-size:14.5px;color:#222;">Projektbaum...</div>
<div class="t" style="left:1703px;width:400px;text-align:center;top:1138px;font-size:14.5px;color:#222;">Adress-B...</div>
<div class="a" style="left:1642px;top:258px;width:1px;height:483px;background:repeating-linear-gradient(#8a8a8a 0 1px,transparent 1px 2px)"></div>
<div class="a" style="left:1642px;top:740px;width:14px;height:1px;background:repeating-linear-gradient(90deg,#8a8a8a 0 1px,transparent 1px 2px)"></div>
<div class="a" style="left:1667px;top:300px;width:1px;height:18px;background:repeating-linear-gradient(#8a8a8a 0 1px,transparent 1px 2px)"></div>
<div class="a" style="left:1692px;top:324px;width:1px;height:393px;background:repeating-linear-gradient(#8a8a8a 0 1px,transparent 1px 2px)"></div>
<div class="a" style="left:1717px;top:347px;width:1px;height:276px;background:repeating-linear-gradient(#8a8a8a 0 1px,transparent 1px 2px)"></div>
<div class="a" style="left:1612px;top:243.5px;width:11px;height:11px;border:1px solid #8a8a8a;background:#fff"></div>
<div class="a" style="left:1614px;top:248.5px;width:7px;height:1px;background:#111"></div>
<svg class="a" style="left:1627px;top:237px;" width="22" height="23" viewBox="0 0 22 23"><rect x="6" y="0" width="10" height="7" fill="#2020e0"/><rect x="8" y="2" width="6" height="3" fill="#e020e0"/><path d="M8 7v15h8M8 14h6" fill="none" stroke="#111" stroke-width="3"/><rect x="13" y="9" width="9" height="7" fill="#20d020" stroke="#111" stroke-width="1"/><path d="M15 18l4 0 2 2-3 3-3-2z" fill="#d0c020"/></svg>
<div class="t" style="left:1654px;top:239.5px;font-size:15px;color:#1b1b1b;">Dashboard Messwerte</div>
<div class="a" style="left:1648px;top:271px;width:8px;height:1px;background:repeating-linear-gradient(90deg,#8a8a8a 0 1px,transparent 1px 2px)"></div>
<div class="a" style="left:1637px;top:266.5px;width:11px;height:11px;border:1px solid #8a8a8a;background:#fff"></div>
<div class="a" style="left:1639px;top:271.5px;width:7px;height:1px;background:#111"></div>
<div class="a" style="left:1642px;top:268.5px;width:1px;height:7px;background:#111"></div>
<svg class="a" style="left:1656px;top:260px;" width="22" height="23" viewBox="0 0 22 23"><path d="M1 6h8l2 2h9v12H1z" fill="#e0b030" stroke="#a07010"/><path d="M3 11h19l-3 9H1z" fill="#f8d050" stroke="#a07010" stroke-width=".8"/><path d="M6 4h10" stroke="#222" stroke-width="1" stroke-dasharray="1 1"/></svg>
<div class="t" style="left:1683px;top:262.5px;font-size:15px;color:#1b1b1b;">Bibliotheksdatei</div>
<div class="a" style="left:1648px;top:295px;width:8px;height:1px;background:repeating-linear-gradient(90deg,#8a8a8a 0 1px,transparent 1px 2px)"></div>
<div class="a" style="left:1637px;top:290.5px;width:11px;height:11px;border:1px solid #8a8a8a;background:#fff"></div>
<div class="a" style="left:1639px;top:295.5px;width:7px;height:1px;background:#111"></div>
<svg class="a" style="left:1656px;top:284px;" width="22" height="23" viewBox="0 0 22 23"><rect x="1" y="5" width="19" height="14" rx="2" fill="#222"/><rect x="3" y="7" width="15" height="9" fill="#10e8f0"/><rect x="2" y="17" width="17" height="2" fill="#3a3a6a"/></svg>
<div class="t" style="left:1683px;top:286.5px;font-size:15px;color:#1b1b1b;">HMI</div>
<div class="a" style="left:1673px;top:318px;width:8px;height:1px;background:repeating-linear-gradient(90deg,#8a8a8a 0 1px,transparent 1px 2px)"></div>
<div class="a" style="left:1662px;top:313.5px;width:11px;height:11px;border:1px solid #8a8a8a;background:#fff"></div>
<div class="a" style="left:1664px;top:318.5px;width:7px;height:1px;background:#111"></div>
<svg class="a" style="left:1681px;top:307px;" width="22" height="23" viewBox="0 0 22 23"><rect x="1" y="5" width="19" height="14" rx="2" fill="#222"/><rect x="3" y="7" width="15" height="9" fill="#10e8f0"/><rect x="2" y="17" width="17" height="2" fill="#3a3a6a"/></svg>
<div class="t" style="left:1708px;top:309.5px;font-size:15px;color:#1b1b1b;">HMI0</div>
<div class="a" style="left:1698px;top:341px;width:8px;height:1px;background:repeating-linear-gradient(90deg,#8a8a8a 0 1px,transparent 1px 2px)"></div>
<div class="a" style="left:1687px;top:336.5px;width:11px;height:11px;border:1px solid #8a8a8a;background:#fff"></div>
<div class="a" style="left:1689px;top:341.5px;width:7px;height:1px;background:#111"></div>
<svg class="a" style="left:1706px;top:330px;" width="22" height="23" viewBox="0 0 22 23"><rect x="4.5" y="0.5" width="17" height="19" fill="#fff" stroke="#888"/><rect x="1.5" y="3.5" width="17" height="19" fill="#fff" stroke="#888"/></svg>
<div class="t" style="left:1733px;top:332.5px;font-size:15px;color:#1b1b1b;">Fenster</div>
<div class="a" style="left:1723px;top:365px;width:8px;height:1px;background:repeating-linear-gradient(90deg,#8a8a8a 0 1px,transparent 1px 2px)"></div>
<div class="a" style="left:1712px;top:360.5px;width:11px;height:11px;border:1px solid #8a8a8a;background:#fff"></div>
<div class="a" style="left:1714px;top:365.5px;width:7px;height:1px;background:#111"></div>
<div class="a" style="left:1717px;top:362.5px;width:1px;height:7px;background:#111"></div>
<svg class="a" style="left:1731px;top:354px;" width="22" height="23" viewBox="0 0 22 23"><rect x="0.5" y="2.5" width="20" height="19" fill="#fff" stroke="#999"/><path d="M20.5 3v19M1 21.5h20" stroke="#333" stroke-width="1.5"/><path d="M1 3h19" stroke="#555"/></svg>
<div class="t" style="left:1758px;top:356.5px;font-size:15px;color:#1b1b1b;">0:Dashboard Messwerte</div>
<div class="a" style="left:1723px;top:388px;width:8px;height:1px;background:repeating-linear-gradient(90deg,#8a8a8a 0 1px,transparent 1px 2px)"></div>
<div class="a" style="left:1712px;top:383.5px;width:11px;height:11px;border:1px solid #8a8a8a;background:#fff"></div>
<div class="a" style="left:1714px;top:388.5px;width:7px;height:1px;background:#111"></div>
<div class="a" style="left:1717px;top:385.5px;width:1px;height:7px;background:#111"></div>
<svg class="a" style="left:1731px;top:377px;" width="22" height="23" viewBox="0 0 22 23"><rect x="0.5" y="2.5" width="20" height="19" fill="#fff" stroke="#999"/><path d="M20.5 3v19M1 21.5h20" stroke="#333" stroke-width="1.5"/><path d="M1 3h19" stroke="#555"/></svg>
<div class="t" style="left:1758px;top:379.5px;font-size:15px;color:#1b1b1b;">1:Common Window</div>
<div class="a" style="left:1717px;top:412px;width:14px;height:1px;background:repeating-linear-gradient(90deg,#8a8a8a 0 1px,transparent 1px 2px)"></div>
<svg class="a" style="left:1731px;top:401px;" width="22" height="23" viewBox="0 0 22 23"><rect x="0.5" y="2.5" width="20" height="19" fill="#fff" stroke="#999"/><path d="M20.5 3v19M1 21.5h20" stroke="#333" stroke-width="1.5"/><path d="M1 3h19" stroke="#555"/></svg>
<div class="t" style="left:1758px;top:403.5px;font-size:15px;color:#1b1b1b;">2:Fast Selection</div>
<div class="a" style="left:1723px;top:436px;width:8px;height:1px;background:repeating-linear-gradient(90deg,#8a8a8a 0 1px,transparent 1px 2px)"></div>
<div class="a" style="left:1712px;top:431.5px;width:11px;height:11px;border:1px solid #8a8a8a;background:#fff"></div>
<div class="a" style="left:1714px;top:436.5px;width:7px;height:1px;background:#111"></div>
<div class="a" style="left:1717px;top:433.5px;width:1px;height:7px;background:#111"></div>
<svg class="a" style="left:1731px;top:425px;" width="22" height="23" viewBox="0 0 22 23"><rect x="0.5" y="2.5" width="20" height="19" fill="#fff" stroke="#999"/><path d="M20.5 3v19M1 21.5h20" stroke="#333" stroke-width="1.5"/><path d="M1 3h19" stroke="#555"/></svg>
<div class="t" style="left:1758px;top:427.5px;font-size:15px;color:#1b1b1b;">3:NUM Keyboard</div>
<div class="a" style="left:1723px;top:459px;width:8px;height:1px;background:repeating-linear-gradient(90deg,#8a8a8a 0 1px,transparent 1px 2px)"></div>
<div class="a" style="left:1712px;top:454.5px;width:11px;height:11px;border:1px solid #8a8a8a;background:#fff"></div>
<div class="a" style="left:1714px;top:459.5px;width:7px;height:1px;background:#111"></div>
<div class="a" style="left:1717px;top:456.5px;width:1px;height:7px;background:#111"></div>
<svg class="a" style="left:1731px;top:448px;" width="22" height="23" viewBox="0 0 22 23"><rect x="0.5" y="2.5" width="20" height="19" fill="#fff" stroke="#999"/><path d="M20.5 3v19M1 21.5h20" stroke="#333" stroke-width="1.5"/><path d="M1 3h19" stroke="#555"/></svg>
<div class="t" style="left:1758px;top:450.5px;font-size:15px;color:#1b1b1b;">4:ASCII Keyboard</div>
<div class="a" style="left:1723px;top:482px;width:8px;height:1px;background:repeating-linear-gradient(90deg,#8a8a8a 0 1px,transparent 1px 2px)"></div>
<div class="a" style="left:1712px;top:477.5px;width:11px;height:11px;border:1px solid #8a8a8a;background:#fff"></div>
<div class="a" style="left:1714px;top:482.5px;width:7px;height:1px;background:#111"></div>
<div class="a" style="left:1717px;top:479.5px;width:1px;height:7px;background:#111"></div>
<svg class="a" style="left:1731px;top:471px;" width="22" height="23" viewBox="0 0 22 23"><rect x="0.5" y="2.5" width="20" height="19" fill="#fff" stroke="#999"/><path d="M20.5 3v19M1 21.5h20" stroke="#333" stroke-width="1.5"/><path d="M1 3h19" stroke="#555"/></svg>
<div class="t" style="left:1758px;top:473.5px;font-size:15px;color:#1b1b1b;">5:File List Window</div>
<div class="a" style="left:1723px;top:506px;width:8px;height:1px;background:repeating-linear-gradient(90deg,#8a8a8a 0 1px,transparent 1px 2px)"></div>
<div class="a" style="left:1712px;top:501.5px;width:11px;height:11px;border:1px solid #8a8a8a;background:#fff"></div>
<div class="a" style="left:1714px;top:506.5px;width:7px;height:1px;background:#111"></div>
<div class="a" style="left:1717px;top:503.5px;width:1px;height:7px;background:#111"></div>
<svg class="a" style="left:1731px;top:495px;" width="22" height="23" viewBox="0 0 22 23"><rect x="0.5" y="2.5" width="20" height="19" fill="#fff" stroke="#999"/><path d="M20.5 3v19M1 21.5h20" stroke="#333" stroke-width="1.5"/><path d="M1 3h19" stroke="#555"/></svg>
<div class="t" style="left:1758px;top:497.5px;font-size:15px;color:#1b1b1b;">6:Password Window</div>
<div class="a" style="left:1723px;top:530px;width:8px;height:1px;background:repeating-linear-gradient(90deg,#8a8a8a 0 1px,transparent 1px 2px)"></div>
<div class="a" style="left:1712px;top:525.5px;width:11px;height:11px;border:1px solid #8a8a8a;background:#fff"></div>
<div class="a" style="left:1714px;top:530.5px;width:7px;height:1px;background:#111"></div>
<div class="a" style="left:1717px;top:527.5px;width:1px;height:7px;background:#111"></div>
<svg class="a" style="left:1731px;top:519px;" width="22" height="23" viewBox="0 0 22 23"><rect x="0.5" y="2.5" width="20" height="19" fill="#fff" stroke="#999"/><path d="M20.5 3v19M1 21.5h20" stroke="#333" stroke-width="1.5"/><path d="M1 3h19" stroke="#555"/></svg>
<div class="t" style="left:1758px;top:521.5px;font-size:15px;color:#1b1b1b;">7:Confirm Action Window</div>
<div class="a" style="left:1723px;top:553px;width:8px;height:1px;background:repeating-linear-gradient(90deg,#8a8a8a 0 1px,transparent 1px 2px)"></div>
<div class="a" style="left:1712px;top:548.5px;width:11px;height:11px;border:1px solid #8a8a8a;background:#fff"></div>
<div class="a" style="left:1714px;top:553.5px;width:7px;height:1px;background:#111"></div>
<div class="a" style="left:1717px;top:550.5px;width:1px;height:7px;background:#111"></div>
<svg class="a" style="left:1731px;top:542px;" width="22" height="23" viewBox="0 0 22 23"><rect x="0.5" y="2.5" width="20" height="19" fill="#fff" stroke="#999"/><path d="M20.5 3v19M1 21.5h20" stroke="#333" stroke-width="1.5"/><path d="M1 3h19" stroke="#555"/></svg>
<div class="t" style="left:1758px;top:544.5px;font-size:15px;color:#1b1b1b;">8:HEX Keyboard</div>
<div class="a" style="left:1723px;top:576px;width:8px;height:1px;background:repeating-linear-gradient(90deg,#8a8a8a 0 1px,transparent 1px 2px)"></div>
<div class="a" style="left:1712px;top:571.5px;width:11px;height:11px;border:1px solid #8a8a8a;background:#fff"></div>
<div class="a" style="left:1714px;top:576.5px;width:7px;height:1px;background:#111"></div>
<div class="a" style="left:1717px;top:573.5px;width:1px;height:7px;background:#111"></div>
<svg class="a" style="left:1731px;top:565px;" width="22" height="23" viewBox="0 0 22 23"><rect x="0.5" y="2.5" width="20" height="19" fill="#fff" stroke="#999"/><path d="M20.5 3v19M1 21.5h20" stroke="#333" stroke-width="1.5"/><path d="M1 3h19" stroke="#555"/></svg>
<div class="t" style="left:1758px;top:567.5px;font-size:15px;color:#1b1b1b;">9:Login Window</div>
<div class="a" style="left:1723px;top:600px;width:8px;height:1px;background:repeating-linear-gradient(90deg,#8a8a8a 0 1px,transparent 1px 2px)"></div>
<div class="a" style="left:1712px;top:595.5px;width:11px;height:11px;border:1px solid #8a8a8a;background:#fff"></div>
<div class="a" style="left:1714px;top:600.5px;width:7px;height:1px;background:#111"></div>
<div class="a" style="left:1717px;top:597.5px;width:1px;height:7px;background:#111"></div>
<svg class="a" style="left:1731px;top:589px;" width="22" height="23" viewBox="0 0 22 23"><rect x="0.5" y="2.5" width="20" height="19" fill="#fff" stroke="#999"/><path d="M20.5 3v19M1 21.5h20" stroke="#333" stroke-width="1.5"/><path d="M1 3h19" stroke="#555"/></svg>
<div class="t" style="left:1758px;top:591.5px;font-size:15px;color:#1b1b1b;">32766:Pass Through</div>
<div class="a" style="left:1723px;top:623px;width:8px;height:1px;background:repeating-linear-gradient(90deg,#8a8a8a 0 1px,transparent 1px 2px)"></div>
<div class="a" style="left:1712px;top:618.5px;width:11px;height:11px;border:1px solid #8a8a8a;background:#fff"></div>
<div class="a" style="left:1714px;top:623.5px;width:7px;height:1px;background:#111"></div>
<div class="a" style="left:1717px;top:620.5px;width:1px;height:7px;background:#111"></div>
<svg class="a" style="left:1731px;top:612px;" width="22" height="23" viewBox="0 0 22 23"><rect x="0.5" y="2.5" width="20" height="19" fill="#fff" stroke="#999"/><path d="M20.5 3v19M1 21.5h20" stroke="#333" stroke-width="1.5"/><path d="M1 3h19" stroke="#555"/></svg>
<div class="t" style="left:1758px;top:614.5px;font-size:15px;color:#1b1b1b;">32767:External Device Download</div>
<div class="a" style="left:1698px;top:646px;width:8px;height:1px;background:repeating-linear-gradient(90deg,#8a8a8a 0 1px,transparent 1px 2px)"></div>
<div class="a" style="left:1687px;top:641.5px;width:11px;height:11px;border:1px solid #8a8a8a;background:#fff"></div>
<div class="a" style="left:1689px;top:646.5px;width:7px;height:1px;background:#111"></div>
<div class="a" style="left:1692px;top:643.5px;width:1px;height:7px;background:#111"></div>
<svg class="a" style="left:1706px;top:635px;" width="22" height="23" viewBox="0 0 22 23"><path d="M1 6h8l2 2h9v12H1z" fill="#e0b030" stroke="#a07010"/><path d="M3 11h19l-3 9H1z" fill="#f8d050" stroke="#a07010" stroke-width=".8"/><path d="M6 4h10" stroke="#222" stroke-width="1" stroke-dasharray="1 1"/></svg>
<div class="t" style="left:1733px;top:637.5px;font-size:15px;color:#1b1b1b;">Makro-Datei</div>
<div class="a" style="left:1692px;top:670px;width:14px;height:1px;background:repeating-linear-gradient(90deg,#8a8a8a 0 1px,transparent 1px 2px)"></div>
<svg class="a" style="left:1706px;top:659px;" width="22" height="23" viewBox="0 0 22 23"><path d="M1 6h8l2 2h9v12H1z" fill="#e0b030" stroke="#a07010"/><path d="M3 11h19l-3 9H1z" fill="#f8d050" stroke="#a07010" stroke-width=".8"/><path d="M6 4h10" stroke="#222" stroke-width="1" stroke-dasharray="1 1"/></svg>
<div class="t" style="left:1733px;top:661.5px;font-size:15px;color:#1b1b1b;">Submakro-Datei</div>
<div class="a" style="left:1692px;top:694px;width:14px;height:1px;background:repeating-linear-gradient(90deg,#8a8a8a 0 1px,transparent 1px 2px)"></div>
<svg class="a" style="left:1706px;top:683px;" width="22" height="23" viewBox="0 0 22 23"><path d="M1 6h8l2 2h9v12H1z" fill="#e0b030" stroke="#a07010"/><path d="M3 11h19l-3 9H1z" fill="#f8d050" stroke="#a07010" stroke-width=".8"/><path d="M6 4h10" stroke="#222" stroke-width="1" stroke-dasharray="1 1"/></svg>
<div class="t" style="left:1733px;top:685.5px;font-size:15px;color:#1b1b1b;">Rezeptspeicher:</div>
<div class="a" style="left:1698px;top:717px;width:8px;height:1px;background:repeating-linear-gradient(90deg,#8a8a8a 0 1px,transparent 1px 2px)"></div>
<div class="a" style="left:1687px;top:712.5px;width:11px;height:11px;border:1px solid #8a8a8a;background:#fff"></div>
<div class="a" style="left:1689px;top:717.5px;width:7px;height:1px;background:#111"></div>
<div class="a" style="left:1692px;top:714.5px;width:1px;height:7px;background:#111"></div>
<svg class="a" style="left:1706px;top:706px;" width="22" height="23" viewBox="0 0 22 23"><rect x="1" y="5" width="19" height="14" rx="2" fill="#222"/><rect x="3" y="7" width="15" height="9" fill="#10e8f0"/><rect x="2" y="17" width="17" height="2" fill="#3a3a6a"/></svg>
<div class="t" style="left:1733px;top:708.5px;font-size:15px;color:#1b1b1b;">Kommunikationsteilnehmer</div>
<div class="a" style="left:1642px;top:740px;width:14px;height:1px;background:repeating-linear-gradient(90deg,#8a8a8a 0 1px,transparent 1px 2px)"></div>
<svg class="a" style="left:1656px;top:729px;" width="22" height="23" viewBox="0 0 22 23"><path d="M2 8h18v12H2z" fill="#a8a020" stroke="#555"/><path d="M4 4h18v4H2z" fill="#d8d040"/><path d="M6 12v5M10 12v5M14 12v5" stroke="#fff" stroke-width="1.5"/></svg>
<div class="t" style="left:1683px;top:731.5px;font-size:15px;color:#1b1b1b;">PLCs</div>
<div class="a" style="left:1626px;top:248px;width:5px;height:1px;background:repeating-linear-gradient(90deg,#8a8a8a 0 1px,transparent 1px 2px)"></div>
<div class="ptitle" style="left:472px;top:930px;width:557px"></div>
<div class="t" style="left:475px;top:937px;font-size:15.5px;color:#1a1a28;">Meldungsfenster</div>
<div class="pclose" style="left:1008px;top:940px"></div>
<div class="a" style="left:472px;top:961px;width:557px;height:2px;background:#9a9a9a"></div>
<div class="a" style="left:472px;top:963px;width:557px;height:199px;background:#f0f0f0"></div>
<div class="a" style="left:472px;top:963px;width:1px;height:199px;background:#a8a8a8"></div>
<div class="a" style="left:474px;top:963px;width:555px;height:26px;background:#8fb0e3"></div>
<div class="a" style="left:706px;top:963px;width:3px;height:26px;background:#d6d6d6"></div>
<div class="a" style="left:922px;top:963px;width:3px;height:26px;background:#d6d6d6"></div>
<div class="t" style="left:390px;width:400px;text-align:center;top:969px;font-size:14.3px;color:#1a1a1a;">Info 14</div>
<div class="t" style="left:614px;width:400px;text-align:center;top:969px;font-size:14.3px;color:#1a1a1a;">Warnungen 0</div>
<div class="t" style="left:1006px;top:969px;font-size:14.3px;color:#1a1a1a;">Feh</div>
<div class="a" style="left:1028px;top:963px;width:1px;height:26px;background:#8fb0e3"></div>
<div class="a" style="left:474px;top:989px;width:533px;height:26px;background:#f0f0f0"></div>
<div class="a" style="left:474px;top:1014px;width:533px;height:1px;background:#d8d8d8"></div>
<div class="a" style="left:536px;top:992px;width:1px;height:22px;background:#b8b8b8"></div>
<div class="a" style="left:537px;top:992px;width:1px;height:22px;background:#fff"></div>
<div class="a" style="left:813px;top:992px;width:1px;height:22px;background:#b8b8b8"></div>
<div class="a" style="left:814px;top:992px;width:1px;height:22px;background:#fff"></div>
<div class="a" style="left:979px;top:992px;width:1px;height:22px;background:#b8b8b8"></div>
<div class="a" style="left:980px;top:992px;width:1px;height:22px;background:#fff"></div>
<div class="t" style="left:481px;top:994px;font-size:16px;color:#1e1e1e;">Nr.</div>
<div class="t" style="left:545.5px;top:994px;font-size:16.4px;color:#1e1e1e;">Beschreibung</div>
<div class="t" style="left:823px;top:994px;font-size:16.4px;color:#1e1e1e;">Position</div>
<div class="t" style="left:987px;top:994px;font-size:14px;color:#1e1e1e;">...N</div>
<div class="a" style="left:474px;top:1017px;width:531px;height:21px;background:#ffffff"></div>
<div class="a" style="left:474px;top:1038px;width:531px;height:21px;background:#f6f6f6"></div>
<div class="a" style="left:474px;top:1059px;width:531px;height:21px;background:#ffffff"></div>
<div class="a" style="left:474px;top:1079px;width:531px;height:21px;background:#f6f6f6"></div>
<div class="a" style="left:474px;top:1100px;width:531px;height:21px;background:#ffffff"></div>
<div class="a" style="left:474px;top:1121px;width:531px;height:21px;background:#f6f6f6"></div>
<div class="t" style="left:481px;top:1020px;font-size:16px;color:#1e1e1e;">7</div>
<div class="t" style="left:545px;top:1020px;font-size:16px;color:#1e1e1e;">File List Window</div>
<div class="t" style="left:481px;top:1041px;font-size:16px;color:#1e1e1e;">8</div>
<div class="t" style="left:545px;top:1041px;font-size:16px;color:#1e1e1e;">Password Window</div>
<div class="t" style="left:481px;top:1062px;font-size:16px;color:#1e1e1e;">9</div>
<div class="t" style="left:545px;top:1062px;font-size:16px;color:#1e1e1e;">Confirm Action Window</div>
<div class="t" style="left:481px;top:1082px;font-size:16px;color:#1e1e1e;">10</div>
<div class="t" style="left:545px;top:1082px;font-size:16px;color:#1e1e1e;">HEX Keyboard</div>
<div class="t" style="left:481px;top:1103px;font-size:16px;color:#1e1e1e;">11</div>
<div class="t" style="left:545px;top:1103px;font-size:16px;color:#1e1e1e;">Login Window</div>
<div class="t" style="left:481px;top:1124px;font-size:16px;color:#1e1e1e;">12</div>
<div class="t" style="left:545px;top:1124px;font-size:16px;color:#1e1e1e;">Pass Through</div>
<div class="a" style="left:1016px;top:1065px;width:3px;height:38px;background:#8e8e8e"></div>
<div class="a" style="left:495px;top:1150px;width:471px;height:3px;background:#8e8e8e"></div>
<div class="ptitle" style="left:1035px;top:930px;width:563px"></div>
<div class="t" style="left:1037px;top:937px;font-size:15.7px;color:#1a1a28;">Komponentenlistenfenster</div>
<div class="pclose" style="left:1577px;top:940px"></div>
<div class="a" style="left:1035px;top:962px;width:563px;height:201px;background:#f0f0f0;border:1px solid #777;border-left:2px solid #777"></div>
<div class="a" style="left:1037px;top:964px;width:539px;height:23px;background:#f0f0f0"></div>
<div class="a" style="left:1037px;top:987px;width:539px;height:2px;background:#b0b0b0"></div>
<div class="a" style="left:1139px;top:963px;width:2px;height:24px;background:#8e8e8e"></div>
<div class="a" style="left:1243px;top:963px;width:2px;height:24px;background:#8e8e8e"></div>
<div class="a" style="left:1348px;top:963px;width:2px;height:24px;background:#8e8e8e"></div>
<div class="a" style="left:1452px;top:963px;width:2px;height:24px;background:#8e8e8e"></div>
<div class="a" style="left:1556px;top:963px;width:2px;height:24px;background:#8e8e8e"></div>
<div class="t" style="left:1044px;top:968px;font-size:15.5px;color:#1e1e1e;">HMI</div>
<div class="t" style="left:1148px;top:968px;font-size:15px;color:#1e1e1e;">Fenster-ID</div>
<div class="t" style="left:1252px;top:968px;font-size:15.5px;color:#1e1e1e;">Bild</div>
<div class="t" style="left:1357px;top:968px;font-size:15.5px;color:#1e1e1e;">Komponen...</div>
<div class="t" style="left:1461px;top:968px;font-size:14px;color:#1e1e1e;">SPS lesen</div>
<div class="t" style="left:1565px;top:968px;font-size:15.5px;color:#1e1e1e;">L</div>
<div class="a" style="left:1038px;top:990px;width:537px;height:21px;background:#0078d7"></div>
<div class="t" style="left:1041px;top:993px;font-size:16px;color:#ffffff;">HMI0</div>
<div class="t" style="left:1148px;top:993px;font-size:16px;color:#ffffff;">0</div>
<div class="t" style="left:1252.5px;top:993px;font-size:15px;color:#ffffff;">Dashboard...</div>
<div class="t" style="left:1357px;top:993px;font-size:16px;color:#ffffff;">TM0</div>
<div class="t" style="left:1041px;top:1014px;font-size:16px;color:#1e1e1e;">HMI0</div>
<div class="t" style="left:1148px;top:1014px;font-size:16px;color:#1e1e1e;">0</div>
<div class="t" style="left:1252.5px;top:1014px;font-size:15px;color:#1e1e1e;">Dashboard...</div>
<div class="t" style="left:1357px;top:1014px;font-size:16px;color:#1e1e1e;">BR7</div>
<div class="t" style="left:1564px;top:1014px;font-size:15px;color:#1e1e1e;">L'</div>
<div class="t" style="left:1041px;top:1035px;font-size:16px;color:#1e1e1e;">HMI0</div>
<div class="t" style="left:1148px;top:1035px;font-size:16px;color:#1e1e1e;">0</div>
<div class="t" style="left:1252.5px;top:1035px;font-size:15px;color:#1e1e1e;">Dashboard...</div>
<div class="t" style="left:1357px;top:1035px;font-size:16px;color:#1e1e1e;">NI7</div>
<div class="t" style="left:1564px;top:1035px;font-size:15px;color:#1e1e1e;">L'</div>
<div class="t" style="left:1041px;top:1055px;font-size:16px;color:#1e1e1e;">HMI0</div>
<div class="t" style="left:1148px;top:1055px;font-size:16px;color:#1e1e1e;">0</div>
<div class="t" style="left:1252.5px;top:1055px;font-size:15px;color:#1e1e1e;">Dashboard...</div>
<div class="t" style="left:1357px;top:1055px;font-size:16px;color:#1e1e1e;">BR6</div>
<div class="t" style="left:1564px;top:1055px;font-size:15px;color:#1e1e1e;">L'</div>
<div class="t" style="left:1041px;top:1076px;font-size:16px;color:#1e1e1e;">HMI0</div>
<div class="t" style="left:1148px;top:1076px;font-size:16px;color:#1e1e1e;">0</div>
<div class="t" style="left:1252.5px;top:1076px;font-size:15px;color:#1e1e1e;">Dashboard...</div>
<div class="t" style="left:1357px;top:1076px;font-size:16px;color:#1e1e1e;">NI6</div>
<div class="t" style="left:1564px;top:1076px;font-size:15px;color:#1e1e1e;">L'</div>
<div class="t" style="left:1041px;top:1097px;font-size:16px;color:#1e1e1e;">HMI0</div>
<div class="t" style="left:1148px;top:1097px;font-size:16px;color:#1e1e1e;">0</div>
<div class="t" style="left:1252.5px;top:1097px;font-size:15px;color:#1e1e1e;">Dashboard...</div>
<div class="t" style="left:1357px;top:1097px;font-size:16px;color:#1e1e1e;">BR5</div>
<div class="t" style="left:1564px;top:1097px;font-size:15px;color:#1e1e1e;">L'</div>
<div class="t" style="left:1041px;top:1118px;font-size:16px;color:#1e1e1e;">HMI0</div>
<div class="t" style="left:1148px;top:1118px;font-size:16px;color:#1e1e1e;">0</div>
<div class="t" style="left:1252.5px;top:1118px;font-size:15px;color:#1e1e1e;">Dashboard...</div>
<div class="t" style="left:1357px;top:1118px;font-size:16px;color:#1e1e1e;">NI5</div>
<div class="t" style="left:1564px;top:1118px;font-size:15px;color:#1e1e1e;">L'</div>
<div class="a" style="left:1585px;top:986px;width:3px;height:21px;background:#8e8e8e"></div>
<div class="a" style="left:1058px;top:1150px;width:142px;height:3px;background:#8e8e8e"></div>
<div class="a" style="left:0px;top:1163px;width:2000px;height:25px;background:#f4f4f4"></div>
<div class="t" style="left:3px;top:1170px;font-size:16px;color:#1e1e1e;">Bereit</div>
<div class="a" style="left:780px;top:1166px;width:308px;height:24px;border-top:1px solid #a8a8a8;border-left:1px solid #a8a8a8;background:#f5f5f5"></div>
<div class="a" style="left:1090px;top:1166px;width:243px;height:24px;border-top:1px solid #a8a8a8;border-left:1px solid #a8a8a8;background:#f5f5f5"></div>
<div class="a" style="left:1336px;top:1166px;width:241px;height:24px;border-top:1px solid #a8a8a8;border-left:1px solid #a8a8a8;background:#f5f5f5"></div>
<div class="a" style="left:1582px;top:1166px;width:97px;height:24px;border-top:1px solid #a8a8a8;border-left:1px solid #a8a8a8;background:#f5f5f5"></div>
<div class="a" style="left:1683px;top:1166px;width:98px;height:24px;border-top:1px solid #a8a8a8;border-left:1px solid #a8a8a8;background:#f5f5f5"></div>
<div class="a" style="left:1784px;top:1166px;width:163px;height:24px;border-top:1px solid #a8a8a8;border-left:1px solid #a8a8a8;background:#f5f5f5"></div>
<div class="a" style="left:1951px;top:1166px;width:51px;height:24px;border-top:1px solid #a8a8a8;border-left:1px solid #a8a8a8;background:#f5f5f5"></div>
<div class="t" style="left:1094px;top:1170px;font-size:16.6px;color:#1e1e1e;">Maus [x=1822  y=680]</div>
<div class="t" style="left:1787px;top:1170px;font-size:15px;color:#1e1e1e;">ARM:51.89M</div>
</body></html>
